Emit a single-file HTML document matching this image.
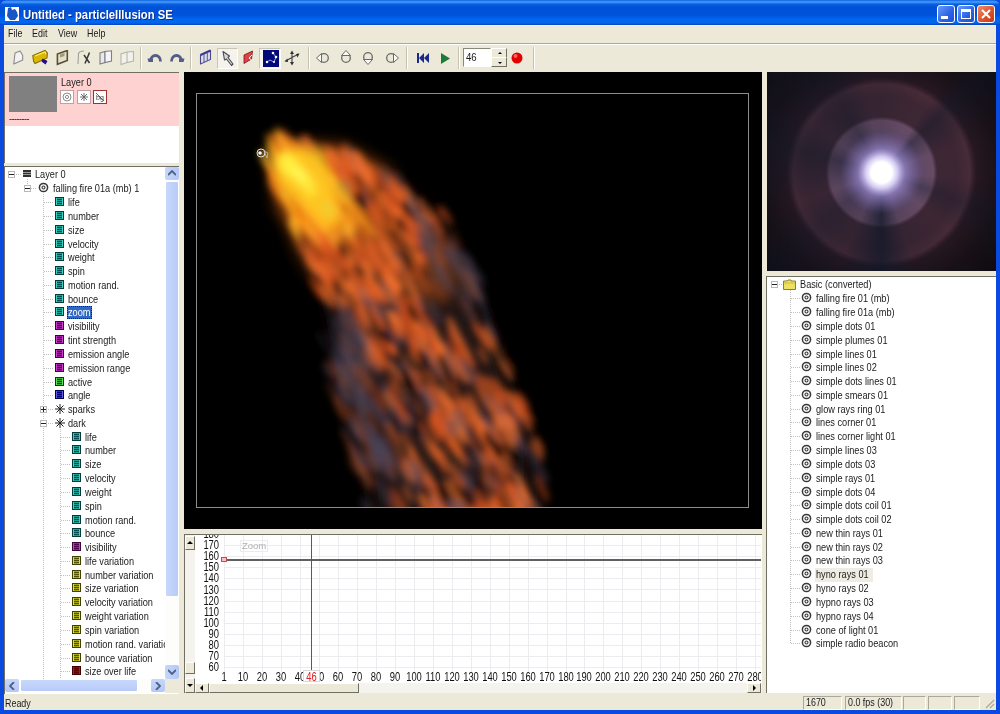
<!DOCTYPE html><html><head><meta charset="utf-8"><style>
*{margin:0;padding:0;box-sizing:border-box}
html,body{width:1000px;height:714px;overflow:hidden;background:#0054e3;font-family:"Liberation Sans",sans-serif;position:relative}
.a{position:absolute}
.t{position:absolute;white-space:nowrap;font-size:9.2px;color:#000;line-height:11px}
.beige{background:#ece9d8}
.tt{position:absolute;white-space:nowrap;font-size:10.5px;line-height:12px;color:#1a1a1a;transform-origin:0 0;transform:scaleX(0.875)}
#wrap{position:absolute;left:0;top:0;width:1000px;height:714px;will-change:transform}
.exp{position:absolute;width:7px;height:7px;border:1px solid #b8b8b8;background:#fff}
.exp:before{content:"";position:absolute;left:0px;top:2px;width:5px;height:1.3px;background:#222}
.exp.plus:after{content:"";position:absolute;left:2px;top:0px;width:1.3px;height:5px;background:#222}
.vl{position:absolute;width:1px;background:repeating-linear-gradient(#c0c0c0 0 1px,transparent 1px 2px)}
.hl{position:absolute;height:1px;background:repeating-linear-gradient(90deg,#c0c0c0 0 1px,transparent 1px 2px)}
.pi{position:absolute;width:9px;height:9px;border:1px solid}
.pi:before{content:"";position:absolute;left:1px;top:1px;width:5px;height:1px;background:var(--ln)}
.pi:after{content:"";position:absolute;left:1px;top:3px;width:5px;height:1px;background:var(--ln);box-shadow:0 2px 0 var(--dk)}
.tgt{position:absolute;width:9px;height:9px;border:1px solid #303030;border-radius:50%}
.tgt:before{content:"";position:absolute;left:2px;top:2px;width:3px;height:3px;border-radius:50%;background:#303030}
.btn3d{position:absolute;background:#ece9d8;border:1px solid;border-color:#fff #716f64 #716f64 #fff}
</style></head><body><div id="wrap"><div class="a" style="left:0;top:0;width:1000px;height:714px;background:#0a4ae0"></div>
<div class="a" style="left:0;top:0;width:1000px;height:25px;background:linear-gradient(#0a5cd8 0px,#3890f8 1.2px,#3890f8 2.5px,#0a60e0 4px,#0052d8 7px,#0052d8 15px,#0066ee 19px,#0066ee 23px,#0840c0 25px);border-radius:7px 7px 0 0"></div>
<div class="a" style="left:5px;top:7px;width:14px;height:14px;background:#fff"></div>
<svg class="a" style="left:5px;top:6px" width="15" height="15" viewBox="0 0 15 15"><path d="M3 2 L6 1 L7 4 L10 3 L12 6 L13 10 L10 14 L5 14 L2 10 Z" fill="#1a55c8"/></svg>
<div class="t" style="left:23px;top:7.7px;font-size:12.4px;font-weight:bold;color:#fff;line-height:14px;text-shadow:1px 1px 0 #0a2a8a;transform-origin:0 0;transform:scaleX(0.91)">Untitled - particleIllusion SE</div>
<div class="a" style="left:937px;top:5px;width:18px;height:18px;border:1px solid #fff;border-radius:3px;background:linear-gradient(135deg,#6a9cf8,#2a62e6 60%,#1d50d0)"></div>
<div class="a" style="left:957px;top:5px;width:18px;height:18px;border:1px solid #fff;border-radius:3px;background:linear-gradient(135deg,#6a9cf8,#2a62e6 60%,#1d50d0)"></div>
<div class="a" style="left:977px;top:5px;width:18px;height:18px;border:1px solid #fff;border-radius:3px;background:linear-gradient(135deg,#f08a6a,#d9502a 60%,#c03a1c)"></div>
<div class="a" style="left:941px;top:16px;width:7px;height:3px;background:#fff"></div>
<div class="a" style="left:961px;top:9px;width:10px;height:10px;border:1px solid #fff;border-top-width:3px"></div>
<svg class="a" style="left:977px;top:5px" width="18" height="18"><path d="M5 5 L13 13 M13 5 L5 13" stroke="#fff" stroke-width="2"/></svg>
<div class="a beige" style="left:4px;top:25px;width:992px;height:685px"></div>
<div class="a" style="left:4px;top:25px;width:992px;height:1px;background:#f4f2ea"></div>
<div class="tt" style="left:8px;top:27.5px;font-size:10.2px">File</div>
<div class="tt" style="left:32px;top:27.5px;font-size:10.2px">Edit</div>
<div class="tt" style="left:58px;top:27.5px;font-size:10.2px">View</div>
<div class="tt" style="left:87px;top:27.5px;font-size:10.2px">Help</div>
<div class="a" style="left:4px;top:43px;width:992px;height:1px;background:#aca899"></div>
<div class="a" style="left:4px;top:44px;width:992px;height:1px;background:#fff"></div>
<div class="a" style="left:140px;top:47px;width:1px;height:22px;background:#c5c2b2"></div>
<div class="a" style="left:141px;top:47px;width:1px;height:22px;background:#fff"></div>
<div class="a" style="left:190px;top:47px;width:1px;height:22px;background:#c5c2b2"></div>
<div class="a" style="left:191px;top:47px;width:1px;height:22px;background:#fff"></div>
<div class="a" style="left:308px;top:47px;width:1px;height:22px;background:#c5c2b2"></div>
<div class="a" style="left:309px;top:47px;width:1px;height:22px;background:#fff"></div>
<div class="a" style="left:406px;top:47px;width:1px;height:22px;background:#c5c2b2"></div>
<div class="a" style="left:407px;top:47px;width:1px;height:22px;background:#fff"></div>
<div class="a" style="left:458px;top:47px;width:1px;height:22px;background:#c5c2b2"></div>
<div class="a" style="left:459px;top:47px;width:1px;height:22px;background:#fff"></div>
<div class="a" style="left:533px;top:47px;width:1px;height:22px;background:#c5c2b2"></div>
<div class="a" style="left:534px;top:47px;width:1px;height:22px;background:#fff"></div>
<svg class="a" style="left:12px;top:50px" width="13" height="16" viewBox="0 0 13 16"><path d="M1.8 14 L3 3 L8.2 1.1 L10.7 5.6 L10.7 10 Z" fill="#f2f2f2" stroke="#8a8a8a" stroke-width="1.1" stroke-linejoin="round"/></svg>
<svg class="a" style="left:32px;top:49px" width="17" height="17" viewBox="0 0 17 17"><path d="M1.5 12 L0.8 6.5 L13 1.5 L15.4 4 L15 9 L3 14.5 Z" fill="#dcb800" stroke="#857000" stroke-width="1.1"/><path d="M3 7 L13 3 L14 5" fill="none" stroke="#fff060" stroke-width="1.2"/><path d="M10.5 9.5 L15.5 12 L13.5 15.5 L9.5 12.5 Z" fill="#2a0a8a"/></svg>
<svg class="a" style="left:56px;top:50px" width="13" height="16" viewBox="0 0 13 16"><path d="M1.4 14.3 L1.4 4 L11.3 0.5 L11.3 10.5 Z" fill="#e4e0d0" stroke="#5a5030" stroke-width="1.6"/><path d="M4 4.5 L8.5 3 L8.5 6 L4 7.5 Z" fill="#a09878"/></svg>
<svg class="a" style="left:77px;top:50px" width="14" height="16" viewBox="0 0 14 16"><path d="M1 14 L1.5 3.5 Q2.5 1 7 1" fill="none" stroke="#a0a0a0" stroke-width="1.1"/><path d="M7 5 L12.5 13 M12.5 2.5 L8 13.5" stroke="#383838" stroke-width="1.5"/></svg>
<svg class="a" style="left:99px;top:50px" width="14" height="16" viewBox="0 0 14 16"><path d="M1 14 L1 3 L6 1.5 L6 12.5 Z" fill="#e8e8f0" stroke="#808080" stroke-width="1.1"/><path d="M6 12.5 L6 1.5 L12.5 0.8 L12.5 11 Z" fill="#f4f4fa" stroke="#808080" stroke-width="1.1"/></svg>
<svg class="a" style="left:120px;top:50px" width="15" height="16" viewBox="0 0 15 16"><path d="M1 14.5 L1 4 L7 2 L7 12.5 Z M7 12.5 L7 2 L13.5 1.5 L13.5 11 Z" fill="#f2f1ea" stroke="#b8b6aa" stroke-width="1.1"/></svg>
<svg class="a" style="left:147px;top:52px" width="17" height="12" viewBox="0 0 17 12"><path d="M3.5 9.5 C3.5 1.5, 13.5 1.5, 13.5 9.5" fill="none" stroke="#555c88" stroke-width="2.8"/><path d="M0.5 6.5 L6 6.5 L6 10 L1.5 10 Z" fill="#555c88"/></svg>
<svg class="a" style="left:168px;top:52px" width="17" height="12" viewBox="0 0 17 12"><path d="M3.5 9.5 C3.5 1.5, 13.5 1.5, 13.5 9.5" fill="none" stroke="#555c88" stroke-width="2.8"/><path d="M11 6.5 L16.5 6.5 L15.5 10 L11 10 Z" fill="#555c88"/></svg>
<svg class="a" style="left:199px;top:49px" width="13" height="17" viewBox="0 0 13 17"><path d="M1.5 15 L1.5 6 L11.5 1.5 L11.5 10.5 Z" fill="#dcdcec" stroke="#4a4a8a" stroke-width="1.1"/><path d="M1.5 6 L11.5 1.5" stroke="#3a3a90" stroke-width="2"/><path d="M5 5 L5 13.5 M8.3 3.5 L8.3 12" stroke="#5a5a90" stroke-width="1"/></svg>
<div class="a" style="left:217px;top:48px;width:21px;height:21px;background:#f4f3ee;border:1px solid;border-color:#c8c5b4 #fff #fff #c8c5b4"></div>
<svg class="a" style="left:221px;top:50px" width="14" height="17" viewBox="0 0 14 17"><path d="M2 1.5 L8.5 6 L7 7.5 L12 14 L10.5 15.5 L5.5 9 L3.5 10 Z" fill="#d8d8d8" stroke="#4a4a4a" stroke-width="1.1" stroke-linejoin="round"/></svg>
<svg class="a" style="left:243px;top:50px" width="11" height="15" viewBox="0 0 11 15"><path d="M1 5 L9.5 1 L8.5 9 L1 13.5 Z" fill="#e0404a" stroke="#701818" stroke-width="0.8"/><path d="M9 5 L6 8 L8.5 10" fill="none" stroke="#f8f8f8" stroke-width="1"/></svg>
<div class="a" style="left:259px;top:48px;width:22px;height:21px;background:#f6f5ef;border:1px solid;border-color:#c8c5b4 #fff #fff #c8c5b4"></div>
<svg class="a" style="left:263px;top:50px" width="16" height="17" viewBox="0 0 16 17"><rect x="0" y="0" width="16" height="17" fill="#000a78"/><path d="M4 12 L7 10 L11 12 L13 7 L10 3" fill="none" stroke="#c0c0ff" stroke-width="0.8"/><circle cx="10" cy="3" r="1.3" fill="#fff"/><circle cx="13" cy="7" r="1.3" fill="#fff"/><circle cx="4" cy="12" r="1.2" fill="#fff"/><circle cx="11" cy="12" r="1" fill="#fff"/></svg>
<svg class="a" style="left:284px;top:50px" width="16" height="16" viewBox="0 0 16 16"><path d="M8 2 L8 14 M1.5 11 L14.5 4" stroke="#404048" stroke-width="1.1"/><path d="M6 4 L8 0.5 L10 4 Z M6 12 L8 15.5 L10 12 Z M0.5 11.5 L3.5 8.5 L4 12 Z M15.5 3.5 L12 4 L13.5 7.5 Z" fill="#303038"/></svg>
<svg class="a" style="left:316px;top:49.5px" width="16" height="16" viewBox="0 0 16 16"><circle cx="8" cy="8" r="4.3" fill="none" stroke="#6a6a6a" stroke-width="1.3"/><path d="M0.5 8 L5.5 3.5 L5.5 12.5 Z" fill="#fafafa" stroke="#6a6a6a" stroke-width="1"/></svg>
<svg class="a" style="left:338px;top:49.5px" width="16" height="16" viewBox="0 0 16 16"><circle cx="8" cy="8" r="4.3" fill="none" stroke="#6a6a6a" stroke-width="1.3"/><path d="M8 0.5 L3.5 5.5 L12.5 5.5 Z" fill="#fafafa" stroke="#6a6a6a" stroke-width="1"/></svg>
<svg class="a" style="left:360px;top:49px" width="16" height="16" viewBox="0 0 16 16"><circle cx="8" cy="8" r="4.3" fill="none" stroke="#6a6a6a" stroke-width="1.3"/><path d="M8 15.5 L3.5 10.5 L12.5 10.5 Z" fill="#fafafa" stroke="#6a6a6a" stroke-width="1"/></svg>
<svg class="a" style="left:383px;top:49.5px" width="16" height="16" viewBox="0 0 16 16"><circle cx="8" cy="8" r="4.3" fill="none" stroke="#6a6a6a" stroke-width="1.3"/><path d="M15.5 8 L10.5 3.5 L10.5 12.5 Z" fill="#fafafa" stroke="#6a6a6a" stroke-width="1"/></svg>
<svg class="a" style="left:417px;top:53px" width="13" height="10" viewBox="0 0 13 10"><path d="M0 0 L2 0 L2 10 L0 10 Z M2 5 L7 0 L7 10 Z M7 5 L12 0 L12 10 Z" fill="#1a2a8a"/></svg>
<svg class="a" style="left:441px;top:53px" width="10" height="11" viewBox="0 0 10 11"><path d="M0 0 L9 5.5 L0 11 Z" fill="#1f7a3a"/></svg>
<div class="a" style="left:463px;top:48px;width:28px;height:19px;background:#fff;border:1px solid;border-color:#8a8878 #fff #fff #8a8878"></div>
<div class="tt" style="left:466px;top:50.5px;font-size:11px">46</div>
<div class="btn3d" style="left:491px;top:48px;width:16px;height:10px"></div>
<div class="btn3d" style="left:491px;top:57px;width:16px;height:10px"></div>
<svg class="a" style="left:497.5px;top:51.5px" width="4" height="2" viewBox="0 0 4 2"><path d="M0 2 L2 0 L4 2 Z" fill="#000"/></svg>
<svg class="a" style="left:497.5px;top:61.5px" width="4" height="2" viewBox="0 0 4 2"><path d="M0 0 L2 2 L4 0 Z" fill="#000"/></svg>
<svg class="a" style="left:511px;top:52px" width="12" height="12" viewBox="0 0 12 12"><circle cx="6" cy="6" r="5.5" fill="#e00000"/><circle cx="4.5" cy="4" r="2" fill="#ff6060"/></svg>
<div class="a" style="left:4px;top:72px;width:175px;height:91px;background:#fff;border-top:1px solid #716f64;border-left:1px solid #716f64"></div>
<div class="a" style="left:5px;top:73px;width:174px;height:53px;background:#ffd2d2"></div>
<div class="a" style="left:9px;top:76px;width:48px;height:36px;background:#808080"></div>
<div class="tt" style="left:60.5px;top:75.8px;font-size:10.5px">Layer 0</div>
<div class="a" style="left:60px;top:90px;width:14px;height:14px;background:#fff;border:1px solid #c0a0a0"></div>
<div class="a" style="left:77px;top:90px;width:14px;height:14px;background:#fff;border:1px solid #c0a0a0"></div>
<div class="a" style="left:93px;top:90px;width:14px;height:14px;background:#fff;border:1px solid #a03030"></div>
<svg class="a" style="left:62px;top:92px" width="10" height="10" viewBox="0 0 10 10"><circle cx="5" cy="5" r="4" fill="none" stroke="#707070" stroke-width="0.8"/><circle cx="5" cy="5" r="1.6" fill="none" stroke="#707070" stroke-width="0.8"/></svg>
<svg class="a" style="left:79px;top:92px" width="10" height="10" viewBox="0 0 10 10"><path d="M5 1 L5 9 M1 5 L9 5 M2 2 L8 8 M8 2 L2 8" stroke="#606060" stroke-width="0.9"/></svg>
<svg class="a" style="left:95px;top:92px" width="10" height="10" viewBox="0 0 10 10"><path d="M1 1 L9 9" stroke="#802020" stroke-width="0.8"/><text x="1" y="8" font-size="7" font-family="Liberation Sans" fill="#404040">bg</text></svg>
<div class="t" style="left:9px;top:114px;font-size:9px;letter-spacing:-0.5px">--------</div>
<div class="a" style="left:4px;top:166px;width:175px;height:528px;background:#fff;border-top:1px solid #716f64;border-left:1px solid #716f64;overflow:hidden"></div>
<div class="a" style="left:5px;top:167px;width:160px;height:512px;overflow:hidden"><div class="vl" style="left:22px;top:12px;height:5px"></div><div class="hl" style="left:9px;top:7px;width:8px"></div><div class="hl" style="left:26px;top:21px;width:6px"></div><div class="vl" style="left:38px;top:27px;height:506px"></div><div class="vl" style="left:54.5px;top:262px;height:271px"></div><div class="exp " style="left:2.5px;top:3.5px"></div><div class="a" style="left:18px;top:3px;width:8px;height:1.5px;background:#303030;box-shadow:0 2.5px 0 #303030,0 5px 0 #303030"></div><div class="tt" style="left:30px;top:0.6999999999999886px">Layer 0</div><div class="exp " style="left:19px;top:17.5px"></div><svg class="a" style="left:33px;top:15px" width="11" height="11"><circle cx="5.5" cy="5.5" r="4.1" fill="none" stroke="#383838" stroke-width="1.5"/><circle cx="5.5" cy="5.5" r="1.5" fill="none" stroke="#383838" stroke-width="1.1"/></svg><div class="tt" style="left:48px;top:14.699999999999989px">falling fire 01a (mb) 1</div><div class="hl" style="left:39px;top:35px;width:10px"></div><div class="pi" style="left:50px;top:29.5px;background:#18a090;border-color:#003c3c;--ln:#005050;--dk:#005050;box-shadow:inset 1px 0 0 #40d0c0,inset -1px 0 0 #40d0c0"></div><div class="tt" style="left:63px;top:28.69999999999999px">life</div><div class="hl" style="left:39px;top:49px;width:10px"></div><div class="pi" style="left:50px;top:43.5px;background:#18a090;border-color:#003c3c;--ln:#005050;--dk:#005050;box-shadow:inset 1px 0 0 #40d0c0,inset -1px 0 0 #40d0c0"></div><div class="tt" style="left:63px;top:42.69999999999999px">number</div><div class="hl" style="left:39px;top:63px;width:10px"></div><div class="pi" style="left:50px;top:57.5px;background:#18a090;border-color:#003c3c;--ln:#005050;--dk:#005050;box-shadow:inset 1px 0 0 #40d0c0,inset -1px 0 0 #40d0c0"></div><div class="tt" style="left:63px;top:56.69999999999999px">size</div><div class="hl" style="left:39px;top:77px;width:10px"></div><div class="pi" style="left:50px;top:71.5px;background:#18a090;border-color:#003c3c;--ln:#005050;--dk:#005050;box-shadow:inset 1px 0 0 #40d0c0,inset -1px 0 0 #40d0c0"></div><div class="tt" style="left:63px;top:70.69999999999999px">velocity</div><div class="hl" style="left:39px;top:90px;width:10px"></div><div class="pi" style="left:50px;top:84.5px;background:#18a090;border-color:#003c3c;--ln:#005050;--dk:#005050;box-shadow:inset 1px 0 0 #40d0c0,inset -1px 0 0 #40d0c0"></div><div class="tt" style="left:63px;top:83.69999999999999px">weight</div><div class="hl" style="left:39px;top:104px;width:10px"></div><div class="pi" style="left:50px;top:98.5px;background:#18a090;border-color:#003c3c;--ln:#005050;--dk:#005050;box-shadow:inset 1px 0 0 #40d0c0,inset -1px 0 0 #40d0c0"></div><div class="tt" style="left:63px;top:97.69999999999999px">spin</div><div class="hl" style="left:39px;top:118px;width:10px"></div><div class="pi" style="left:50px;top:112.5px;background:#18a090;border-color:#003c3c;--ln:#005050;--dk:#005050;box-shadow:inset 1px 0 0 #40d0c0,inset -1px 0 0 #40d0c0"></div><div class="tt" style="left:63px;top:111.69999999999999px">motion rand.</div><div class="hl" style="left:39px;top:132px;width:10px"></div><div class="pi" style="left:50px;top:126.5px;background:#18a090;border-color:#003c3c;--ln:#005050;--dk:#005050;box-shadow:inset 1px 0 0 #40d0c0,inset -1px 0 0 #40d0c0"></div><div class="tt" style="left:63px;top:125.69999999999999px">bounce</div><div class="hl" style="left:39px;top:145px;width:10px"></div><div class="pi" style="left:50px;top:139.5px;background:#18a090;border-color:#003c3c;--ln:#005050;--dk:#005050;box-shadow:inset 1px 0 0 #40d0c0,inset -1px 0 0 #40d0c0"></div><div class="a" style="left:62px;top:138.5px;width:25px;height:13px;background:#316ac5;outline:1px dotted #102060;outline-offset:-1px"></div><div class="tt" style="left:63px;top:138.7px;color:#fff">zoom</div><div class="hl" style="left:39px;top:159px;width:10px"></div><div class="pi" style="left:50px;top:153.5px;background:#9a189a;border-color:#400040;--ln:#500050;--dk:#500050;box-shadow:inset 1px 0 0 #d040d0,inset -1px 0 0 #d040d0"></div><div class="tt" style="left:63px;top:152.7px">visibility</div><div class="hl" style="left:39px;top:173px;width:10px"></div><div class="pi" style="left:50px;top:167.5px;background:#9a189a;border-color:#400040;--ln:#500050;--dk:#500050;box-shadow:inset 1px 0 0 #d040d0,inset -1px 0 0 #d040d0"></div><div class="tt" style="left:63px;top:166.7px">tint strength</div><div class="hl" style="left:39px;top:187px;width:10px"></div><div class="pi" style="left:50px;top:181.5px;background:#9a189a;border-color:#400040;--ln:#500050;--dk:#500050;box-shadow:inset 1px 0 0 #d040d0,inset -1px 0 0 #d040d0"></div><div class="tt" style="left:63px;top:180.7px">emission angle</div><div class="hl" style="left:39px;top:201px;width:10px"></div><div class="pi" style="left:50px;top:195.5px;background:#9a189a;border-color:#400040;--ln:#500050;--dk:#500050;box-shadow:inset 1px 0 0 #d040d0,inset -1px 0 0 #d040d0"></div><div class="tt" style="left:63px;top:194.7px">emission range</div><div class="hl" style="left:39px;top:215px;width:10px"></div><div class="pi" style="left:50px;top:209.5px;background:#30b030;border-color:#004000;--ln:#005000;--dk:#005000;box-shadow:inset 1px 0 0 #60e060,inset -1px 0 0 #60e060"></div><div class="tt" style="left:63px;top:208.7px">active</div><div class="hl" style="left:39px;top:228px;width:10px"></div><div class="pi" style="left:50px;top:222.5px;background:#2a2ac0;border-color:#000050;--ln:#000070;--dk:#000070;box-shadow:inset 1px 0 0 #6060f0,inset -1px 0 0 #6060f0"></div><div class="tt" style="left:63px;top:221.7px">angle</div><div class="exp plus" style="left:35px;top:238.5px"></div><div class="hl" style="left:43px;top:242px;width:6px"></div><svg class="a" style="left:50px;top:237px" width="10" height="10"><path d="M5 0 L5 10 M0 5 L10 5 M1.5 1.5 L8.5 8.5 M8.5 1.5 L1.5 8.5" stroke="#202020" stroke-width="1"/></svg><div class="tt" style="left:63px;top:235.7px">sparks</div><div class="exp " style="left:35px;top:252.5px"></div><div class="hl" style="left:43px;top:256px;width:6px"></div><svg class="a" style="left:50px;top:251px" width="10" height="10"><path d="M5 0 L5 10 M0 5 L10 5 M1.5 1.5 L8.5 8.5 M8.5 1.5 L1.5 8.5" stroke="#202020" stroke-width="1"/></svg><div class="tt" style="left:63px;top:249.7px">dark</div><div class="hl" style="left:55.5px;top:270px;width:10.5px"></div><div class="pi" style="left:67px;top:264.5px;background:#18a090;border-color:#003c3c;--ln:#005050;--dk:#005050;box-shadow:inset 1px 0 0 #40d0c0,inset -1px 0 0 #40d0c0"></div><div class="tt" style="left:80px;top:263.7px">life</div><div class="hl" style="left:55.5px;top:283px;width:10.5px"></div><div class="pi" style="left:67px;top:277.5px;background:#18a090;border-color:#003c3c;--ln:#005050;--dk:#005050;box-shadow:inset 1px 0 0 #40d0c0,inset -1px 0 0 #40d0c0"></div><div class="tt" style="left:80px;top:276.7px">number</div><div class="hl" style="left:55.5px;top:297px;width:10.5px"></div><div class="pi" style="left:67px;top:291.5px;background:#18a090;border-color:#003c3c;--ln:#005050;--dk:#005050;box-shadow:inset 1px 0 0 #40d0c0,inset -1px 0 0 #40d0c0"></div><div class="tt" style="left:80px;top:290.7px">size</div><div class="hl" style="left:55.5px;top:311px;width:10.5px"></div><div class="pi" style="left:67px;top:305.5px;background:#18a090;border-color:#003c3c;--ln:#005050;--dk:#005050;box-shadow:inset 1px 0 0 #40d0c0,inset -1px 0 0 #40d0c0"></div><div class="tt" style="left:80px;top:304.7px">velocity</div><div class="hl" style="left:55.5px;top:325px;width:10.5px"></div><div class="pi" style="left:67px;top:319.5px;background:#18a090;border-color:#003c3c;--ln:#005050;--dk:#005050;box-shadow:inset 1px 0 0 #40d0c0,inset -1px 0 0 #40d0c0"></div><div class="tt" style="left:80px;top:318.7px">weight</div><div class="hl" style="left:55.5px;top:339px;width:10.5px"></div><div class="pi" style="left:67px;top:333.5px;background:#18a090;border-color:#003c3c;--ln:#005050;--dk:#005050;box-shadow:inset 1px 0 0 #40d0c0,inset -1px 0 0 #40d0c0"></div><div class="tt" style="left:80px;top:332.7px">spin</div><div class="hl" style="left:55.5px;top:353px;width:10.5px"></div><div class="pi" style="left:67px;top:347.5px;background:#18a090;border-color:#003c3c;--ln:#005050;--dk:#005050;box-shadow:inset 1px 0 0 #40d0c0,inset -1px 0 0 #40d0c0"></div><div class="tt" style="left:80px;top:346.70000000000005px">motion rand.</div><div class="hl" style="left:55.5px;top:366px;width:10.5px"></div><div class="pi" style="left:67px;top:360.5px;background:#18a090;border-color:#003c3c;--ln:#005050;--dk:#005050;box-shadow:inset 1px 0 0 #40d0c0,inset -1px 0 0 #40d0c0"></div><div class="tt" style="left:80px;top:359.70000000000005px">bounce</div><div class="hl" style="left:55.5px;top:380px;width:10.5px"></div><div class="pi" style="left:67px;top:374.5px;background:#9a189a;border-color:#400040;--ln:#500050;--dk:#500050;box-shadow:inset 1px 0 0 #d040d0,inset -1px 0 0 #d040d0"></div><div class="tt" style="left:80px;top:373.70000000000005px">visibility</div><div class="hl" style="left:55.5px;top:394px;width:10.5px"></div><div class="pi" style="left:67px;top:388.5px;background:#a8a810;border-color:#404000;--ln:#505000;--dk:#505000;box-shadow:inset 1px 0 0 #e0e040,inset -1px 0 0 #e0e040"></div><div class="tt" style="left:80px;top:387.70000000000005px">life variation</div><div class="hl" style="left:55.5px;top:408px;width:10.5px"></div><div class="pi" style="left:67px;top:402.5px;background:#a8a810;border-color:#404000;--ln:#505000;--dk:#505000;box-shadow:inset 1px 0 0 #e0e040,inset -1px 0 0 #e0e040"></div><div class="tt" style="left:80px;top:401.70000000000005px">number variation</div><div class="hl" style="left:55.5px;top:421px;width:10.5px"></div><div class="pi" style="left:67px;top:415.5px;background:#a8a810;border-color:#404000;--ln:#505000;--dk:#505000;box-shadow:inset 1px 0 0 #e0e040,inset -1px 0 0 #e0e040"></div><div class="tt" style="left:80px;top:414.70000000000005px">size variation</div><div class="hl" style="left:55.5px;top:435px;width:10.5px"></div><div class="pi" style="left:67px;top:429.5px;background:#a8a810;border-color:#404000;--ln:#505000;--dk:#505000;box-shadow:inset 1px 0 0 #e0e040,inset -1px 0 0 #e0e040"></div><div class="tt" style="left:80px;top:428.70000000000005px">velocity variation</div><div class="hl" style="left:55.5px;top:449px;width:10.5px"></div><div class="pi" style="left:67px;top:443.5px;background:#a8a810;border-color:#404000;--ln:#505000;--dk:#505000;box-shadow:inset 1px 0 0 #e0e040,inset -1px 0 0 #e0e040"></div><div class="tt" style="left:80px;top:442.70000000000005px">weight variation</div><div class="hl" style="left:55.5px;top:463px;width:10.5px"></div><div class="pi" style="left:67px;top:457.5px;background:#a8a810;border-color:#404000;--ln:#505000;--dk:#505000;box-shadow:inset 1px 0 0 #e0e040,inset -1px 0 0 #e0e040"></div><div class="tt" style="left:80px;top:456.70000000000005px">spin variation</div><div class="hl" style="left:55.5px;top:477px;width:10.5px"></div><div class="pi" style="left:67px;top:471.5px;background:#a8a810;border-color:#404000;--ln:#505000;--dk:#505000;box-shadow:inset 1px 0 0 #e0e040,inset -1px 0 0 #e0e040"></div><div class="tt" style="left:80px;top:470.70000000000005px">motion rand. variation</div><div class="hl" style="left:55.5px;top:491px;width:10.5px"></div><div class="pi" style="left:67px;top:485.5px;background:#a8a810;border-color:#404000;--ln:#505000;--dk:#505000;box-shadow:inset 1px 0 0 #e0e040,inset -1px 0 0 #e0e040"></div><div class="tt" style="left:80px;top:484.70000000000005px">bounce variation</div><div class="hl" style="left:55.5px;top:504px;width:10.5px"></div><div class="pi" style="left:67px;top:498.5px;background:#900010;border-color:#400000;--ln:#600000;--dk:#600000;box-shadow:inset 1px 0 0 #b02020,inset -1px 0 0 #b02020"></div><div class="tt" style="left:80px;top:497.70000000000005px">size over life</div></div>
<div class="a" style="left:165px;top:167px;width:14px;height:512px;background:#fdfdfb"></div>
<div class="a" style="left:165px;top:167px;width:14px;height:13px;background:linear-gradient(90deg,#c6d6fb,#b4c8f6);border-radius:2px"></div>
<svg class="a" style="left:168px;top:170px" width="8" height="6" viewBox="0 0 8 6"><path d="M0 5 L4 1 L8 5" fill="none" stroke="#4d6185" stroke-width="1.8"/></svg>
<div class="a" style="left:165px;top:181px;width:14px;height:416px;background:linear-gradient(90deg,#c8d8fc,#b8cbf8);border:1px solid #fff;border-radius:2px"></div>
<div class="a" style="left:165px;top:665px;width:14px;height:14px;background:linear-gradient(90deg,#c6d6fb,#b4c8f6);border-radius:2px"></div>
<svg class="a" style="left:168px;top:669px" width="8" height="6" viewBox="0 0 8 6"><path d="M0 1 L4 5 L8 1" fill="none" stroke="#4d6185" stroke-width="1.8"/></svg>
<div class="a" style="left:5px;top:679px;width:160px;height:14px;background:#fdfdfb"></div>
<div class="a" style="left:5px;top:679px;width:14px;height:13px;background:linear-gradient(#c6d6fb,#b4c8f6);border-radius:2px"></div>
<svg class="a" style="left:9px;top:682px" width="6" height="8" viewBox="0 0 6 8"><path d="M5 0 L1 4 L5 8" fill="none" stroke="#4d6185" stroke-width="1.8"/></svg>
<div class="a" style="left:20px;top:679px;width:118px;height:13px;background:linear-gradient(#c8d8fc,#b8cbf8);border:1px solid #fff;border-radius:2px"></div>
<div class="a" style="left:151px;top:679px;width:14px;height:13px;background:linear-gradient(#c6d6fb,#b4c8f6);border-radius:2px"></div>
<svg class="a" style="left:155px;top:682px" width="6" height="8" viewBox="0 0 6 8"><path d="M1 0 L5 4 L1 8" fill="none" stroke="#4d6185" stroke-width="1.8"/></svg>
<div class="a beige" style="left:165px;top:679px;width:14px;height:14px"></div>
<div class="a" style="left:183.5px;top:72px;width:578px;height:457px;background:#000"></div>
<svg class="a" style="left:196px;top:93px" width="553" height="414" viewBox="0 0 553 414"><defs><filter id="b12" x="-50%" y="-50%" width="200%" height="200%"><feGaussianBlur stdDeviation="10"/></filter><filter id="b8" x="-50%" y="-50%" width="200%" height="200%"><feGaussianBlur stdDeviation="8"/></filter><filter id="b6" x="-50%" y="-50%" width="200%" height="200%"><feGaussianBlur stdDeviation="6"/></filter><filter id="b3" x="-20%" y="-20%" width="140%" height="140%"><feGaussianBlur stdDeviation="3.8"/></filter><filter id="b4" x="-50%" y="-50%" width="200%" height="200%"><feGaussianBlur stdDeviation="4"/></filter></defs><polygon points="76,49 75,57 75,65 77,73 80,81 83,89 88,97 92,105 97,113 102,121 106,129 109,137 112,145 115,153 118,161 121,169 124,177 127,185 129,193 131,201 132,209 134,217 136,225 138,233 140,241 141,249 142,257 144,265 145,273 146,281 147,289 149,297 151,305 154,313 157,321 160,329 163,337 166,345 169,353 170,361 171,369 172,377 173,385 174,393 175,401 176,409 177,417 178,425 335,425 335,417 335,409 335,401 335,393 335,385 335,377 335,369 334,361 334,353 332,345 329,337 326,329 323,321 320,313 317,305 314,297 312,289 309,281 306,273 303,265 301,257 298,249 295,241 292,233 289,225 286,217 283,209 279,201 276,193 273,185 269,177 266,169 262,161 258,153 254,145 250,137 247,129 237,121 227,113 217,105 207,97 197,89 183,81 168,73 153,65 130,57 102,49" fill="#241418" filter="url(#b12)"/><polygon points="74,63 104,50 149,53 194,77 216,119 199,147 149,162 104,147 81,115" fill="#b85818" opacity="0.8" filter="url(#b8)"/><polygon points="89,107 144,97 224,127 264,177 254,207 184,217 124,197 99,157" fill="#a04a18" opacity="0.55" filter="url(#b8)"/><g filter="url(#b3)"><ellipse cx="276.3" cy="307.9" rx="11.5" ry="3.1" transform="rotate(62 276.3 307.9)" fill="#d85420" opacity="0.62"/><ellipse cx="153.4" cy="225.5" rx="14.9" ry="3.0" transform="rotate(64 153.4 225.5)" fill="#4a4458" opacity="0.42"/><ellipse cx="272.9" cy="343.7" rx="16.7" ry="4.7" transform="rotate(66 272.9 343.7)" fill="#544a60" opacity="0.35"/><ellipse cx="104.1" cy="60.4" rx="9.1" ry="2.2" transform="rotate(64 104.1 60.4)" fill="#f08020" opacity="0.80"/><ellipse cx="266.8" cy="261.0" rx="11.0" ry="4.0" transform="rotate(67 266.8 261.0)" fill="#080404" opacity="0.54"/><ellipse cx="131.8" cy="155.7" rx="10.7" ry="2.2" transform="rotate(60 131.8 155.7)" fill="#f06828" opacity="0.47"/><ellipse cx="183.1" cy="107.0" rx="11.5" ry="2.8" transform="rotate(61 183.1 107.0)" fill="#d85420" opacity="0.52"/><ellipse cx="171.6" cy="144.4" rx="9.9" ry="3.1" transform="rotate(65 171.6 144.4)" fill="#e85a20" opacity="0.36"/><ellipse cx="144.3" cy="315.3" rx="14.5" ry="4.1" transform="rotate(66 144.3 315.3)" fill="#c85a20" opacity="0.45"/><ellipse cx="166.3" cy="332.6" rx="10.5" ry="2.8" transform="rotate(57 166.3 332.6)" fill="#a84818" opacity="0.33"/><ellipse cx="198.9" cy="166.6" rx="16.4" ry="4.4" transform="rotate(57 198.9 166.6)" fill="#d85420" opacity="0.68"/><ellipse cx="184.3" cy="108.0" rx="10.4" ry="3.3" transform="rotate(62 184.3 108.0)" fill="#080404" opacity="0.67"/><ellipse cx="301.8" cy="327.9" rx="11.4" ry="2.8" transform="rotate(57 301.8 327.9)" fill="#ff7a30" opacity="0.59"/><ellipse cx="172.0" cy="301.6" rx="12.2" ry="3.0" transform="rotate(62 172.0 301.6)" fill="#4a4458" opacity="0.31"/><ellipse cx="196.2" cy="177.4" rx="9.7" ry="3.4" transform="rotate(64 196.2 177.4)" fill="#080404" opacity="0.74"/><ellipse cx="197.1" cy="106.6" rx="15.5" ry="4.2" transform="rotate(59 197.1 106.6)" fill="#c84a18" opacity="0.58"/><ellipse cx="222.9" cy="314.3" rx="9.2" ry="2.1" transform="rotate(65 222.9 314.3)" fill="#f06828" opacity="0.43"/><ellipse cx="295.5" cy="250.6" rx="17.5" ry="5.5" transform="rotate(61 295.5 250.6)" fill="#ff7a30" opacity="0.35"/><ellipse cx="112.2" cy="122.8" rx="17.4" ry="4.6" transform="rotate(67 112.2 122.8)" fill="#ffa020" opacity="0.53"/><ellipse cx="196.5" cy="290.7" rx="9.7" ry="2.4" transform="rotate(64 196.5 290.7)" fill="#e85a20" opacity="0.48"/><ellipse cx="316.7" cy="265.6" rx="11.1" ry="5.0" transform="rotate(64 316.7 265.6)" fill="#080404" opacity="0.76"/><ellipse cx="131.5" cy="278.6" rx="10.1" ry="2.3" transform="rotate(62 131.5 278.6)" fill="#544c62" opacity="0.45"/><ellipse cx="120.2" cy="112.2" rx="12.4" ry="3.2" transform="rotate(66 120.2 112.2)" fill="#f08020" opacity="0.47"/><ellipse cx="211.4" cy="143.7" rx="15.6" ry="5.0" transform="rotate(57 211.4 143.7)" fill="#d85420" opacity="0.40"/><ellipse cx="214.2" cy="376.6" rx="13.4" ry="4.1" transform="rotate(62 214.2 376.6)" fill="#f07030" opacity="0.65"/><ellipse cx="323.3" cy="403.6" rx="12.2" ry="3.3" transform="rotate(64 323.3 403.6)" fill="#d85420" opacity="0.57"/><ellipse cx="220.0" cy="333.0" rx="16.1" ry="5.0" transform="rotate(60 220.0 333.0)" fill="#6a5a70" opacity="0.42"/><ellipse cx="194.6" cy="331.0" rx="17.4" ry="3.7" transform="rotate(62 194.6 331.0)" fill="#544a60" opacity="0.43"/><ellipse cx="243.5" cy="329.0" rx="14.8" ry="3.6" transform="rotate(60 243.5 329.0)" fill="#e85a20" opacity="0.66"/><ellipse cx="136.3" cy="121.8" rx="13.6" ry="4.3" transform="rotate(61 136.3 121.8)" fill="#ffb020" opacity="0.69"/><ellipse cx="317.5" cy="407.8" rx="7.2" ry="2.6" transform="rotate(63 317.5 407.8)" fill="#080404" opacity="0.66"/><ellipse cx="257.2" cy="308.4" rx="12.0" ry="5.1" transform="rotate(66 257.2 308.4)" fill="#080404" opacity="0.77"/><ellipse cx="303.6" cy="306.3" rx="11.9" ry="2.9" transform="rotate(62 303.6 306.3)" fill="#6a5a70" opacity="0.49"/><ellipse cx="158.5" cy="213.4" rx="10.0" ry="2.6" transform="rotate(58 158.5 213.4)" fill="#c85a20" opacity="0.36"/><ellipse cx="131.9" cy="164.9" rx="14.4" ry="3.0" transform="rotate(65 131.9 164.9)" fill="#e85a20" opacity="0.51"/><ellipse cx="298.2" cy="313.0" rx="11.4" ry="4.6" transform="rotate(61 298.2 313.0)" fill="#080404" opacity="0.81"/><ellipse cx="155.3" cy="125.7" rx="10.6" ry="3.3" transform="rotate(60 155.3 125.7)" fill="#ff9a18" opacity="0.76"/><ellipse cx="290.1" cy="348.8" rx="15.0" ry="4.2" transform="rotate(60 290.1 348.8)" fill="#d85420" opacity="0.69"/><ellipse cx="180.2" cy="258.5" rx="15.5" ry="3.7" transform="rotate(64 180.2 258.5)" fill="#d85420" opacity="0.39"/><ellipse cx="255.0" cy="412.6" rx="13.6" ry="2.9" transform="rotate(66 255.0 412.6)" fill="#6a6078" opacity="0.34"/><ellipse cx="135.6" cy="139.1" rx="10.7" ry="3.3" transform="rotate(59 135.6 139.1)" fill="#ffa020" opacity="0.65"/><ellipse cx="261.2" cy="411.4" rx="11.1" ry="3.1" transform="rotate(61 261.2 411.4)" fill="#6a6078" opacity="0.35"/><ellipse cx="200.8" cy="120.7" rx="12.3" ry="2.7" transform="rotate(65 200.8 120.7)" fill="#ff7a30" opacity="0.68"/><ellipse cx="204.8" cy="92.9" rx="8.4" ry="2.9" transform="rotate(59 204.8 92.9)" fill="#080404" opacity="0.84"/><ellipse cx="184.6" cy="357.7" rx="15.9" ry="3.6" transform="rotate(66 184.6 357.7)" fill="#4a4458" opacity="0.52"/><ellipse cx="256.1" cy="418.9" rx="17.7" ry="4.9" transform="rotate(66 256.1 418.9)" fill="#d85420" opacity="0.49"/><ellipse cx="135.5" cy="245.3" rx="10.5" ry="2.2" transform="rotate(63 135.5 245.3)" fill="#544c62" opacity="0.31"/><ellipse cx="162.0" cy="175.4" rx="8.1" ry="3.4" transform="rotate(63 162.0 175.4)" fill="#080404" opacity="0.83"/><ellipse cx="181.9" cy="92.1" rx="7.9" ry="3.1" transform="rotate(64 181.9 92.1)" fill="#080404" opacity="0.61"/><ellipse cx="127.9" cy="100.1" rx="14.7" ry="4.4" transform="rotate(59 127.9 100.1)" fill="#f08020" opacity="0.77"/><ellipse cx="141.1" cy="65.3" rx="9.4" ry="1.9" transform="rotate(63 141.1 65.3)" fill="#ff7a30" opacity="0.56"/><ellipse cx="276.1" cy="369.1" rx="9.9" ry="3.1" transform="rotate(60 276.1 369.1)" fill="#544a60" opacity="0.38"/><ellipse cx="161.0" cy="195.1" rx="15.6" ry="3.6" transform="rotate(65 161.0 195.1)" fill="#ff7a30" opacity="0.43"/><ellipse cx="241.0" cy="120.6" rx="9.2" ry="3.8" transform="rotate(59 241.0 120.6)" fill="#080404" opacity="0.83"/><ellipse cx="169.8" cy="73.6" rx="6.8" ry="2.8" transform="rotate(66 169.8 73.6)" fill="#080404" opacity="0.67"/><ellipse cx="257.2" cy="333.4" rx="17.9" ry="4.7" transform="rotate(58 257.2 333.4)" fill="#5c5468" opacity="0.43"/><ellipse cx="244.9" cy="413.9" rx="14.5" ry="3.6" transform="rotate(60 244.9 413.9)" fill="#d85420" opacity="0.53"/><ellipse cx="256.6" cy="331.2" rx="17.3" ry="4.8" transform="rotate(61 256.6 331.2)" fill="#f07030" opacity="0.45"/><ellipse cx="310.2" cy="421.0" rx="10.3" ry="4.5" transform="rotate(62 310.2 421.0)" fill="#080404" opacity="0.66"/><ellipse cx="264.1" cy="396.4" rx="15.2" ry="3.6" transform="rotate(65 264.1 396.4)" fill="#6a6078" opacity="0.41"/><ellipse cx="297.0" cy="357.4" rx="17.6" ry="3.9" transform="rotate(65 297.0 357.4)" fill="#c84a18" opacity="0.42"/><ellipse cx="149.1" cy="296.3" rx="14.4" ry="4.3" transform="rotate(63 149.1 296.3)" fill="#c85a20" opacity="0.41"/><ellipse cx="151.1" cy="283.9" rx="13.6" ry="4.0" transform="rotate(61 151.1 283.9)" fill="#3e3a4c" opacity="0.36"/><ellipse cx="169.0" cy="313.2" rx="9.1" ry="2.1" transform="rotate(66 169.0 313.2)" fill="#544c62" opacity="0.40"/><ellipse cx="306.9" cy="343.1" rx="9.4" ry="3.6" transform="rotate(58 306.9 343.1)" fill="#080404" opacity="0.81"/><ellipse cx="329.9" cy="403.2" rx="11.4" ry="2.5" transform="rotate(58 329.9 403.2)" fill="#e85a20" opacity="0.67"/><ellipse cx="268.9" cy="319.1" rx="13.7" ry="4.3" transform="rotate(67 268.9 319.1)" fill="#f07030" opacity="0.38"/><ellipse cx="279.4" cy="230.8" rx="12.6" ry="3.8" transform="rotate(67 279.4 230.8)" fill="#a84818" opacity="0.40"/><ellipse cx="87.6" cy="77.7" rx="17.7" ry="4.3" transform="rotate(63 87.6 77.7)" fill="#ffc030" opacity="0.72"/><ellipse cx="200.5" cy="86.5" rx="11.3" ry="3.9" transform="rotate(64 200.5 86.5)" fill="#080404" opacity="0.64"/><ellipse cx="208.4" cy="179.4" rx="9.9" ry="3.1" transform="rotate(58 208.4 179.4)" fill="#080404" opacity="0.68"/><ellipse cx="195.6" cy="221.5" rx="11.5" ry="3.2" transform="rotate(63 195.6 221.5)" fill="#f06828" opacity="0.50"/><ellipse cx="295.7" cy="359.5" rx="14.0" ry="3.2" transform="rotate(61 295.7 359.5)" fill="#c84a18" opacity="0.64"/><ellipse cx="117.6" cy="140.9" rx="16.4" ry="4.6" transform="rotate(58 117.6 140.9)" fill="#ff9a18" opacity="0.83"/><ellipse cx="276.3" cy="318.5" rx="16.1" ry="5.1" transform="rotate(62 276.3 318.5)" fill="#ff7a30" opacity="0.49"/><ellipse cx="239.6" cy="145.1" rx="12.3" ry="3.1" transform="rotate(66 239.6 145.1)" fill="#a84818" opacity="0.32"/><ellipse cx="197.6" cy="103.9" rx="12.4" ry="4.6" transform="rotate(59 197.6 103.9)" fill="#080404" opacity="0.65"/><ellipse cx="148.5" cy="168.2" rx="12.0" ry="3.0" transform="rotate(63 148.5 168.2)" fill="#c84a18" opacity="0.62"/><ellipse cx="119.1" cy="155.3" rx="17.9" ry="5.6" transform="rotate(66 119.1 155.3)" fill="#c84a18" opacity="0.63"/><ellipse cx="235.5" cy="350.4" rx="11.0" ry="3.6" transform="rotate(66 235.5 350.4)" fill="#080404" opacity="0.51"/><ellipse cx="306.3" cy="318.9" rx="15.4" ry="4.4" transform="rotate(60 306.3 318.9)" fill="#f06828" opacity="0.56"/><ellipse cx="293.0" cy="431.6" rx="9.4" ry="3.0" transform="rotate(65 293.0 431.6)" fill="#e85a20" opacity="0.56"/><ellipse cx="72.8" cy="72.3" rx="17.8" ry="4.1" transform="rotate(58 72.8 72.3)" fill="#ffc030" opacity="0.71"/><ellipse cx="78.1" cy="91.4" rx="13.4" ry="3.7" transform="rotate(64 78.1 91.4)" fill="#f08020" opacity="0.55"/><ellipse cx="85.4" cy="44.9" rx="12.6" ry="3.4" transform="rotate(62 85.4 44.9)" fill="#ff9a18" opacity="0.66"/><ellipse cx="155.5" cy="196.3" rx="14.8" ry="4.1" transform="rotate(63 155.5 196.3)" fill="#e85a20" opacity="0.53"/><ellipse cx="151.5" cy="125.4" rx="10.3" ry="2.9" transform="rotate(67 151.5 125.4)" fill="#f08020" opacity="0.62"/><ellipse cx="144.0" cy="235.4" rx="16.9" ry="5.1" transform="rotate(65 144.0 235.4)" fill="#3e3a4c" opacity="0.31"/><ellipse cx="287.6" cy="338.3" rx="14.8" ry="3.5" transform="rotate(64 287.6 338.3)" fill="#e85a20" opacity="0.55"/><ellipse cx="157.7" cy="262.3" rx="13.1" ry="3.4" transform="rotate(64 157.7 262.3)" fill="#3e3a4c" opacity="0.41"/><ellipse cx="301.7" cy="343.1" rx="13.3" ry="4.2" transform="rotate(60 301.7 343.1)" fill="#f07030" opacity="0.51"/><ellipse cx="106.8" cy="156.5" rx="15.1" ry="3.1" transform="rotate(63 106.8 156.5)" fill="#ff7a30" opacity="0.52"/><ellipse cx="157.5" cy="362.1" rx="14.9" ry="3.3" transform="rotate(62 157.5 362.1)" fill="#c85a20" opacity="0.38"/><ellipse cx="97.6" cy="97.9" rx="13.0" ry="3.5" transform="rotate(67 97.6 97.9)" fill="#f08020" opacity="0.67"/><ellipse cx="307.9" cy="368.0" rx="16.4" ry="4.3" transform="rotate(64 307.9 368.0)" fill="#ff7a30" opacity="0.49"/><ellipse cx="135.0" cy="275.9" rx="11.7" ry="2.5" transform="rotate(64 135.0 275.9)" fill="#c85a20" opacity="0.37"/><ellipse cx="262.8" cy="382.1" rx="14.5" ry="3.6" transform="rotate(61 262.8 382.1)" fill="#f07030" opacity="0.43"/><ellipse cx="315.7" cy="325.8" rx="12.9" ry="3.5" transform="rotate(65 315.7 325.8)" fill="#e85a20" opacity="0.64"/><ellipse cx="250.2" cy="262.9" rx="11.8" ry="3.2" transform="rotate(61 250.2 262.9)" fill="#5c5468" opacity="0.36"/><ellipse cx="155.9" cy="227.5" rx="13.1" ry="3.1" transform="rotate(59 155.9 227.5)" fill="#3e3a4c" opacity="0.31"/><ellipse cx="173.4" cy="311.7" rx="9.7" ry="2.7" transform="rotate(64 173.4 311.7)" fill="#3e3a4c" opacity="0.39"/><ellipse cx="194.8" cy="254.8" rx="11.4" ry="2.9" transform="rotate(61 194.8 254.8)" fill="#f06828" opacity="0.67"/><ellipse cx="163.7" cy="106.8" rx="10.9" ry="4.3" transform="rotate(60 163.7 106.8)" fill="#080404" opacity="0.78"/><ellipse cx="222.1" cy="143.0" rx="10.7" ry="2.7" transform="rotate(60 222.1 143.0)" fill="#a84818" opacity="0.33"/><ellipse cx="96.4" cy="88.8" rx="12.9" ry="3.0" transform="rotate(66 96.4 88.8)" fill="#f08020" opacity="0.71"/><ellipse cx="132.5" cy="130.1" rx="10.6" ry="2.5" transform="rotate(66 132.5 130.1)" fill="#f08020" opacity="0.52"/><ellipse cx="264.1" cy="318.5" rx="11.4" ry="2.8" transform="rotate(64 264.1 318.5)" fill="#6a6078" opacity="0.41"/><ellipse cx="345.5" cy="349.6" rx="9.1" ry="3.2" transform="rotate(66 345.5 349.6)" fill="#080404" opacity="0.66"/><ellipse cx="212.8" cy="353.3" rx="15.0" ry="4.3" transform="rotate(63 212.8 353.3)" fill="#f06828" opacity="0.44"/><ellipse cx="156.0" cy="127.9" rx="12.0" ry="3.1" transform="rotate(58 156.0 127.9)" fill="#e87818" opacity="0.82"/><ellipse cx="165.9" cy="76.9" rx="16.7" ry="4.3" transform="rotate(67 165.9 76.9)" fill="#e85a20" opacity="0.51"/><ellipse cx="286.3" cy="243.9" rx="16.2" ry="3.8" transform="rotate(58 286.3 243.9)" fill="#e85a20" opacity="0.65"/><ellipse cx="240.7" cy="189.5" rx="13.4" ry="2.7" transform="rotate(59 240.7 189.5)" fill="#3e3a4c" opacity="0.33"/><ellipse cx="191.9" cy="102.8" rx="11.1" ry="2.9" transform="rotate(62 191.9 102.8)" fill="#f07030" opacity="0.60"/><ellipse cx="135.5" cy="133.0" rx="16.8" ry="3.6" transform="rotate(59 135.5 133.0)" fill="#ffc030" opacity="0.77"/><ellipse cx="288.9" cy="429.0" rx="7.2" ry="2.4" transform="rotate(60 288.9 429.0)" fill="#080404" opacity="0.81"/><ellipse cx="96.8" cy="92.7" rx="17.3" ry="4.9" transform="rotate(63 96.8 92.7)" fill="#ffa020" opacity="0.60"/><ellipse cx="205.3" cy="298.6" rx="15.3" ry="3.8" transform="rotate(57 205.3 298.6)" fill="#f06828" opacity="0.37"/><ellipse cx="165.1" cy="192.9" rx="14.3" ry="3.4" transform="rotate(61 165.1 192.9)" fill="#d85420" opacity="0.65"/><ellipse cx="94.2" cy="86.4" rx="10.8" ry="3.4" transform="rotate(62 94.2 86.4)" fill="#ff9a18" opacity="0.70"/><ellipse cx="203.3" cy="100.0" rx="12.4" ry="2.5" transform="rotate(64 203.3 100.0)" fill="#e85a20" opacity="0.47"/><ellipse cx="182.6" cy="348.3" rx="17.9" ry="3.6" transform="rotate(58 182.6 348.3)" fill="#4a4458" opacity="0.55"/><ellipse cx="246.3" cy="414.4" rx="17.7" ry="3.5" transform="rotate(58 246.3 414.4)" fill="#e85a20" opacity="0.64"/><ellipse cx="198.7" cy="194.2" rx="8.2" ry="3.4" transform="rotate(59 198.7 194.2)" fill="#080404" opacity="0.66"/><ellipse cx="164.1" cy="370.0" rx="13.1" ry="3.0" transform="rotate(67 164.1 370.0)" fill="#3e3a4c" opacity="0.51"/><ellipse cx="224.0" cy="168.3" rx="14.1" ry="3.6" transform="rotate(65 224.0 168.3)" fill="#f06828" opacity="0.68"/><ellipse cx="204.9" cy="361.2" rx="12.6" ry="3.3" transform="rotate(66 204.9 361.2)" fill="#f07030" opacity="0.39"/><ellipse cx="196.0" cy="340.6" rx="14.6" ry="4.5" transform="rotate(59 196.0 340.6)" fill="#f06828" opacity="0.42"/><ellipse cx="166.0" cy="248.1" rx="14.5" ry="4.3" transform="rotate(58 166.0 248.1)" fill="#544c62" opacity="0.34"/><ellipse cx="288.0" cy="376.4" rx="11.5" ry="4.0" transform="rotate(58 288.0 376.4)" fill="#080404" opacity="0.62"/><ellipse cx="85.8" cy="67.3" rx="18.0" ry="3.7" transform="rotate(64 85.8 67.3)" fill="#f08020" opacity="0.81"/><ellipse cx="123.9" cy="77.6" rx="14.0" ry="3.3" transform="rotate(58 123.9 77.6)" fill="#ffb020" opacity="0.82"/><ellipse cx="153.1" cy="267.1" rx="14.0" ry="3.0" transform="rotate(62 153.1 267.1)" fill="#c85a20" opacity="0.39"/><ellipse cx="229.5" cy="237.8" rx="14.6" ry="4.1" transform="rotate(65 229.5 237.8)" fill="#6a5a70" opacity="0.37"/><ellipse cx="182.4" cy="362.5" rx="9.1" ry="2.9" transform="rotate(67 182.4 362.5)" fill="#544c62" opacity="0.42"/><ellipse cx="281.3" cy="195.9" rx="15.9" ry="4.6" transform="rotate(62 281.3 195.9)" fill="#544c62" opacity="0.43"/><ellipse cx="160.9" cy="288.5" rx="14.3" ry="4.0" transform="rotate(65 160.9 288.5)" fill="#4a4458" opacity="0.54"/><ellipse cx="195.5" cy="245.7" rx="14.8" ry="4.5" transform="rotate(61 195.5 245.7)" fill="#544a60" opacity="0.45"/><ellipse cx="212.4" cy="115.9" rx="16.1" ry="5.1" transform="rotate(63 212.4 115.9)" fill="#c84a18" opacity="0.47"/><ellipse cx="290.5" cy="289.7" rx="9.2" ry="2.6" transform="rotate(63 290.5 289.7)" fill="#f06828" opacity="0.49"/><ellipse cx="267.0" cy="330.1" rx="11.0" ry="3.6" transform="rotate(63 267.0 330.1)" fill="#080404" opacity="0.57"/><ellipse cx="311.8" cy="342.5" rx="10.5" ry="2.5" transform="rotate(59 311.8 342.5)" fill="#e85a20" opacity="0.51"/><ellipse cx="161.6" cy="298.6" rx="12.7" ry="3.8" transform="rotate(58 161.6 298.6)" fill="#a84818" opacity="0.35"/><ellipse cx="292.5" cy="309.1" rx="15.5" ry="4.2" transform="rotate(58 292.5 309.1)" fill="#f06828" opacity="0.47"/><ellipse cx="147.8" cy="82.5" rx="17.0" ry="3.9" transform="rotate(63 147.8 82.5)" fill="#5c5468" opacity="0.42"/><ellipse cx="142.2" cy="156.4" rx="10.9" ry="3.3" transform="rotate(61 142.2 156.4)" fill="#e85a20" opacity="0.67"/><ellipse cx="262.5" cy="359.2" rx="17.6" ry="4.1" transform="rotate(60 262.5 359.2)" fill="#f07030" opacity="0.58"/><ellipse cx="176.7" cy="335.1" rx="10.0" ry="3.2" transform="rotate(59 176.7 335.1)" fill="#3e3a4c" opacity="0.53"/><ellipse cx="130.6" cy="203.7" rx="14.1" ry="3.8" transform="rotate(59 130.6 203.7)" fill="#ff7a30" opacity="0.61"/><ellipse cx="192.3" cy="378.5" rx="10.8" ry="3.1" transform="rotate(66 192.3 378.5)" fill="#3e3a4c" opacity="0.44"/><ellipse cx="172.0" cy="249.9" rx="14.5" ry="3.4" transform="rotate(62 172.0 249.9)" fill="#544a60" opacity="0.46"/><ellipse cx="259.0" cy="416.9" rx="15.3" ry="4.7" transform="rotate(62 259.0 416.9)" fill="#6a6078" opacity="0.46"/><ellipse cx="222.8" cy="157.2" rx="13.7" ry="3.0" transform="rotate(64 222.8 157.2)" fill="#e85a20" opacity="0.72"/><ellipse cx="81.3" cy="98.8" rx="16.2" ry="4.8" transform="rotate(58 81.3 98.8)" fill="#e87818" opacity="0.58"/><ellipse cx="190.0" cy="248.0" rx="11.6" ry="2.6" transform="rotate(64 190.0 248.0)" fill="#c84a18" opacity="0.49"/><ellipse cx="166.5" cy="307.7" rx="16.8" ry="4.3" transform="rotate(59 166.5 307.7)" fill="#3e3a4c" opacity="0.51"/><ellipse cx="122.7" cy="124.7" rx="11.9" ry="3.4" transform="rotate(67 122.7 124.7)" fill="#ff9a18" opacity="0.85"/><ellipse cx="311.6" cy="319.1" rx="15.4" ry="4.5" transform="rotate(63 311.6 319.1)" fill="#f06828" opacity="0.66"/><ellipse cx="122.3" cy="125.7" rx="11.6" ry="2.6" transform="rotate(65 122.3 125.7)" fill="#ffc030" opacity="0.48"/><ellipse cx="304.1" cy="347.4" rx="15.9" ry="3.6" transform="rotate(59 304.1 347.4)" fill="#f06828" opacity="0.54"/><ellipse cx="190.0" cy="176.0" rx="14.4" ry="3.7" transform="rotate(61 190.0 176.0)" fill="#f07030" opacity="0.43"/><ellipse cx="245.3" cy="270.7" rx="13.5" ry="3.1" transform="rotate(66 245.3 270.7)" fill="#e85a20" opacity="0.63"/><ellipse cx="106.7" cy="85.2" rx="9.2" ry="2.5" transform="rotate(59 106.7 85.2)" fill="#ffa020" opacity="0.69"/><ellipse cx="173.8" cy="370.0" rx="13.2" ry="3.3" transform="rotate(63 173.8 370.0)" fill="#c85a20" opacity="0.30"/><ellipse cx="304.9" cy="422.2" rx="16.7" ry="4.6" transform="rotate(60 304.9 422.2)" fill="#5c5468" opacity="0.45"/><ellipse cx="148.9" cy="184.9" rx="15.4" ry="4.2" transform="rotate(66 148.9 184.9)" fill="#ff7a30" opacity="0.61"/><ellipse cx="178.8" cy="366.4" rx="10.9" ry="2.9" transform="rotate(67 178.8 366.4)" fill="#c85a20" opacity="0.42"/><ellipse cx="272.1" cy="430.9" rx="11.5" ry="2.3" transform="rotate(59 272.1 430.9)" fill="#6a6078" opacity="0.36"/><ellipse cx="189.4" cy="264.8" rx="12.3" ry="2.9" transform="rotate(62 189.4 264.8)" fill="#c84a18" opacity="0.66"/><ellipse cx="142.8" cy="206.8" rx="16.0" ry="5.0" transform="rotate(63 142.8 206.8)" fill="#f06828" opacity="0.49"/><ellipse cx="154.9" cy="64.6" rx="17.7" ry="3.6" transform="rotate(66 154.9 64.6)" fill="#f07030" opacity="0.39"/><ellipse cx="327.3" cy="406.2" rx="11.1" ry="3.1" transform="rotate(59 327.3 406.2)" fill="#e85a20" opacity="0.66"/><ellipse cx="202.3" cy="228.6" rx="9.6" ry="2.7" transform="rotate(67 202.3 228.6)" fill="#d85420" opacity="0.58"/><ellipse cx="248.5" cy="326.8" rx="16.8" ry="3.4" transform="rotate(57 248.5 326.8)" fill="#d85420" opacity="0.42"/><ellipse cx="237.9" cy="160.8" rx="17.6" ry="4.9" transform="rotate(60 237.9 160.8)" fill="#4a4458" opacity="0.47"/><ellipse cx="135.7" cy="105.9" rx="17.9" ry="3.9" transform="rotate(57 135.7 105.9)" fill="#ffb020" opacity="0.49"/><ellipse cx="300.4" cy="344.8" rx="11.0" ry="3.5" transform="rotate(62 300.4 344.8)" fill="#f06828" opacity="0.53"/><ellipse cx="243.0" cy="333.4" rx="12.3" ry="3.7" transform="rotate(63 243.0 333.4)" fill="#f06828" opacity="0.64"/><ellipse cx="285.9" cy="301.3" rx="13.5" ry="3.9" transform="rotate(66 285.9 301.3)" fill="#f06828" opacity="0.41"/><ellipse cx="107.8" cy="131.5" rx="15.7" ry="4.7" transform="rotate(58 107.8 131.5)" fill="#e87818" opacity="0.81"/><ellipse cx="189.7" cy="403.3" rx="9.3" ry="2.0" transform="rotate(60 189.7 403.3)" fill="#3e3a4c" opacity="0.44"/><ellipse cx="329.8" cy="332.4" rx="12.6" ry="3.7" transform="rotate(60 329.8 332.4)" fill="#080404" opacity="0.74"/><ellipse cx="116.6" cy="165.3" rx="13.2" ry="3.2" transform="rotate(63 116.6 165.3)" fill="#f07030" opacity="0.58"/><ellipse cx="321.9" cy="404.1" rx="11.2" ry="2.6" transform="rotate(58 321.9 404.1)" fill="#c84a18" opacity="0.65"/><ellipse cx="185.8" cy="92.1" rx="8.8" ry="4.0" transform="rotate(63 185.8 92.1)" fill="#080404" opacity="0.64"/><ellipse cx="88.8" cy="106.2" rx="11.0" ry="2.8" transform="rotate(63 88.8 106.2)" fill="#ffb020" opacity="0.61"/><ellipse cx="203.3" cy="213.0" rx="13.0" ry="4.0" transform="rotate(57 203.3 213.0)" fill="#5c5468" opacity="0.44"/><ellipse cx="295.7" cy="339.9" rx="17.5" ry="4.5" transform="rotate(64 295.7 339.9)" fill="#6a5a70" opacity="0.40"/><ellipse cx="151.2" cy="280.6" rx="13.2" ry="3.2" transform="rotate(60 151.2 280.6)" fill="#c85a20" opacity="0.45"/><ellipse cx="209.9" cy="229.2" rx="13.0" ry="3.8" transform="rotate(65 209.9 229.2)" fill="#f06828" opacity="0.45"/><ellipse cx="324.4" cy="318.0" rx="11.9" ry="3.1" transform="rotate(64 324.4 318.0)" fill="#f06828" opacity="0.40"/><ellipse cx="283.3" cy="358.0" rx="12.3" ry="3.8" transform="rotate(59 283.3 358.0)" fill="#080404" opacity="0.66"/><ellipse cx="239.7" cy="393.9" rx="11.1" ry="4.1" transform="rotate(65 239.7 393.9)" fill="#080404" opacity="0.70"/><ellipse cx="111.3" cy="73.9" rx="10.1" ry="3.2" transform="rotate(62 111.3 73.9)" fill="#ffc030" opacity="0.80"/><ellipse cx="321.0" cy="417.4" rx="17.7" ry="4.7" transform="rotate(60 321.0 417.4)" fill="#f06828" opacity="0.71"/><ellipse cx="228.1" cy="253.4" rx="16.2" ry="3.3" transform="rotate(59 228.1 253.4)" fill="#ff7a30" opacity="0.55"/><ellipse cx="123.2" cy="117.3" rx="13.1" ry="2.7" transform="rotate(59 123.2 117.3)" fill="#f08020" opacity="0.73"/><ellipse cx="336.4" cy="426.5" rx="15.9" ry="4.8" transform="rotate(59 336.4 426.5)" fill="#544a60" opacity="0.32"/><ellipse cx="170.1" cy="102.2" rx="16.0" ry="4.8" transform="rotate(58 170.1 102.2)" fill="#6a5a70" opacity="0.47"/><ellipse cx="217.4" cy="263.4" rx="10.3" ry="3.2" transform="rotate(61 217.4 263.4)" fill="#f06828" opacity="0.46"/><ellipse cx="151.7" cy="110.9" rx="9.4" ry="2.3" transform="rotate(64 151.7 110.9)" fill="#ffa020" opacity="0.82"/><ellipse cx="345.9" cy="395.3" rx="15.6" ry="4.4" transform="rotate(66 345.9 395.3)" fill="#d85420" opacity="0.43"/><ellipse cx="138.3" cy="94.6" rx="10.3" ry="2.2" transform="rotate(64 138.3 94.6)" fill="#ff9a18" opacity="0.66"/><ellipse cx="88.4" cy="93.9" rx="14.1" ry="3.7" transform="rotate(61 88.4 93.9)" fill="#ffc030" opacity="0.46"/><ellipse cx="110.5" cy="113.5" rx="13.8" ry="3.3" transform="rotate(63 110.5 113.5)" fill="#ffa020" opacity="0.45"/><ellipse cx="262.3" cy="393.8" rx="15.8" ry="3.9" transform="rotate(65 262.3 393.8)" fill="#c84a18" opacity="0.67"/><ellipse cx="244.7" cy="322.1" rx="16.0" ry="4.5" transform="rotate(65 244.7 322.1)" fill="#d85420" opacity="0.53"/><ellipse cx="170.1" cy="173.1" rx="13.6" ry="3.3" transform="rotate(58 170.1 173.1)" fill="#6a5a70" opacity="0.31"/><ellipse cx="130.5" cy="66.8" rx="9.6" ry="2.7" transform="rotate(63 130.5 66.8)" fill="#c84a18" opacity="0.43"/><ellipse cx="239.5" cy="250.4" rx="15.3" ry="3.1" transform="rotate(57 239.5 250.4)" fill="#6a5a70" opacity="0.40"/><ellipse cx="178.9" cy="125.9" rx="15.6" ry="4.4" transform="rotate(66 178.9 125.9)" fill="#d85420" opacity="0.53"/><ellipse cx="192.2" cy="127.6" rx="11.1" ry="2.3" transform="rotate(66 192.2 127.6)" fill="#c84a18" opacity="0.59"/><ellipse cx="198.9" cy="182.7" rx="15.6" ry="3.9" transform="rotate(63 198.9 182.7)" fill="#f06828" opacity="0.66"/><ellipse cx="144.0" cy="209.8" rx="17.8" ry="3.9" transform="rotate(64 144.0 209.8)" fill="#3e3a4c" opacity="0.44"/><ellipse cx="136.5" cy="153.9" rx="10.5" ry="2.4" transform="rotate(64 136.5 153.9)" fill="#c84a18" opacity="0.69"/><ellipse cx="140.2" cy="102.8" rx="13.2" ry="3.8" transform="rotate(65 140.2 102.8)" fill="#ff9a18" opacity="0.48"/><ellipse cx="146.4" cy="276.2" rx="14.3" ry="4.6" transform="rotate(66 146.4 276.2)" fill="#544c62" opacity="0.32"/><ellipse cx="173.6" cy="82.4" rx="12.9" ry="3.4" transform="rotate(62 173.6 82.4)" fill="#d85420" opacity="0.63"/><ellipse cx="242.1" cy="254.2" rx="12.5" ry="5.0" transform="rotate(59 242.1 254.2)" fill="#080404" opacity="0.79"/><ellipse cx="147.5" cy="250.5" rx="14.7" ry="3.4" transform="rotate(67 147.5 250.5)" fill="#a84818" opacity="0.28"/><ellipse cx="302.3" cy="351.1" rx="16.8" ry="4.5" transform="rotate(62 302.3 351.1)" fill="#f07030" opacity="0.46"/><ellipse cx="138.5" cy="151.2" rx="14.3" ry="4.0" transform="rotate(61 138.5 151.2)" fill="#e85a20" opacity="0.61"/><ellipse cx="102.1" cy="57.1" rx="15.4" ry="3.5" transform="rotate(58 102.1 57.1)" fill="#ff9a18" opacity="0.78"/><ellipse cx="197.3" cy="181.4" rx="11.0" ry="3.3" transform="rotate(64 197.3 181.4)" fill="#ff7a30" opacity="0.39"/><ellipse cx="91.7" cy="53.6" rx="10.1" ry="2.6" transform="rotate(65 91.7 53.6)" fill="#ffb020" opacity="0.55"/><ellipse cx="109.2" cy="55.6" rx="14.3" ry="3.2" transform="rotate(67 109.2 55.6)" fill="#ff7a30" opacity="0.62"/><ellipse cx="222.3" cy="373.9" rx="11.1" ry="5.1" transform="rotate(62 222.3 373.9)" fill="#080404" opacity="0.59"/><ellipse cx="227.6" cy="431.9" rx="12.3" ry="3.8" transform="rotate(64 227.6 431.9)" fill="#d85420" opacity="0.54"/><ellipse cx="275.7" cy="185.6" rx="12.7" ry="3.5" transform="rotate(63 275.7 185.6)" fill="#544c62" opacity="0.52"/><ellipse cx="217.2" cy="367.0" rx="12.1" ry="3.0" transform="rotate(64 217.2 367.0)" fill="#ff7a30" opacity="0.50"/><ellipse cx="212.9" cy="103.7" rx="14.3" ry="4.1" transform="rotate(60 212.9 103.7)" fill="#f06828" opacity="0.36"/><ellipse cx="157.9" cy="66.3" rx="12.7" ry="3.1" transform="rotate(61 157.9 66.3)" fill="#f06828" opacity="0.43"/><ellipse cx="183.1" cy="223.9" rx="13.8" ry="4.0" transform="rotate(62 183.1 223.9)" fill="#f06828" opacity="0.55"/><ellipse cx="168.3" cy="224.9" rx="11.0" ry="3.3" transform="rotate(58 168.3 224.9)" fill="#5c5468" opacity="0.44"/><ellipse cx="119.8" cy="121.2" rx="15.3" ry="3.4" transform="rotate(58 119.8 121.2)" fill="#ffc030" opacity="0.81"/><ellipse cx="132.2" cy="126.9" rx="17.0" ry="4.0" transform="rotate(59 132.2 126.9)" fill="#ffa020" opacity="0.56"/><ellipse cx="257.0" cy="269.5" rx="12.8" ry="3.3" transform="rotate(62 257.0 269.5)" fill="#ff7a30" opacity="0.39"/><ellipse cx="308.1" cy="434.1" rx="11.4" ry="4.9" transform="rotate(60 308.1 434.1)" fill="#080404" opacity="0.50"/><ellipse cx="236.6" cy="304.6" rx="16.7" ry="3.9" transform="rotate(62 236.6 304.6)" fill="#f07030" opacity="0.61"/><ellipse cx="223.4" cy="386.5" rx="14.3" ry="3.9" transform="rotate(65 223.4 386.5)" fill="#d85420" opacity="0.39"/><ellipse cx="107.9" cy="80.6" rx="16.8" ry="4.4" transform="rotate(62 107.9 80.6)" fill="#ffc030" opacity="0.76"/><ellipse cx="189.1" cy="175.9" rx="10.9" ry="2.4" transform="rotate(65 189.1 175.9)" fill="#d85420" opacity="0.36"/><ellipse cx="106.4" cy="116.0" rx="9.3" ry="2.7" transform="rotate(61 106.4 116.0)" fill="#f08020" opacity="0.70"/><ellipse cx="146.8" cy="93.6" rx="11.6" ry="3.3" transform="rotate(59 146.8 93.6)" fill="#d85420" opacity="0.47"/><ellipse cx="251.3" cy="261.7" rx="13.8" ry="3.8" transform="rotate(61 251.3 261.7)" fill="#c84a18" opacity="0.59"/><ellipse cx="239.1" cy="359.3" rx="7.1" ry="2.9" transform="rotate(59 239.1 359.3)" fill="#080404" opacity="0.85"/><ellipse cx="270.5" cy="410.8" rx="12.2" ry="3.7" transform="rotate(63 270.5 410.8)" fill="#f07030" opacity="0.43"/><ellipse cx="74.9" cy="59.8" rx="9.7" ry="2.0" transform="rotate(65 74.9 59.8)" fill="#ffc030" opacity="0.63"/><ellipse cx="76.9" cy="57.0" rx="17.0" ry="3.5" transform="rotate(65 76.9 57.0)" fill="#ffb020" opacity="0.46"/><ellipse cx="171.1" cy="132.4" rx="13.4" ry="3.1" transform="rotate(57 171.1 132.4)" fill="#ff9a18" opacity="0.72"/><ellipse cx="236.0" cy="248.2" rx="11.3" ry="3.3" transform="rotate(62 236.0 248.2)" fill="#080404" opacity="0.70"/><ellipse cx="249.0" cy="315.0" rx="12.4" ry="4.0" transform="rotate(62 249.0 315.0)" fill="#5c5468" opacity="0.45"/><ellipse cx="110.8" cy="85.3" rx="14.3" ry="3.7" transform="rotate(58 110.8 85.3)" fill="#f08020" opacity="0.58"/><ellipse cx="199.2" cy="95.8" rx="17.1" ry="5.4" transform="rotate(60 199.2 95.8)" fill="#f06828" opacity="0.66"/><ellipse cx="295.2" cy="351.8" rx="9.9" ry="3.0" transform="rotate(62 295.2 351.8)" fill="#c84a18" opacity="0.49"/><ellipse cx="195.3" cy="187.3" rx="15.5" ry="4.9" transform="rotate(65 195.3 187.3)" fill="#f07030" opacity="0.45"/><ellipse cx="121.3" cy="137.5" rx="10.9" ry="3.4" transform="rotate(57 121.3 137.5)" fill="#ffa020" opacity="0.70"/><ellipse cx="235.3" cy="144.2" rx="14.8" ry="4.3" transform="rotate(65 235.3 144.2)" fill="#a84818" opacity="0.42"/><ellipse cx="221.0" cy="336.6" rx="9.0" ry="4.1" transform="rotate(65 221.0 336.6)" fill="#080404" opacity="0.74"/><ellipse cx="216.5" cy="390.3" rx="14.3" ry="3.2" transform="rotate(57 216.5 390.3)" fill="#6a5a70" opacity="0.34"/><ellipse cx="178.5" cy="349.1" rx="17.0" ry="4.2" transform="rotate(65 178.5 349.1)" fill="#3e3a4c" opacity="0.51"/><ellipse cx="222.0" cy="131.9" rx="10.2" ry="2.6" transform="rotate(59 222.0 131.9)" fill="#ff7a30" opacity="0.44"/><ellipse cx="148.0" cy="223.2" rx="14.8" ry="3.5" transform="rotate(67 148.0 223.2)" fill="#a84818" opacity="0.31"/><ellipse cx="324.1" cy="396.9" rx="16.2" ry="5.0" transform="rotate(66 324.1 396.9)" fill="#ff7a30" opacity="0.43"/><ellipse cx="253.4" cy="272.8" rx="16.8" ry="4.3" transform="rotate(60 253.4 272.8)" fill="#e85a20" opacity="0.44"/><ellipse cx="294.7" cy="359.6" rx="13.5" ry="3.0" transform="rotate(65 294.7 359.6)" fill="#f06828" opacity="0.64"/><ellipse cx="279.5" cy="355.0" rx="11.0" ry="2.5" transform="rotate(66 279.5 355.0)" fill="#c84a18" opacity="0.37"/><ellipse cx="135.7" cy="76.2" rx="17.8" ry="4.9" transform="rotate(66 135.7 76.2)" fill="#f06828" opacity="0.37"/><ellipse cx="315.7" cy="410.9" rx="16.7" ry="4.7" transform="rotate(62 315.7 410.9)" fill="#ff7a30" opacity="0.37"/><ellipse cx="155.7" cy="221.8" rx="12.0" ry="2.9" transform="rotate(58 155.7 221.8)" fill="#544c62" opacity="0.34"/><ellipse cx="205.0" cy="89.9" rx="12.5" ry="3.3" transform="rotate(66 205.0 89.9)" fill="#544a60" opacity="0.40"/><ellipse cx="163.6" cy="96.0" rx="9.4" ry="3.1" transform="rotate(64 163.6 96.0)" fill="#080404" opacity="0.64"/><ellipse cx="142.0" cy="201.2" rx="14.8" ry="3.8" transform="rotate(57 142.0 201.2)" fill="#f06828" opacity="0.62"/><ellipse cx="155.3" cy="274.8" rx="12.0" ry="2.6" transform="rotate(58 155.3 274.8)" fill="#3e3a4c" opacity="0.38"/><ellipse cx="98.2" cy="136.5" rx="11.6" ry="2.9" transform="rotate(63 98.2 136.5)" fill="#ffb020" opacity="0.82"/><ellipse cx="217.0" cy="143.0" rx="10.5" ry="4.0" transform="rotate(58 217.0 143.0)" fill="#080404" opacity="0.57"/><ellipse cx="244.2" cy="175.9" rx="10.1" ry="3.1" transform="rotate(63 244.2 175.9)" fill="#a84818" opacity="0.27"/><ellipse cx="188.2" cy="397.6" rx="16.4" ry="4.0" transform="rotate(59 188.2 397.6)" fill="#3e3a4c" opacity="0.40"/><ellipse cx="148.7" cy="256.1" rx="13.0" ry="3.4" transform="rotate(57 148.7 256.1)" fill="#544c62" opacity="0.46"/><ellipse cx="219.6" cy="382.0" rx="13.1" ry="3.9" transform="rotate(60 219.6 382.0)" fill="#544a60" opacity="0.39"/><ellipse cx="317.4" cy="312.2" rx="11.6" ry="5.1" transform="rotate(60 317.4 312.2)" fill="#080404" opacity="0.53"/><ellipse cx="208.6" cy="122.8" rx="13.7" ry="3.9" transform="rotate(58 208.6 122.8)" fill="#f06828" opacity="0.50"/><ellipse cx="181.2" cy="360.8" rx="17.2" ry="3.5" transform="rotate(61 181.2 360.8)" fill="#3e3a4c" opacity="0.33"/><ellipse cx="241.5" cy="252.9" rx="9.1" ry="2.6" transform="rotate(65 241.5 252.9)" fill="#e85a20" opacity="0.63"/><ellipse cx="230.0" cy="385.4" rx="17.7" ry="5.5" transform="rotate(62 230.0 385.4)" fill="#544a60" opacity="0.31"/><ellipse cx="88.9" cy="63.8" rx="16.7" ry="5.3" transform="rotate(60 88.9 63.8)" fill="#e87818" opacity="0.48"/><ellipse cx="187.1" cy="361.4" rx="15.3" ry="3.9" transform="rotate(59 187.1 361.4)" fill="#4a4458" opacity="0.50"/><ellipse cx="232.1" cy="309.1" rx="14.2" ry="4.5" transform="rotate(66 232.1 309.1)" fill="#6a5a70" opacity="0.32"/><ellipse cx="282.4" cy="404.8" rx="10.8" ry="3.0" transform="rotate(66 282.4 404.8)" fill="#e85a20" opacity="0.67"/><ellipse cx="120.6" cy="85.6" rx="9.6" ry="2.6" transform="rotate(66 120.6 85.6)" fill="#f08020" opacity="0.83"/><ellipse cx="163.6" cy="267.9" rx="11.0" ry="2.3" transform="rotate(67 163.6 267.9)" fill="#3e3a4c" opacity="0.38"/><ellipse cx="264.4" cy="328.9" rx="16.1" ry="4.4" transform="rotate(60 264.4 328.9)" fill="#6a6078" opacity="0.38"/><ellipse cx="151.5" cy="163.5" rx="11.7" ry="3.4" transform="rotate(61 151.5 163.5)" fill="#ff7a30" opacity="0.61"/><ellipse cx="139.3" cy="64.4" rx="11.6" ry="3.6" transform="rotate(61 139.3 64.4)" fill="#f06828" opacity="0.67"/><ellipse cx="261.2" cy="172.1" rx="17.1" ry="4.9" transform="rotate(60 261.2 172.1)" fill="#c85a20" opacity="0.33"/><ellipse cx="129.6" cy="98.2" rx="13.2" ry="3.6" transform="rotate(65 129.6 98.2)" fill="#e87818" opacity="0.85"/><ellipse cx="235.9" cy="391.9" rx="13.3" ry="2.7" transform="rotate(59 235.9 391.9)" fill="#5c5468" opacity="0.36"/><ellipse cx="286.6" cy="262.3" rx="10.4" ry="2.6" transform="rotate(61 286.6 262.3)" fill="#f06828" opacity="0.59"/><ellipse cx="172.4" cy="160.1" rx="13.6" ry="3.8" transform="rotate(65 172.4 160.1)" fill="#f06828" opacity="0.45"/><ellipse cx="216.8" cy="155.3" rx="15.4" ry="4.0" transform="rotate(65 216.8 155.3)" fill="#ff7a30" opacity="0.44"/><ellipse cx="245.8" cy="182.3" rx="10.9" ry="2.5" transform="rotate(61 245.8 182.3)" fill="#4a4458" opacity="0.49"/><ellipse cx="121.7" cy="127.5" rx="11.6" ry="2.5" transform="rotate(65 121.7 127.5)" fill="#ffa020" opacity="0.74"/><ellipse cx="113.6" cy="127.7" rx="14.4" ry="4.1" transform="rotate(62 113.6 127.7)" fill="#ffb020" opacity="0.78"/><ellipse cx="272.8" cy="219.7" rx="10.2" ry="3.2" transform="rotate(63 272.8 219.7)" fill="#4a4458" opacity="0.38"/><ellipse cx="219.8" cy="323.8" rx="10.0" ry="3.9" transform="rotate(58 219.8 323.8)" fill="#080404" opacity="0.52"/><ellipse cx="289.9" cy="420.2" rx="9.8" ry="2.1" transform="rotate(60 289.9 420.2)" fill="#5c5468" opacity="0.31"/><ellipse cx="162.1" cy="235.2" rx="10.0" ry="3.1" transform="rotate(58 162.1 235.2)" fill="#544c62" opacity="0.45"/><ellipse cx="135.5" cy="103.1" rx="11.2" ry="3.5" transform="rotate(61 135.5 103.1)" fill="#f08020" opacity="0.72"/><ellipse cx="269.1" cy="212.1" rx="10.2" ry="3.2" transform="rotate(58 269.1 212.1)" fill="#a84818" opacity="0.36"/><ellipse cx="165.7" cy="139.4" rx="9.2" ry="2.3" transform="rotate(61 165.7 139.4)" fill="#e87818" opacity="0.51"/><ellipse cx="307.4" cy="323.2" rx="16.6" ry="4.8" transform="rotate(62 307.4 323.2)" fill="#f07030" opacity="0.54"/><ellipse cx="140.9" cy="263.1" rx="9.8" ry="3.0" transform="rotate(66 140.9 263.1)" fill="#3e3a4c" opacity="0.42"/><ellipse cx="97.0" cy="96.7" rx="11.7" ry="3.0" transform="rotate(62 97.0 96.7)" fill="#ffa020" opacity="0.49"/><ellipse cx="161.7" cy="300.1" rx="15.9" ry="3.8" transform="rotate(63 161.7 300.1)" fill="#4a4458" opacity="0.52"/><ellipse cx="249.5" cy="185.9" rx="18.0" ry="4.7" transform="rotate(62 249.5 185.9)" fill="#544c62" opacity="0.41"/><ellipse cx="150.6" cy="67.1" rx="15.3" ry="3.1" transform="rotate(62 150.6 67.1)" fill="#e85a20" opacity="0.62"/><ellipse cx="209.9" cy="268.3" rx="9.1" ry="2.9" transform="rotate(58 209.9 268.3)" fill="#ff7a30" opacity="0.35"/><ellipse cx="153.2" cy="251.0" rx="13.1" ry="3.7" transform="rotate(58 153.2 251.0)" fill="#a84818" opacity="0.33"/><ellipse cx="144.9" cy="279.7" rx="15.8" ry="4.9" transform="rotate(64 144.9 279.7)" fill="#4a4458" opacity="0.39"/><ellipse cx="254.5" cy="336.8" rx="11.5" ry="2.7" transform="rotate(58 254.5 336.8)" fill="#6a5a70" opacity="0.48"/><ellipse cx="276.4" cy="350.3" rx="12.2" ry="2.5" transform="rotate(58 276.4 350.3)" fill="#c84a18" opacity="0.43"/><ellipse cx="145.2" cy="281.1" rx="12.3" ry="2.8" transform="rotate(64 145.2 281.1)" fill="#4a4458" opacity="0.33"/><ellipse cx="208.6" cy="227.8" rx="12.4" ry="4.9" transform="rotate(58 208.6 227.8)" fill="#080404" opacity="0.67"/><ellipse cx="168.0" cy="231.8" rx="9.4" ry="2.7" transform="rotate(62 168.0 231.8)" fill="#ff7a30" opacity="0.40"/><ellipse cx="205.7" cy="378.2" rx="11.7" ry="2.4" transform="rotate(64 205.7 378.2)" fill="#544a60" opacity="0.49"/><ellipse cx="143.3" cy="284.0" rx="11.9" ry="2.5" transform="rotate(65 143.3 284.0)" fill="#a84818" opacity="0.26"/><ellipse cx="114.3" cy="94.4" rx="13.3" ry="3.1" transform="rotate(66 114.3 94.4)" fill="#f08020" opacity="0.70"/><ellipse cx="197.4" cy="113.5" rx="12.0" ry="3.0" transform="rotate(61 197.4 113.5)" fill="#d85420" opacity="0.67"/><ellipse cx="108.7" cy="69.6" rx="10.0" ry="2.3" transform="rotate(62 108.7 69.6)" fill="#f08020" opacity="0.46"/><ellipse cx="157.3" cy="99.7" rx="10.5" ry="2.5" transform="rotate(62 157.3 99.7)" fill="#f07030" opacity="0.51"/><ellipse cx="170.6" cy="167.4" rx="15.3" ry="3.8" transform="rotate(65 170.6 167.4)" fill="#d85420" opacity="0.60"/><ellipse cx="342.5" cy="415.4" rx="14.4" ry="4.1" transform="rotate(58 342.5 415.4)" fill="#544a60" opacity="0.35"/><ellipse cx="274.8" cy="267.6" rx="9.5" ry="2.9" transform="rotate(62 274.8 267.6)" fill="#c84a18" opacity="0.68"/><ellipse cx="245.9" cy="397.6" rx="8.6" ry="3.0" transform="rotate(58 245.9 397.6)" fill="#080404" opacity="0.78"/><ellipse cx="250.0" cy="367.7" rx="15.2" ry="3.4" transform="rotate(61 250.0 367.7)" fill="#ff7a30" opacity="0.42"/><ellipse cx="226.2" cy="108.3" rx="7.2" ry="2.2" transform="rotate(65 226.2 108.3)" fill="#080404" opacity="0.70"/><ellipse cx="159.0" cy="75.4" rx="11.8" ry="4.7" transform="rotate(66 159.0 75.4)" fill="#080404" opacity="0.50"/><ellipse cx="273.9" cy="418.8" rx="15.7" ry="3.1" transform="rotate(61 273.9 418.8)" fill="#f06828" opacity="0.64"/><ellipse cx="237.2" cy="307.2" rx="9.2" ry="2.1" transform="rotate(63 237.2 307.2)" fill="#544a60" opacity="0.44"/><ellipse cx="266.2" cy="180.0" rx="9.8" ry="2.7" transform="rotate(63 266.2 180.0)" fill="#544c62" opacity="0.48"/><ellipse cx="258.8" cy="325.1" rx="10.2" ry="3.4" transform="rotate(61 258.8 325.1)" fill="#080404" opacity="0.59"/><ellipse cx="263.9" cy="253.0" rx="14.7" ry="4.0" transform="rotate(64 263.9 253.0)" fill="#c84a18" opacity="0.37"/><ellipse cx="238.8" cy="269.7" rx="16.4" ry="4.1" transform="rotate(61 238.8 269.7)" fill="#f06828" opacity="0.59"/><ellipse cx="118.1" cy="105.2" rx="11.1" ry="2.8" transform="rotate(61 118.1 105.2)" fill="#e87818" opacity="0.61"/><ellipse cx="219.8" cy="142.5" rx="11.8" ry="3.7" transform="rotate(64 219.8 142.5)" fill="#544c62" opacity="0.40"/><ellipse cx="293.9" cy="243.0" rx="13.2" ry="3.7" transform="rotate(65 293.9 243.0)" fill="#ff7a30" opacity="0.39"/><ellipse cx="291.1" cy="385.9" rx="11.2" ry="3.0" transform="rotate(65 291.1 385.9)" fill="#f07030" opacity="0.55"/><ellipse cx="164.4" cy="80.0" rx="9.9" ry="2.6" transform="rotate(60 164.4 80.0)" fill="#c84a18" opacity="0.59"/><ellipse cx="224.8" cy="210.5" rx="9.3" ry="2.8" transform="rotate(65 224.8 210.5)" fill="#6a6078" opacity="0.45"/><ellipse cx="143.7" cy="172.2" rx="17.7" ry="5.5" transform="rotate(58 143.7 172.2)" fill="#d85420" opacity="0.51"/><ellipse cx="268.2" cy="415.1" rx="14.7" ry="4.2" transform="rotate(65 268.2 415.1)" fill="#f07030" opacity="0.44"/><ellipse cx="285.8" cy="367.6" rx="9.7" ry="2.8" transform="rotate(61 285.8 367.6)" fill="#ff7a30" opacity="0.43"/><ellipse cx="151.3" cy="94.3" rx="10.3" ry="3.3" transform="rotate(61 151.3 94.3)" fill="#f07030" opacity="0.66"/><ellipse cx="235.2" cy="155.3" rx="15.7" ry="3.6" transform="rotate(61 235.2 155.3)" fill="#c85a20" opacity="0.24"/><ellipse cx="327.2" cy="394.8" rx="17.8" ry="3.7" transform="rotate(64 327.2 394.8)" fill="#ff7a30" opacity="0.64"/><ellipse cx="232.9" cy="421.8" rx="8.4" ry="3.6" transform="rotate(62 232.9 421.8)" fill="#080404" opacity="0.80"/><ellipse cx="248.9" cy="260.5" rx="15.7" ry="4.9" transform="rotate(61 248.9 260.5)" fill="#ff7a30" opacity="0.48"/><ellipse cx="325.2" cy="312.3" rx="17.0" ry="5.2" transform="rotate(57 325.2 312.3)" fill="#f06828" opacity="0.44"/><ellipse cx="167.9" cy="383.5" rx="16.0" ry="4.2" transform="rotate(67 167.9 383.5)" fill="#a84818" opacity="0.35"/><ellipse cx="153.2" cy="141.6" rx="15.6" ry="3.6" transform="rotate(60 153.2 141.6)" fill="#ff9a18" opacity="0.73"/><ellipse cx="123.7" cy="200.5" rx="9.4" ry="2.3" transform="rotate(57 123.7 200.5)" fill="#d85420" opacity="0.41"/><ellipse cx="131.0" cy="142.8" rx="15.4" ry="3.3" transform="rotate(62 131.0 142.8)" fill="#f07030" opacity="0.42"/><ellipse cx="316.8" cy="386.8" rx="7.0" ry="3.0" transform="rotate(60 316.8 386.8)" fill="#080404" opacity="0.65"/><ellipse cx="196.2" cy="376.5" rx="9.6" ry="2.2" transform="rotate(59 196.2 376.5)" fill="#4a4458" opacity="0.30"/><ellipse cx="161.6" cy="119.9" rx="14.0" ry="4.1" transform="rotate(63 161.6 119.9)" fill="#ff9a18" opacity="0.76"/><ellipse cx="251.9" cy="398.7" rx="11.5" ry="3.9" transform="rotate(57 251.9 398.7)" fill="#080404" opacity="0.55"/><ellipse cx="187.7" cy="270.7" rx="13.7" ry="4.1" transform="rotate(59 187.7 270.7)" fill="#d85420" opacity="0.39"/><ellipse cx="300.8" cy="313.8" rx="17.7" ry="3.9" transform="rotate(62 300.8 313.8)" fill="#ff7a30" opacity="0.50"/><ellipse cx="82.8" cy="84.7" rx="12.7" ry="2.6" transform="rotate(58 82.8 84.7)" fill="#ffb020" opacity="0.49"/><ellipse cx="215.8" cy="286.4" rx="9.3" ry="1.9" transform="rotate(66 215.8 286.4)" fill="#e85a20" opacity="0.40"/><ellipse cx="108.7" cy="84.9" rx="14.5" ry="4.3" transform="rotate(65 108.7 84.9)" fill="#f08020" opacity="0.84"/><ellipse cx="197.5" cy="366.9" rx="16.4" ry="3.9" transform="rotate(65 197.5 366.9)" fill="#a84818" opacity="0.28"/><ellipse cx="200.2" cy="311.7" rx="16.1" ry="3.9" transform="rotate(63 200.2 311.7)" fill="#ff7a30" opacity="0.35"/><ellipse cx="172.8" cy="326.1" rx="17.8" ry="5.5" transform="rotate(57 172.8 326.1)" fill="#a84818" opacity="0.30"/><ellipse cx="179.6" cy="160.0" rx="11.2" ry="2.5" transform="rotate(64 179.6 160.0)" fill="#f06828" opacity="0.43"/><ellipse cx="161.3" cy="224.6" rx="18.0" ry="3.8" transform="rotate(64 161.3 224.6)" fill="#a84818" opacity="0.29"/><ellipse cx="294.9" cy="340.9" rx="8.8" ry="3.5" transform="rotate(63 294.9 340.9)" fill="#080404" opacity="0.74"/><ellipse cx="143.0" cy="73.2" rx="14.2" ry="3.5" transform="rotate(66 143.0 73.2)" fill="#f07030" opacity="0.59"/><ellipse cx="201.9" cy="219.8" rx="15.7" ry="3.9" transform="rotate(63 201.9 219.8)" fill="#6a6078" opacity="0.36"/><ellipse cx="254.7" cy="314.9" rx="17.3" ry="3.9" transform="rotate(63 254.7 314.9)" fill="#f07030" opacity="0.61"/><ellipse cx="142.3" cy="134.7" rx="9.8" ry="2.2" transform="rotate(61 142.3 134.7)" fill="#ffc030" opacity="0.81"/><ellipse cx="83.6" cy="62.1" rx="11.7" ry="2.5" transform="rotate(62 83.6 62.1)" fill="#ffc030" opacity="0.67"/><ellipse cx="265.5" cy="204.9" rx="11.4" ry="3.0" transform="rotate(65 265.5 204.9)" fill="#4a4458" opacity="0.32"/><ellipse cx="225.2" cy="143.0" rx="14.2" ry="3.1" transform="rotate(61 225.2 143.0)" fill="#a84818" opacity="0.37"/><ellipse cx="230.8" cy="125.7" rx="9.7" ry="2.3" transform="rotate(65 230.8 125.7)" fill="#f07030" opacity="0.58"/><ellipse cx="299.5" cy="415.1" rx="13.0" ry="2.8" transform="rotate(65 299.5 415.1)" fill="#f07030" opacity="0.69"/><ellipse cx="134.4" cy="62.2" rx="12.0" ry="2.6" transform="rotate(61 134.4 62.2)" fill="#f07030" opacity="0.62"/><ellipse cx="264.9" cy="275.7" rx="17.3" ry="4.7" transform="rotate(65 264.9 275.7)" fill="#f07030" opacity="0.69"/><ellipse cx="173.4" cy="208.1" rx="17.9" ry="5.3" transform="rotate(62 173.4 208.1)" fill="#6a6078" opacity="0.48"/><ellipse cx="86.4" cy="51.5" rx="15.4" ry="4.7" transform="rotate(64 86.4 51.5)" fill="#ffc030" opacity="0.47"/><ellipse cx="243.3" cy="261.3" rx="16.3" ry="4.0" transform="rotate(61 243.3 261.3)" fill="#ff7a30" opacity="0.69"/><ellipse cx="221.9" cy="135.5" rx="11.9" ry="2.5" transform="rotate(62 221.9 135.5)" fill="#d85420" opacity="0.67"/><ellipse cx="306.0" cy="311.5" rx="13.7" ry="4.0" transform="rotate(67 306.0 311.5)" fill="#c84a18" opacity="0.72"/><ellipse cx="204.3" cy="244.2" rx="10.8" ry="3.3" transform="rotate(59 204.3 244.2)" fill="#5c5468" opacity="0.49"/><ellipse cx="194.8" cy="224.5" rx="15.5" ry="3.3" transform="rotate(61 194.8 224.5)" fill="#5c5468" opacity="0.46"/><ellipse cx="191.0" cy="86.7" rx="14.5" ry="4.6" transform="rotate(66 191.0 86.7)" fill="#544a60" opacity="0.40"/><ellipse cx="306.8" cy="331.5" rx="12.4" ry="2.6" transform="rotate(65 306.8 331.5)" fill="#ff7a30" opacity="0.67"/><ellipse cx="194.8" cy="188.9" rx="17.6" ry="4.2" transform="rotate(62 194.8 188.9)" fill="#ff7a30" opacity="0.71"/><ellipse cx="79.5" cy="62.5" rx="16.7" ry="3.9" transform="rotate(64 79.5 62.5)" fill="#ffb020" opacity="0.49"/><ellipse cx="152.4" cy="82.3" rx="13.4" ry="3.7" transform="rotate(61 152.4 82.3)" fill="#e85a20" opacity="0.61"/><ellipse cx="224.9" cy="149.6" rx="14.0" ry="4.0" transform="rotate(61 224.9 149.6)" fill="#c85a20" opacity="0.44"/><ellipse cx="156.5" cy="77.4" rx="16.2" ry="5.0" transform="rotate(59 156.5 77.4)" fill="#c84a18" opacity="0.60"/><ellipse cx="259.2" cy="262.9" rx="15.7" ry="4.8" transform="rotate(62 259.2 262.9)" fill="#c84a18" opacity="0.54"/><ellipse cx="119.1" cy="172.2" rx="14.5" ry="3.8" transform="rotate(63 119.1 172.2)" fill="#e85a20" opacity="0.46"/><ellipse cx="268.8" cy="417.8" rx="10.9" ry="3.4" transform="rotate(59 268.8 417.8)" fill="#544a60" opacity="0.40"/><ellipse cx="270.5" cy="196.3" rx="13.9" ry="3.0" transform="rotate(58 270.5 196.3)" fill="#a84818" opacity="0.39"/><ellipse cx="302.3" cy="351.8" rx="12.3" ry="3.6" transform="rotate(65 302.3 351.8)" fill="#080404" opacity="0.73"/><ellipse cx="140.3" cy="137.0" rx="17.3" ry="4.9" transform="rotate(64 140.3 137.0)" fill="#e87818" opacity="0.46"/><ellipse cx="177.5" cy="357.6" rx="16.8" ry="5.0" transform="rotate(62 177.5 357.6)" fill="#544c62" opacity="0.42"/><ellipse cx="113.9" cy="96.1" rx="9.9" ry="2.1" transform="rotate(58 113.9 96.1)" fill="#ffa020" opacity="0.55"/><ellipse cx="150.6" cy="99.1" rx="13.0" ry="3.0" transform="rotate(59 150.6 99.1)" fill="#6a6078" opacity="0.47"/><ellipse cx="89.8" cy="49.0" rx="12.1" ry="2.7" transform="rotate(57 89.8 49.0)" fill="#e85a20" opacity="0.70"/><ellipse cx="142.2" cy="277.4" rx="11.5" ry="3.4" transform="rotate(61 142.2 277.4)" fill="#3e3a4c" opacity="0.31"/><ellipse cx="219.8" cy="150.5" rx="11.7" ry="4.7" transform="rotate(61 219.8 150.5)" fill="#080404" opacity="0.52"/><ellipse cx="173.7" cy="338.0" rx="11.5" ry="2.3" transform="rotate(64 173.7 338.0)" fill="#3e3a4c" opacity="0.31"/><ellipse cx="190.8" cy="156.7" rx="12.7" ry="2.6" transform="rotate(58 190.8 156.7)" fill="#ff7a30" opacity="0.62"/><ellipse cx="169.3" cy="279.1" rx="17.1" ry="4.4" transform="rotate(60 169.3 279.1)" fill="#544c62" opacity="0.31"/><ellipse cx="255.2" cy="319.4" rx="16.7" ry="4.6" transform="rotate(59 255.2 319.4)" fill="#f07030" opacity="0.51"/><ellipse cx="99.5" cy="78.6" rx="12.6" ry="3.7" transform="rotate(58 99.5 78.6)" fill="#f08020" opacity="0.71"/><ellipse cx="171.0" cy="175.0" rx="9.7" ry="3.0" transform="rotate(58 171.0 175.0)" fill="#ff7a30" opacity="0.69"/><ellipse cx="195.1" cy="122.2" rx="12.2" ry="3.3" transform="rotate(61 195.1 122.2)" fill="#f06828" opacity="0.63"/><ellipse cx="152.9" cy="137.6" rx="13.9" ry="4.3" transform="rotate(64 152.9 137.6)" fill="#ffc030" opacity="0.84"/><ellipse cx="207.3" cy="130.3" rx="6.8" ry="2.2" transform="rotate(66 207.3 130.3)" fill="#080404" opacity="0.52"/><ellipse cx="222.8" cy="150.3" rx="12.1" ry="2.6" transform="rotate(62 222.8 150.3)" fill="#3e3a4c" opacity="0.31"/><ellipse cx="173.3" cy="263.2" rx="11.6" ry="2.3" transform="rotate(62 173.3 263.2)" fill="#f06828" opacity="0.43"/><ellipse cx="216.1" cy="135.8" rx="16.5" ry="5.0" transform="rotate(61 216.1 135.8)" fill="#6a5a70" opacity="0.46"/><ellipse cx="175.6" cy="104.5" rx="7.2" ry="3.2" transform="rotate(58 175.6 104.5)" fill="#080404" opacity="0.77"/><ellipse cx="173.0" cy="288.9" rx="15.0" ry="4.1" transform="rotate(58 173.0 288.9)" fill="#a84818" opacity="0.23"/><ellipse cx="113.4" cy="107.3" rx="9.6" ry="2.7" transform="rotate(62 113.4 107.3)" fill="#ffa020" opacity="0.76"/><ellipse cx="241.7" cy="326.4" rx="14.8" ry="3.1" transform="rotate(58 241.7 326.4)" fill="#e85a20" opacity="0.52"/><ellipse cx="132.5" cy="111.9" rx="12.7" ry="2.8" transform="rotate(58 132.5 111.9)" fill="#ffa020" opacity="0.47"/><ellipse cx="226.5" cy="131.4" rx="14.8" ry="3.4" transform="rotate(64 226.5 131.4)" fill="#f06828" opacity="0.62"/><ellipse cx="272.0" cy="407.3" rx="10.1" ry="4.4" transform="rotate(61 272.0 407.3)" fill="#080404" opacity="0.84"/><ellipse cx="255.2" cy="355.7" rx="8.5" ry="3.0" transform="rotate(61 255.2 355.7)" fill="#080404" opacity="0.74"/><ellipse cx="291.4" cy="420.0" rx="9.8" ry="2.2" transform="rotate(60 291.4 420.0)" fill="#544a60" opacity="0.34"/><ellipse cx="210.2" cy="169.5" rx="9.0" ry="2.7" transform="rotate(61 210.2 169.5)" fill="#080404" opacity="0.65"/><ellipse cx="90.6" cy="88.9" rx="16.7" ry="3.6" transform="rotate(61 90.6 88.9)" fill="#e87818" opacity="0.64"/><ellipse cx="179.0" cy="115.8" rx="10.9" ry="2.9" transform="rotate(64 179.0 115.8)" fill="#e85a20" opacity="0.40"/><ellipse cx="245.6" cy="428.9" rx="17.1" ry="5.3" transform="rotate(62 245.6 428.9)" fill="#6a6078" opacity="0.34"/><ellipse cx="233.0" cy="150.9" rx="16.1" ry="4.2" transform="rotate(63 233.0 150.9)" fill="#544c62" opacity="0.32"/><ellipse cx="136.8" cy="88.0" rx="17.6" ry="3.7" transform="rotate(67 136.8 88.0)" fill="#ff9a18" opacity="0.72"/><ellipse cx="199.6" cy="183.5" rx="8.5" ry="3.1" transform="rotate(63 199.6 183.5)" fill="#080404" opacity="0.70"/><ellipse cx="198.8" cy="232.5" rx="16.7" ry="3.5" transform="rotate(60 198.8 232.5)" fill="#f07030" opacity="0.71"/><ellipse cx="283.1" cy="326.7" rx="15.3" ry="4.4" transform="rotate(58 283.1 326.7)" fill="#ff7a30" opacity="0.42"/><ellipse cx="196.3" cy="200.8" rx="12.8" ry="2.9" transform="rotate(59 196.3 200.8)" fill="#f06828" opacity="0.50"/><ellipse cx="267.7" cy="253.2" rx="13.0" ry="3.5" transform="rotate(60 267.7 253.2)" fill="#f07030" opacity="0.55"/><ellipse cx="332.3" cy="329.4" rx="9.8" ry="2.8" transform="rotate(65 332.3 329.4)" fill="#f07030" opacity="0.46"/><ellipse cx="135.0" cy="95.3" rx="13.6" ry="3.8" transform="rotate(64 135.0 95.3)" fill="#ffc030" opacity="0.81"/><ellipse cx="299.1" cy="360.0" rx="10.3" ry="2.7" transform="rotate(60 299.1 360.0)" fill="#e85a20" opacity="0.65"/><ellipse cx="185.3" cy="145.8" rx="11.9" ry="2.5" transform="rotate(65 185.3 145.8)" fill="#ff7a30" opacity="0.68"/><ellipse cx="259.0" cy="168.4" rx="11.5" ry="3.5" transform="rotate(58 259.0 168.4)" fill="#3e3a4c" opacity="0.34"/><ellipse cx="322.9" cy="314.1" rx="9.3" ry="2.5" transform="rotate(66 322.9 314.1)" fill="#d85420" opacity="0.72"/><ellipse cx="98.7" cy="85.8" rx="9.3" ry="2.1" transform="rotate(61 98.7 85.8)" fill="#ffb020" opacity="0.68"/><ellipse cx="92.1" cy="53.9" rx="17.0" ry="4.6" transform="rotate(60 92.1 53.9)" fill="#ffb020" opacity="0.53"/><ellipse cx="235.0" cy="391.8" rx="14.6" ry="4.5" transform="rotate(59 235.0 391.8)" fill="#d85420" opacity="0.70"/><ellipse cx="118.2" cy="123.8" rx="13.6" ry="3.7" transform="rotate(63 118.2 123.8)" fill="#e87818" opacity="0.79"/><ellipse cx="287.6" cy="421.4" rx="14.4" ry="3.8" transform="rotate(65 287.6 421.4)" fill="#d85420" opacity="0.63"/><ellipse cx="219.2" cy="125.6" rx="9.7" ry="1.9" transform="rotate(57 219.2 125.6)" fill="#f07030" opacity="0.46"/><ellipse cx="263.4" cy="355.2" rx="14.8" ry="3.4" transform="rotate(65 263.4 355.2)" fill="#c84a18" opacity="0.55"/><ellipse cx="138.3" cy="125.3" rx="11.2" ry="2.4" transform="rotate(63 138.3 125.3)" fill="#ff9a18" opacity="0.69"/><ellipse cx="259.8" cy="155.8" rx="12.6" ry="3.6" transform="rotate(57 259.8 155.8)" fill="#3e3a4c" opacity="0.48"/><ellipse cx="90.1" cy="103.2" rx="9.0" ry="2.1" transform="rotate(64 90.1 103.2)" fill="#ffb020" opacity="0.68"/><ellipse cx="112.5" cy="115.8" rx="17.6" ry="4.8" transform="rotate(63 112.5 115.8)" fill="#f08020" opacity="0.60"/><ellipse cx="161.8" cy="309.7" rx="12.0" ry="3.2" transform="rotate(61 161.8 309.7)" fill="#4a4458" opacity="0.42"/><ellipse cx="211.3" cy="308.2" rx="13.5" ry="3.7" transform="rotate(59 211.3 308.2)" fill="#544a60" opacity="0.31"/><ellipse cx="293.1" cy="369.8" rx="12.0" ry="2.5" transform="rotate(60 293.1 369.8)" fill="#f07030" opacity="0.41"/><ellipse cx="142.6" cy="184.3" rx="10.4" ry="3.0" transform="rotate(67 142.6 184.3)" fill="#e85a20" opacity="0.54"/><ellipse cx="256.5" cy="159.0" rx="12.6" ry="3.3" transform="rotate(60 256.5 159.0)" fill="#544c62" opacity="0.41"/><ellipse cx="292.3" cy="372.1" rx="16.1" ry="3.3" transform="rotate(57 292.3 372.1)" fill="#f06828" opacity="0.51"/><ellipse cx="235.6" cy="310.2" rx="14.0" ry="3.8" transform="rotate(64 235.6 310.2)" fill="#e85a20" opacity="0.40"/><ellipse cx="231.3" cy="241.9" rx="11.9" ry="3.7" transform="rotate(62 231.3 241.9)" fill="#ff7a30" opacity="0.47"/><ellipse cx="140.4" cy="193.5" rx="12.3" ry="4.5" transform="rotate(61 140.4 193.5)" fill="#080404" opacity="0.66"/><ellipse cx="190.1" cy="349.3" rx="10.2" ry="2.7" transform="rotate(58 190.1 349.3)" fill="#544c62" opacity="0.50"/><ellipse cx="217.4" cy="250.6" rx="11.9" ry="3.1" transform="rotate(62 217.4 250.6)" fill="#f06828" opacity="0.54"/><ellipse cx="240.4" cy="131.9" rx="11.5" ry="3.0" transform="rotate(64 240.4 131.9)" fill="#f07030" opacity="0.45"/><ellipse cx="313.1" cy="343.3" rx="16.3" ry="3.3" transform="rotate(62 313.1 343.3)" fill="#544a60" opacity="0.37"/><ellipse cx="155.6" cy="78.8" rx="11.8" ry="2.9" transform="rotate(63 155.6 78.8)" fill="#d85420" opacity="0.65"/><ellipse cx="302.1" cy="343.4" rx="10.6" ry="2.3" transform="rotate(60 302.1 343.4)" fill="#c84a18" opacity="0.43"/><ellipse cx="90.6" cy="50.8" rx="9.5" ry="2.1" transform="rotate(66 90.6 50.8)" fill="#e87818" opacity="0.77"/><ellipse cx="179.6" cy="350.1" rx="10.4" ry="2.8" transform="rotate(61 179.6 350.1)" fill="#3e3a4c" opacity="0.46"/><ellipse cx="139.2" cy="111.2" rx="16.2" ry="4.1" transform="rotate(61 139.2 111.2)" fill="#ff9a18" opacity="0.84"/><ellipse cx="154.2" cy="242.5" rx="14.8" ry="4.5" transform="rotate(64 154.2 242.5)" fill="#4a4458" opacity="0.48"/><ellipse cx="245.3" cy="303.1" rx="14.5" ry="4.0" transform="rotate(58 245.3 303.1)" fill="#ff7a30" opacity="0.41"/><ellipse cx="162.9" cy="90.9" rx="10.5" ry="2.6" transform="rotate(61 162.9 90.9)" fill="#e85a20" opacity="0.35"/><ellipse cx="167.8" cy="281.8" rx="16.7" ry="5.0" transform="rotate(59 167.8 281.8)" fill="#c85a20" opacity="0.27"/><ellipse cx="312.5" cy="339.8" rx="17.0" ry="4.7" transform="rotate(61 312.5 339.8)" fill="#f06828" opacity="0.47"/><ellipse cx="107.7" cy="79.9" rx="9.5" ry="2.0" transform="rotate(61 107.7 79.9)" fill="#f08020" opacity="0.53"/><ellipse cx="254.8" cy="152.2" rx="9.2" ry="2.2" transform="rotate(58 254.8 152.2)" fill="#c85a20" opacity="0.38"/><ellipse cx="167.4" cy="288.2" rx="10.0" ry="2.5" transform="rotate(65 167.4 288.2)" fill="#4a4458" opacity="0.47"/><ellipse cx="158.0" cy="271.7" rx="10.0" ry="2.2" transform="rotate(61 158.0 271.7)" fill="#4a4458" opacity="0.54"/><ellipse cx="286.4" cy="289.3" rx="12.8" ry="2.8" transform="rotate(57 286.4 289.3)" fill="#e85a20" opacity="0.58"/><ellipse cx="294.1" cy="355.4" rx="16.2" ry="4.9" transform="rotate(63 294.1 355.4)" fill="#f07030" opacity="0.61"/><ellipse cx="159.0" cy="327.2" rx="17.1" ry="4.7" transform="rotate(63 159.0 327.2)" fill="#a84818" opacity="0.41"/><ellipse cx="78.9" cy="83.8" rx="14.5" ry="4.2" transform="rotate(60 78.9 83.8)" fill="#e87818" opacity="0.80"/><ellipse cx="129.5" cy="176.0" rx="17.3" ry="5.0" transform="rotate(66 129.5 176.0)" fill="#c84a18" opacity="0.66"/><ellipse cx="218.6" cy="360.7" rx="9.6" ry="2.3" transform="rotate(65 218.6 360.7)" fill="#ff7a30" opacity="0.45"/><ellipse cx="208.7" cy="323.8" rx="9.3" ry="2.9" transform="rotate(66 208.7 323.8)" fill="#f06828" opacity="0.62"/><ellipse cx="130.1" cy="143.3" rx="10.8" ry="3.2" transform="rotate(65 130.1 143.3)" fill="#e85a20" opacity="0.71"/><ellipse cx="128.6" cy="185.7" rx="16.5" ry="3.7" transform="rotate(63 128.6 185.7)" fill="#ff7a30" opacity="0.55"/><ellipse cx="141.9" cy="189.8" rx="7.3" ry="2.9" transform="rotate(66 141.9 189.8)" fill="#080404" opacity="0.80"/><ellipse cx="136.7" cy="180.7" rx="10.0" ry="3.0" transform="rotate(66 136.7 180.7)" fill="#e85a20" opacity="0.38"/><ellipse cx="301.0" cy="417.5" rx="16.1" ry="4.0" transform="rotate(67 301.0 417.5)" fill="#f07030" opacity="0.70"/><ellipse cx="225.9" cy="261.0" rx="16.0" ry="4.3" transform="rotate(64 225.9 261.0)" fill="#544a60" opacity="0.46"/><ellipse cx="253.8" cy="432.1" rx="16.9" ry="4.8" transform="rotate(66 253.8 432.1)" fill="#f06828" opacity="0.46"/><ellipse cx="278.6" cy="287.2" rx="12.8" ry="3.4" transform="rotate(63 278.6 287.2)" fill="#f06828" opacity="0.35"/><ellipse cx="235.2" cy="250.8" rx="16.7" ry="4.9" transform="rotate(66 235.2 250.8)" fill="#e85a20" opacity="0.46"/><ellipse cx="239.0" cy="268.6" rx="17.7" ry="4.7" transform="rotate(58 239.0 268.6)" fill="#e85a20" opacity="0.66"/><ellipse cx="170.2" cy="196.5" rx="9.1" ry="2.7" transform="rotate(59 170.2 196.5)" fill="#f07030" opacity="0.38"/><ellipse cx="176.5" cy="185.8" rx="15.7" ry="3.3" transform="rotate(64 176.5 185.8)" fill="#ff7a30" opacity="0.36"/><ellipse cx="94.9" cy="53.1" rx="10.0" ry="3.0" transform="rotate(62 94.9 53.1)" fill="#e87818" opacity="0.81"/><ellipse cx="174.1" cy="85.3" rx="16.0" ry="4.4" transform="rotate(67 174.1 85.3)" fill="#c84a18" opacity="0.39"/><ellipse cx="198.1" cy="144.4" rx="9.6" ry="3.7" transform="rotate(65 198.1 144.4)" fill="#080404" opacity="0.71"/><ellipse cx="186.7" cy="180.2" rx="16.1" ry="4.1" transform="rotate(58 186.7 180.2)" fill="#d85420" opacity="0.55"/><ellipse cx="243.6" cy="415.9" rx="15.4" ry="4.2" transform="rotate(62 243.6 415.9)" fill="#6a5a70" opacity="0.42"/><ellipse cx="123.0" cy="129.1" rx="9.5" ry="2.4" transform="rotate(62 123.0 129.1)" fill="#ffc030" opacity="0.75"/><ellipse cx="183.5" cy="320.8" rx="16.9" ry="3.8" transform="rotate(66 183.5 320.8)" fill="#544c62" opacity="0.45"/><ellipse cx="255.0" cy="288.1" rx="14.4" ry="4.0" transform="rotate(65 255.0 288.1)" fill="#d85420" opacity="0.54"/><ellipse cx="125.5" cy="129.5" rx="11.2" ry="3.3" transform="rotate(64 125.5 129.5)" fill="#ffb020" opacity="0.68"/><ellipse cx="116.1" cy="56.7" rx="17.7" ry="3.8" transform="rotate(63 116.1 56.7)" fill="#ff7a30" opacity="0.64"/><ellipse cx="254.6" cy="273.2" rx="12.2" ry="3.8" transform="rotate(62 254.6 273.2)" fill="#6a5a70" opacity="0.35"/><ellipse cx="162.7" cy="312.9" rx="9.0" ry="1.9" transform="rotate(65 162.7 312.9)" fill="#544c62" opacity="0.41"/><ellipse cx="294.8" cy="235.8" rx="13.7" ry="2.8" transform="rotate(63 294.8 235.8)" fill="#4a4458" opacity="0.54"/><ellipse cx="314.3" cy="317.3" rx="9.5" ry="3.3" transform="rotate(61 314.3 317.3)" fill="#080404" opacity="0.84"/><ellipse cx="161.5" cy="103.7" rx="10.3" ry="2.4" transform="rotate(60 161.5 103.7)" fill="#f07030" opacity="0.67"/><ellipse cx="229.5" cy="252.5" rx="13.6" ry="3.8" transform="rotate(64 229.5 252.5)" fill="#544a60" opacity="0.48"/><ellipse cx="300.8" cy="328.2" rx="11.3" ry="2.7" transform="rotate(66 300.8 328.2)" fill="#ff7a30" opacity="0.66"/><ellipse cx="211.2" cy="380.3" rx="13.0" ry="3.6" transform="rotate(66 211.2 380.3)" fill="#f07030" opacity="0.42"/><ellipse cx="284.3" cy="406.4" rx="10.5" ry="3.3" transform="rotate(62 284.3 406.4)" fill="#6a5a70" opacity="0.40"/><ellipse cx="312.7" cy="305.7" rx="12.4" ry="2.7" transform="rotate(61 312.7 305.7)" fill="#f06828" opacity="0.42"/><ellipse cx="283.7" cy="364.3" rx="10.9" ry="3.3" transform="rotate(59 283.7 364.3)" fill="#6a5a70" opacity="0.39"/><ellipse cx="238.8" cy="219.9" rx="13.4" ry="3.7" transform="rotate(62 238.8 219.9)" fill="#6a6078" opacity="0.32"/><ellipse cx="301.2" cy="359.3" rx="8.5" ry="3.7" transform="rotate(61 301.2 359.3)" fill="#080404" opacity="0.84"/><ellipse cx="128.0" cy="128.3" rx="12.3" ry="3.7" transform="rotate(66 128.0 128.3)" fill="#ffc030" opacity="0.67"/><ellipse cx="227.5" cy="178.8" rx="8.7" ry="2.9" transform="rotate(65 227.5 178.8)" fill="#080404" opacity="0.60"/><ellipse cx="271.6" cy="190.6" rx="17.7" ry="4.6" transform="rotate(63 271.6 190.6)" fill="#544c62" opacity="0.33"/><ellipse cx="333.3" cy="356.3" rx="7.3" ry="3.2" transform="rotate(62 333.3 356.3)" fill="#080404" opacity="0.80"/><ellipse cx="238.4" cy="334.7" rx="16.2" ry="4.3" transform="rotate(65 238.4 334.7)" fill="#f06828" opacity="0.52"/><ellipse cx="169.3" cy="328.9" rx="17.8" ry="3.8" transform="rotate(59 169.3 328.9)" fill="#3e3a4c" opacity="0.42"/><ellipse cx="92.3" cy="107.4" rx="12.4" ry="3.0" transform="rotate(65 92.3 107.4)" fill="#ffb020" opacity="0.68"/><ellipse cx="115.0" cy="172.6" rx="10.2" ry="2.9" transform="rotate(58 115.0 172.6)" fill="#ff7a30" opacity="0.67"/><ellipse cx="196.9" cy="112.2" rx="15.7" ry="4.7" transform="rotate(66 196.9 112.2)" fill="#e85a20" opacity="0.36"/><ellipse cx="302.2" cy="306.2" rx="14.8" ry="3.8" transform="rotate(60 302.2 306.2)" fill="#c84a18" opacity="0.52"/><ellipse cx="156.1" cy="126.5" rx="11.1" ry="2.3" transform="rotate(62 156.1 126.5)" fill="#ffb020" opacity="0.63"/><ellipse cx="324.1" cy="348.5" rx="16.4" ry="3.5" transform="rotate(59 324.1 348.5)" fill="#6a5a70" opacity="0.49"/><ellipse cx="169.7" cy="354.3" rx="14.7" ry="3.9" transform="rotate(63 169.7 354.3)" fill="#c85a20" opacity="0.24"/><ellipse cx="110.6" cy="88.8" rx="15.0" ry="3.3" transform="rotate(61 110.6 88.8)" fill="#ffb020" opacity="0.45"/><ellipse cx="183.7" cy="158.2" rx="15.8" ry="4.3" transform="rotate(59 183.7 158.2)" fill="#d85420" opacity="0.53"/><ellipse cx="263.8" cy="349.0" rx="7.3" ry="2.1" transform="rotate(64 263.8 349.0)" fill="#080404" opacity="0.72"/><ellipse cx="85.3" cy="54.7" rx="14.4" ry="3.8" transform="rotate(64 85.3 54.7)" fill="#ff9a18" opacity="0.59"/><ellipse cx="255.4" cy="348.7" rx="18.0" ry="4.7" transform="rotate(63 255.4 348.7)" fill="#ff7a30" opacity="0.50"/><ellipse cx="151.6" cy="299.0" rx="11.8" ry="2.7" transform="rotate(65 151.6 299.0)" fill="#3e3a4c" opacity="0.33"/><ellipse cx="110.8" cy="84.1" rx="9.2" ry="1.9" transform="rotate(63 110.8 84.1)" fill="#f08020" opacity="0.66"/><ellipse cx="202.8" cy="168.8" rx="16.7" ry="4.0" transform="rotate(60 202.8 168.8)" fill="#544a60" opacity="0.48"/><ellipse cx="260.2" cy="315.1" rx="12.0" ry="2.8" transform="rotate(63 260.2 315.1)" fill="#f06828" opacity="0.66"/><ellipse cx="209.4" cy="118.6" rx="10.7" ry="2.6" transform="rotate(62 209.4 118.6)" fill="#d85420" opacity="0.42"/><ellipse cx="221.1" cy="216.3" rx="14.8" ry="4.5" transform="rotate(60 221.1 216.3)" fill="#e85a20" opacity="0.38"/><ellipse cx="334.3" cy="423.7" rx="13.7" ry="3.6" transform="rotate(61 334.3 423.7)" fill="#ff7a30" opacity="0.56"/><ellipse cx="189.8" cy="252.7" rx="9.7" ry="2.4" transform="rotate(57 189.8 252.7)" fill="#e85a20" opacity="0.68"/><ellipse cx="325.3" cy="323.9" rx="16.1" ry="3.7" transform="rotate(58 325.3 323.9)" fill="#e85a20" opacity="0.39"/><ellipse cx="133.8" cy="130.3" rx="13.0" ry="4.1" transform="rotate(66 133.8 130.3)" fill="#e87818" opacity="0.78"/><ellipse cx="185.3" cy="142.6" rx="12.0" ry="2.6" transform="rotate(61 185.3 142.6)" fill="#d85420" opacity="0.38"/><ellipse cx="322.2" cy="408.0" rx="17.8" ry="5.1" transform="rotate(57 322.2 408.0)" fill="#544a60" opacity="0.43"/><ellipse cx="318.4" cy="403.2" rx="13.3" ry="4.1" transform="rotate(57 318.4 403.2)" fill="#6a5a70" opacity="0.39"/><ellipse cx="180.5" cy="122.4" rx="11.6" ry="2.4" transform="rotate(64 180.5 122.4)" fill="#f07030" opacity="0.44"/><ellipse cx="285.6" cy="428.6" rx="17.3" ry="4.7" transform="rotate(65 285.6 428.6)" fill="#ff7a30" opacity="0.58"/><ellipse cx="247.5" cy="404.5" rx="12.0" ry="4.0" transform="rotate(62 247.5 404.5)" fill="#080404" opacity="0.55"/><ellipse cx="221.7" cy="281.3" rx="10.5" ry="2.4" transform="rotate(66 221.7 281.3)" fill="#ff7a30" opacity="0.38"/><ellipse cx="265.6" cy="339.5" rx="13.3" ry="4.0" transform="rotate(67 265.6 339.5)" fill="#ff7a30" opacity="0.68"/><ellipse cx="151.9" cy="77.7" rx="12.3" ry="3.6" transform="rotate(57 151.9 77.7)" fill="#e85a20" opacity="0.66"/><ellipse cx="164.5" cy="77.1" rx="14.5" ry="3.2" transform="rotate(57 164.5 77.1)" fill="#f07030" opacity="0.54"/><ellipse cx="238.6" cy="172.8" rx="11.5" ry="2.9" transform="rotate(67 238.6 172.8)" fill="#544c62" opacity="0.37"/><ellipse cx="129.5" cy="109.8" rx="15.8" ry="4.6" transform="rotate(57 129.5 109.8)" fill="#ffb020" opacity="0.48"/><ellipse cx="139.4" cy="170.6" rx="8.7" ry="2.6" transform="rotate(63 139.4 170.6)" fill="#080404" opacity="0.64"/><ellipse cx="228.4" cy="156.0" rx="12.9" ry="3.9" transform="rotate(66 228.4 156.0)" fill="#544c62" opacity="0.34"/><ellipse cx="242.5" cy="273.1" rx="15.8" ry="3.9" transform="rotate(61 242.5 273.1)" fill="#5c5468" opacity="0.45"/><ellipse cx="222.4" cy="213.1" rx="10.6" ry="2.6" transform="rotate(66 222.4 213.1)" fill="#e85a20" opacity="0.71"/><ellipse cx="197.3" cy="274.3" rx="10.3" ry="2.5" transform="rotate(64 197.3 274.3)" fill="#5c5468" opacity="0.39"/><ellipse cx="156.9" cy="274.5" rx="11.6" ry="3.1" transform="rotate(58 156.9 274.5)" fill="#c85a20" opacity="0.33"/><ellipse cx="203.4" cy="229.4" rx="13.5" ry="3.4" transform="rotate(63 203.4 229.4)" fill="#f06828" opacity="0.58"/><ellipse cx="212.9" cy="103.5" rx="13.0" ry="4.1" transform="rotate(63 212.9 103.5)" fill="#f07030" opacity="0.45"/><ellipse cx="198.4" cy="237.4" rx="10.7" ry="2.6" transform="rotate(59 198.4 237.4)" fill="#d85420" opacity="0.71"/><ellipse cx="165.2" cy="379.0" rx="13.3" ry="3.7" transform="rotate(62 165.2 379.0)" fill="#4a4458" opacity="0.31"/><ellipse cx="281.6" cy="335.3" rx="17.7" ry="4.9" transform="rotate(59 281.6 335.3)" fill="#ff7a30" opacity="0.49"/><ellipse cx="135.5" cy="183.2" rx="10.1" ry="2.0" transform="rotate(64 135.5 183.2)" fill="#e85a20" opacity="0.57"/><ellipse cx="100.5" cy="130.1" rx="11.8" ry="2.5" transform="rotate(66 100.5 130.1)" fill="#e87818" opacity="0.48"/><ellipse cx="225.0" cy="156.5" rx="13.5" ry="3.9" transform="rotate(63 225.0 156.5)" fill="#c84a18" opacity="0.39"/><ellipse cx="317.9" cy="401.4" rx="15.6" ry="3.2" transform="rotate(64 317.9 401.4)" fill="#f06828" opacity="0.66"/><ellipse cx="103.2" cy="121.9" rx="17.5" ry="5.6" transform="rotate(61 103.2 121.9)" fill="#ff9a18" opacity="0.64"/><ellipse cx="235.3" cy="277.4" rx="12.2" ry="3.6" transform="rotate(60 235.3 277.4)" fill="#080404" opacity="0.52"/><ellipse cx="85.2" cy="91.1" rx="9.6" ry="3.0" transform="rotate(66 85.2 91.1)" fill="#ffa020" opacity="0.64"/><ellipse cx="291.9" cy="314.6" rx="9.4" ry="2.4" transform="rotate(59 291.9 314.6)" fill="#5c5468" opacity="0.43"/><ellipse cx="262.7" cy="398.2" rx="9.4" ry="3.9" transform="rotate(64 262.7 398.2)" fill="#080404" opacity="0.66"/><ellipse cx="219.1" cy="255.8" rx="16.4" ry="3.8" transform="rotate(60 219.1 255.8)" fill="#e85a20" opacity="0.67"/><ellipse cx="127.9" cy="119.2" rx="15.0" ry="4.5" transform="rotate(66 127.9 119.2)" fill="#ffa020" opacity="0.51"/><ellipse cx="112.7" cy="77.8" rx="14.3" ry="4.3" transform="rotate(61 112.7 77.8)" fill="#f08020" opacity="0.58"/><ellipse cx="174.8" cy="167.5" rx="12.9" ry="3.5" transform="rotate(64 174.8 167.5)" fill="#e85a20" opacity="0.39"/><ellipse cx="157.5" cy="84.2" rx="11.9" ry="2.6" transform="rotate(61 157.5 84.2)" fill="#c84a18" opacity="0.45"/><ellipse cx="283.8" cy="407.6" rx="17.0" ry="4.2" transform="rotate(59 283.8 407.6)" fill="#d85420" opacity="0.49"/><ellipse cx="94.3" cy="50.1" rx="16.8" ry="4.1" transform="rotate(64 94.3 50.1)" fill="#f06828" opacity="0.45"/><ellipse cx="230.6" cy="403.6" rx="10.4" ry="4.6" transform="rotate(62 230.6 403.6)" fill="#080404" opacity="0.60"/><ellipse cx="159.1" cy="68.0" rx="17.2" ry="4.0" transform="rotate(66 159.1 68.0)" fill="#6a5a70" opacity="0.35"/><ellipse cx="228.1" cy="265.2" rx="10.4" ry="4.6" transform="rotate(58 228.1 265.2)" fill="#080404" opacity="0.84"/><ellipse cx="210.2" cy="222.9" rx="16.0" ry="4.6" transform="rotate(61 210.2 222.9)" fill="#e85a20" opacity="0.65"/><ellipse cx="307.1" cy="403.5" rx="12.3" ry="3.0" transform="rotate(62 307.1 403.5)" fill="#f06828" opacity="0.66"/><ellipse cx="160.9" cy="337.3" rx="15.2" ry="3.7" transform="rotate(63 160.9 337.3)" fill="#4a4458" opacity="0.47"/><ellipse cx="180.9" cy="251.1" rx="13.3" ry="4.1" transform="rotate(60 180.9 251.1)" fill="#e85a20" opacity="0.62"/><ellipse cx="144.0" cy="239.8" rx="17.7" ry="5.3" transform="rotate(66 144.0 239.8)" fill="#3e3a4c" opacity="0.34"/><ellipse cx="160.4" cy="86.6" rx="10.7" ry="4.3" transform="rotate(58 160.4 86.6)" fill="#080404" opacity="0.78"/><ellipse cx="213.6" cy="213.1" rx="13.0" ry="3.6" transform="rotate(61 213.6 213.1)" fill="#e85a20" opacity="0.44"/><ellipse cx="199.5" cy="278.9" rx="11.6" ry="2.6" transform="rotate(65 199.5 278.9)" fill="#f07030" opacity="0.71"/><ellipse cx="225.0" cy="234.4" rx="16.8" ry="4.3" transform="rotate(66 225.0 234.4)" fill="#f06828" opacity="0.52"/><ellipse cx="227.9" cy="149.6" rx="17.2" ry="5.0" transform="rotate(67 227.9 149.6)" fill="#3e3a4c" opacity="0.37"/><ellipse cx="149.4" cy="223.7" rx="10.7" ry="2.2" transform="rotate(57 149.4 223.7)" fill="#4a4458" opacity="0.49"/><ellipse cx="181.1" cy="225.5" rx="14.2" ry="4.0" transform="rotate(61 181.1 225.5)" fill="#e85a20" opacity="0.67"/><ellipse cx="217.8" cy="123.8" rx="8.3" ry="2.8" transform="rotate(63 217.8 123.8)" fill="#080404" opacity="0.65"/><ellipse cx="157.9" cy="245.4" rx="9.4" ry="2.8" transform="rotate(64 157.9 245.4)" fill="#4a4458" opacity="0.46"/><ellipse cx="247.0" cy="312.4" rx="10.7" ry="4.2" transform="rotate(58 247.0 312.4)" fill="#080404" opacity="0.60"/><ellipse cx="288.9" cy="339.7" rx="17.2" ry="5.2" transform="rotate(59 288.9 339.7)" fill="#f07030" opacity="0.69"/><ellipse cx="232.3" cy="407.3" rx="7.1" ry="2.8" transform="rotate(63 232.3 407.3)" fill="#080404" opacity="0.51"/><ellipse cx="180.8" cy="213.6" rx="17.5" ry="5.3" transform="rotate(65 180.8 213.6)" fill="#5c5468" opacity="0.36"/><ellipse cx="153.8" cy="306.3" rx="11.1" ry="2.7" transform="rotate(58 153.8 306.3)" fill="#3e3a4c" opacity="0.49"/><ellipse cx="191.9" cy="248.3" rx="16.8" ry="4.4" transform="rotate(58 191.9 248.3)" fill="#e85a20" opacity="0.48"/><ellipse cx="306.4" cy="378.8" rx="9.6" ry="2.3" transform="rotate(62 306.4 378.8)" fill="#d85420" opacity="0.36"/><ellipse cx="283.0" cy="408.0" rx="11.4" ry="2.9" transform="rotate(57 283.0 408.0)" fill="#f07030" opacity="0.47"/><ellipse cx="217.8" cy="239.3" rx="7.2" ry="2.3" transform="rotate(65 217.8 239.3)" fill="#080404" opacity="0.71"/><ellipse cx="293.8" cy="320.4" rx="7.3" ry="2.3" transform="rotate(60 293.8 320.4)" fill="#080404" opacity="0.62"/><ellipse cx="196.1" cy="254.6" rx="10.5" ry="3.1" transform="rotate(59 196.1 254.6)" fill="#e85a20" opacity="0.60"/><ellipse cx="201.6" cy="417.8" rx="14.8" ry="4.6" transform="rotate(59 201.6 417.8)" fill="#c85a20" opacity="0.40"/><ellipse cx="240.0" cy="418.1" rx="9.4" ry="2.5" transform="rotate(64 240.0 418.1)" fill="#f07030" opacity="0.69"/><ellipse cx="157.6" cy="192.8" rx="13.4" ry="3.1" transform="rotate(66 157.6 192.8)" fill="#f07030" opacity="0.37"/><ellipse cx="167.1" cy="299.6" rx="10.1" ry="3.2" transform="rotate(63 167.1 299.6)" fill="#544c62" opacity="0.50"/><ellipse cx="149.8" cy="96.9" rx="17.5" ry="4.8" transform="rotate(59 149.8 96.9)" fill="#c84a18" opacity="0.59"/><ellipse cx="131.3" cy="192.0" rx="14.8" ry="3.8" transform="rotate(61 131.3 192.0)" fill="#d85420" opacity="0.54"/><ellipse cx="118.0" cy="114.9" rx="12.0" ry="2.6" transform="rotate(63 118.0 114.9)" fill="#ff9a18" opacity="0.79"/><ellipse cx="165.3" cy="315.3" rx="9.1" ry="2.2" transform="rotate(65 165.3 315.3)" fill="#4a4458" opacity="0.48"/><ellipse cx="172.0" cy="416.3" rx="13.9" ry="4.4" transform="rotate(59 172.0 416.3)" fill="#544c62" opacity="0.37"/><ellipse cx="270.4" cy="387.5" rx="10.1" ry="2.1" transform="rotate(59 270.4 387.5)" fill="#544a60" opacity="0.47"/><ellipse cx="175.7" cy="314.0" rx="14.4" ry="3.1" transform="rotate(65 175.7 314.0)" fill="#4a4458" opacity="0.46"/><ellipse cx="150.7" cy="67.4" rx="12.2" ry="3.6" transform="rotate(61 150.7 67.4)" fill="#d85420" opacity="0.50"/><ellipse cx="293.3" cy="363.0" rx="9.5" ry="3.0" transform="rotate(65 293.3 363.0)" fill="#d85420" opacity="0.60"/><ellipse cx="91.4" cy="82.7" rx="16.3" ry="5.0" transform="rotate(62 91.4 82.7)" fill="#ffb020" opacity="0.45"/><ellipse cx="165.4" cy="264.4" rx="15.4" ry="3.8" transform="rotate(61 165.4 264.4)" fill="#544c62" opacity="0.51"/><ellipse cx="179.1" cy="261.6" rx="17.3" ry="4.5" transform="rotate(58 179.1 261.6)" fill="#f06828" opacity="0.61"/><ellipse cx="295.0" cy="311.4" rx="13.1" ry="3.1" transform="rotate(64 295.0 311.4)" fill="#544a60" opacity="0.47"/><ellipse cx="328.8" cy="313.6" rx="16.3" ry="4.1" transform="rotate(65 328.8 313.6)" fill="#d85420" opacity="0.60"/><ellipse cx="212.1" cy="400.9" rx="11.1" ry="2.6" transform="rotate(61 212.1 400.9)" fill="#f07030" opacity="0.59"/><ellipse cx="133.4" cy="141.7" rx="15.5" ry="3.5" transform="rotate(62 133.4 141.7)" fill="#ffc030" opacity="0.51"/><ellipse cx="317.9" cy="403.9" rx="17.4" ry="4.7" transform="rotate(66 317.9 403.9)" fill="#c84a18" opacity="0.70"/><ellipse cx="159.6" cy="149.3" rx="12.1" ry="3.2" transform="rotate(65 159.6 149.3)" fill="#ff7a30" opacity="0.63"/><ellipse cx="158.1" cy="337.0" rx="12.0" ry="3.4" transform="rotate(61 158.1 337.0)" fill="#a84818" opacity="0.21"/><ellipse cx="218.3" cy="375.6" rx="11.1" ry="3.3" transform="rotate(64 218.3 375.6)" fill="#6a6078" opacity="0.47"/><ellipse cx="343.0" cy="374.3" rx="18.0" ry="4.7" transform="rotate(59 343.0 374.3)" fill="#544a60" opacity="0.38"/><ellipse cx="245.5" cy="161.3" rx="13.1" ry="4.0" transform="rotate(65 245.5 161.3)" fill="#a84818" opacity="0.44"/><ellipse cx="238.2" cy="337.7" rx="7.6" ry="2.3" transform="rotate(61 238.2 337.7)" fill="#080404" opacity="0.67"/><ellipse cx="242.9" cy="197.6" rx="13.6" ry="4.0" transform="rotate(59 242.9 197.6)" fill="#a84818" opacity="0.21"/><ellipse cx="271.5" cy="203.8" rx="14.4" ry="3.2" transform="rotate(63 271.5 203.8)" fill="#3e3a4c" opacity="0.46"/><ellipse cx="250.0" cy="122.0" rx="11.9" ry="2.7" transform="rotate(58 250.0 122.0)" fill="#d85420" opacity="0.62"/><ellipse cx="169.4" cy="226.1" rx="12.0" ry="3.1" transform="rotate(57 169.4 226.1)" fill="#5c5468" opacity="0.47"/><ellipse cx="301.8" cy="386.7" rx="11.4" ry="2.4" transform="rotate(63 301.8 386.7)" fill="#6a6078" opacity="0.31"/><ellipse cx="241.2" cy="253.5" rx="11.1" ry="3.5" transform="rotate(65 241.2 253.5)" fill="#d85420" opacity="0.56"/><ellipse cx="211.4" cy="174.3" rx="12.3" ry="3.8" transform="rotate(66 211.4 174.3)" fill="#c84a18" opacity="0.71"/><ellipse cx="109.2" cy="74.2" rx="9.6" ry="2.3" transform="rotate(59 109.2 74.2)" fill="#ff9a18" opacity="0.45"/><ellipse cx="200.4" cy="101.2" rx="12.2" ry="3.8" transform="rotate(60 200.4 101.2)" fill="#f06828" opacity="0.48"/><ellipse cx="132.6" cy="123.2" rx="13.7" ry="3.2" transform="rotate(66 132.6 123.2)" fill="#ff9a18" opacity="0.79"/><ellipse cx="136.3" cy="300.7" rx="14.3" ry="3.3" transform="rotate(60 136.3 300.7)" fill="#c85a20" opacity="0.21"/><ellipse cx="171.9" cy="264.5" rx="11.9" ry="3.7" transform="rotate(66 171.9 264.5)" fill="#f06828" opacity="0.36"/><ellipse cx="246.9" cy="150.3" rx="13.5" ry="3.8" transform="rotate(64 246.9 150.3)" fill="#c85a20" opacity="0.29"/><ellipse cx="305.2" cy="322.8" rx="15.4" ry="3.2" transform="rotate(58 305.2 322.8)" fill="#6a6078" opacity="0.43"/><ellipse cx="176.2" cy="371.4" rx="10.7" ry="2.9" transform="rotate(58 176.2 371.4)" fill="#544c62" opacity="0.46"/><ellipse cx="102.9" cy="103.0" rx="10.7" ry="2.2" transform="rotate(60 102.9 103.0)" fill="#e87818" opacity="0.82"/><ellipse cx="174.0" cy="231.1" rx="12.3" ry="2.6" transform="rotate(65 174.0 231.1)" fill="#f06828" opacity="0.38"/><ellipse cx="173.1" cy="251.2" rx="12.7" ry="3.2" transform="rotate(64 173.1 251.2)" fill="#f07030" opacity="0.43"/><ellipse cx="154.7" cy="271.4" rx="16.0" ry="5.1" transform="rotate(58 154.7 271.4)" fill="#4a4458" opacity="0.49"/><ellipse cx="89.9" cy="55.3" rx="11.0" ry="3.5" transform="rotate(62 89.9 55.3)" fill="#ffc030" opacity="0.58"/><ellipse cx="121.4" cy="195.7" rx="14.2" ry="3.6" transform="rotate(59 121.4 195.7)" fill="#c84a18" opacity="0.63"/><ellipse cx="137.2" cy="166.1" rx="14.4" ry="3.2" transform="rotate(57 137.2 166.1)" fill="#f06828" opacity="0.49"/><ellipse cx="199.3" cy="334.2" rx="10.4" ry="3.0" transform="rotate(64 199.3 334.2)" fill="#080404" opacity="0.59"/><ellipse cx="131.2" cy="153.8" rx="14.0" ry="4.3" transform="rotate(66 131.2 153.8)" fill="#c84a18" opacity="0.39"/><ellipse cx="193.3" cy="212.3" rx="7.7" ry="3.4" transform="rotate(61 193.3 212.3)" fill="#080404" opacity="0.76"/><ellipse cx="233.5" cy="231.5" rx="13.4" ry="3.2" transform="rotate(60 233.5 231.5)" fill="#e85a20" opacity="0.69"/><ellipse cx="312.7" cy="428.2" rx="8.5" ry="3.6" transform="rotate(57 312.7 428.2)" fill="#080404" opacity="0.64"/><ellipse cx="81.4" cy="53.2" rx="16.6" ry="4.9" transform="rotate(59 81.4 53.2)" fill="#e87818" opacity="0.60"/><ellipse cx="292.9" cy="337.0" rx="12.4" ry="3.4" transform="rotate(66 292.9 337.0)" fill="#ff7a30" opacity="0.42"/><ellipse cx="211.0" cy="124.7" rx="17.2" ry="4.4" transform="rotate(61 211.0 124.7)" fill="#d85420" opacity="0.63"/><ellipse cx="179.9" cy="83.3" rx="14.8" ry="4.4" transform="rotate(59 179.9 83.3)" fill="#c84a18" opacity="0.65"/><ellipse cx="204.8" cy="315.6" rx="13.5" ry="4.0" transform="rotate(64 204.8 315.6)" fill="#c84a18" opacity="0.44"/><ellipse cx="224.2" cy="235.2" rx="12.2" ry="2.5" transform="rotate(62 224.2 235.2)" fill="#e85a20" opacity="0.56"/><ellipse cx="234.9" cy="270.9" rx="17.3" ry="3.6" transform="rotate(61 234.9 270.9)" fill="#544a60" opacity="0.40"/><ellipse cx="302.7" cy="360.3" rx="8.2" ry="3.5" transform="rotate(60 302.7 360.3)" fill="#080404" opacity="0.78"/><ellipse cx="213.4" cy="224.0" rx="17.3" ry="4.5" transform="rotate(62 213.4 224.0)" fill="#e85a20" opacity="0.35"/><ellipse cx="224.8" cy="186.4" rx="16.7" ry="4.5" transform="rotate(58 224.8 186.4)" fill="#d85420" opacity="0.35"/><ellipse cx="254.6" cy="349.5" rx="11.6" ry="2.5" transform="rotate(58 254.6 349.5)" fill="#e85a20" opacity="0.44"/><ellipse cx="246.5" cy="305.1" rx="13.1" ry="3.0" transform="rotate(58 246.5 305.1)" fill="#6a6078" opacity="0.33"/><ellipse cx="159.2" cy="90.5" rx="16.5" ry="4.0" transform="rotate(60 159.2 90.5)" fill="#d85420" opacity="0.68"/><ellipse cx="299.5" cy="383.7" rx="16.2" ry="3.6" transform="rotate(61 299.5 383.7)" fill="#c84a18" opacity="0.50"/><ellipse cx="284.9" cy="184.8" rx="9.1" ry="2.0" transform="rotate(62 284.9 184.8)" fill="#4a4458" opacity="0.55"/><ellipse cx="207.7" cy="140.3" rx="17.6" ry="3.9" transform="rotate(57 207.7 140.3)" fill="#f07030" opacity="0.39"/><ellipse cx="275.9" cy="192.2" rx="15.0" ry="4.4" transform="rotate(61 275.9 192.2)" fill="#3e3a4c" opacity="0.31"/><ellipse cx="134.9" cy="123.5" rx="12.5" ry="3.0" transform="rotate(62 134.9 123.5)" fill="#ff9a18" opacity="0.49"/><ellipse cx="215.7" cy="144.6" rx="11.6" ry="3.5" transform="rotate(57 215.7 144.6)" fill="#c84a18" opacity="0.59"/><ellipse cx="250.2" cy="314.5" rx="15.3" ry="3.3" transform="rotate(67 250.2 314.5)" fill="#d85420" opacity="0.53"/><ellipse cx="191.4" cy="187.4" rx="12.4" ry="2.6" transform="rotate(67 191.4 187.4)" fill="#c84a18" opacity="0.56"/><ellipse cx="325.1" cy="409.1" rx="10.2" ry="2.4" transform="rotate(62 325.1 409.1)" fill="#ff7a30" opacity="0.69"/><ellipse cx="130.5" cy="103.4" rx="15.9" ry="5.1" transform="rotate(64 130.5 103.4)" fill="#ffa020" opacity="0.49"/><ellipse cx="161.5" cy="368.6" rx="15.2" ry="4.7" transform="rotate(66 161.5 368.6)" fill="#c85a20" opacity="0.34"/><ellipse cx="153.5" cy="252.7" rx="14.6" ry="3.0" transform="rotate(61 153.5 252.7)" fill="#544c62" opacity="0.33"/><ellipse cx="300.0" cy="341.1" rx="10.8" ry="3.0" transform="rotate(66 300.0 341.1)" fill="#6a6078" opacity="0.32"/><ellipse cx="159.4" cy="218.6" rx="13.0" ry="3.7" transform="rotate(65 159.4 218.6)" fill="#a84818" opacity="0.40"/><ellipse cx="265.6" cy="254.7" rx="9.3" ry="2.8" transform="rotate(63 265.6 254.7)" fill="#c84a18" opacity="0.57"/><ellipse cx="136.0" cy="104.0" rx="15.6" ry="4.9" transform="rotate(61 136.0 104.0)" fill="#e87818" opacity="0.84"/><ellipse cx="256.7" cy="254.8" rx="6.5" ry="2.5" transform="rotate(63 256.7 254.8)" fill="#080404" opacity="0.83"/><ellipse cx="150.4" cy="345.5" rx="10.4" ry="2.8" transform="rotate(58 150.4 345.5)" fill="#a84818" opacity="0.37"/><ellipse cx="228.7" cy="411.9" rx="13.1" ry="4.1" transform="rotate(65 228.7 411.9)" fill="#ff7a30" opacity="0.70"/><ellipse cx="218.6" cy="142.9" rx="8.0" ry="3.5" transform="rotate(65 218.6 142.9)" fill="#080404" opacity="0.54"/><ellipse cx="108.9" cy="117.4" rx="17.0" ry="5.0" transform="rotate(61 108.9 117.4)" fill="#ffc030" opacity="0.52"/><ellipse cx="128.5" cy="178.2" rx="12.3" ry="3.0" transform="rotate(61 128.5 178.2)" fill="#f06828" opacity="0.61"/><ellipse cx="134.6" cy="89.3" rx="11.0" ry="2.5" transform="rotate(60 134.6 89.3)" fill="#ffa020" opacity="0.76"/><ellipse cx="264.3" cy="262.6" rx="13.4" ry="3.8" transform="rotate(66 264.3 262.6)" fill="#e85a20" opacity="0.56"/><ellipse cx="104.5" cy="77.2" rx="16.6" ry="5.3" transform="rotate(64 104.5 77.2)" fill="#ff9a18" opacity="0.65"/><ellipse cx="194.6" cy="380.4" rx="11.9" ry="3.8" transform="rotate(61 194.6 380.4)" fill="#4a4458" opacity="0.34"/><ellipse cx="215.4" cy="194.2" rx="16.1" ry="3.9" transform="rotate(63 215.4 194.2)" fill="#f07030" opacity="0.62"/><ellipse cx="218.8" cy="116.2" rx="16.3" ry="4.4" transform="rotate(65 218.8 116.2)" fill="#6a6078" opacity="0.47"/><ellipse cx="200.8" cy="101.8" rx="16.0" ry="3.6" transform="rotate(64 200.8 101.8)" fill="#e85a20" opacity="0.54"/><ellipse cx="288.7" cy="422.3" rx="9.6" ry="3.1" transform="rotate(66 288.7 422.3)" fill="#080404" opacity="0.66"/><ellipse cx="314.3" cy="405.8" rx="11.9" ry="3.7" transform="rotate(62 314.3 405.8)" fill="#080404" opacity="0.63"/><ellipse cx="178.4" cy="161.5" rx="17.1" ry="4.4" transform="rotate(67 178.4 161.5)" fill="#f06828" opacity="0.57"/><ellipse cx="163.8" cy="338.3" rx="10.1" ry="3.0" transform="rotate(59 163.8 338.3)" fill="#a84818" opacity="0.29"/><ellipse cx="265.0" cy="322.6" rx="14.5" ry="3.7" transform="rotate(59 265.0 322.6)" fill="#c84a18" opacity="0.64"/><ellipse cx="250.0" cy="305.8" rx="14.5" ry="3.0" transform="rotate(64 250.0 305.8)" fill="#ff7a30" opacity="0.52"/><ellipse cx="189.5" cy="186.9" rx="9.1" ry="2.1" transform="rotate(58 189.5 186.9)" fill="#ff7a30" opacity="0.56"/><ellipse cx="298.1" cy="421.9" rx="14.8" ry="4.0" transform="rotate(64 298.1 421.9)" fill="#f07030" opacity="0.55"/><ellipse cx="150.8" cy="340.8" rx="11.8" ry="2.5" transform="rotate(62 150.8 340.8)" fill="#3e3a4c" opacity="0.39"/><ellipse cx="278.3" cy="403.6" rx="6.6" ry="2.0" transform="rotate(60 278.3 403.6)" fill="#080404" opacity="0.61"/><ellipse cx="207.2" cy="213.3" rx="17.4" ry="5.5" transform="rotate(64 207.2 213.3)" fill="#c84a18" opacity="0.50"/><ellipse cx="304.1" cy="314.3" rx="10.2" ry="2.7" transform="rotate(61 304.1 314.3)" fill="#544a60" opacity="0.38"/><ellipse cx="148.6" cy="174.0" rx="12.4" ry="3.8" transform="rotate(60 148.6 174.0)" fill="#e85a20" opacity="0.37"/><ellipse cx="165.1" cy="85.4" rx="11.4" ry="2.3" transform="rotate(67 165.1 85.4)" fill="#f07030" opacity="0.57"/><ellipse cx="216.1" cy="143.4" rx="13.6" ry="3.9" transform="rotate(59 216.1 143.4)" fill="#f06828" opacity="0.49"/><ellipse cx="197.4" cy="191.3" rx="12.0" ry="3.4" transform="rotate(59 197.4 191.3)" fill="#ff7a30" opacity="0.68"/><ellipse cx="166.7" cy="224.8" rx="11.0" ry="2.6" transform="rotate(66 166.7 224.8)" fill="#c84a18" opacity="0.43"/><ellipse cx="177.2" cy="266.5" rx="16.2" ry="4.8" transform="rotate(67 177.2 266.5)" fill="#f07030" opacity="0.43"/><ellipse cx="170.9" cy="249.6" rx="12.0" ry="3.7" transform="rotate(64 170.9 249.6)" fill="#ff7a30" opacity="0.36"/><ellipse cx="161.0" cy="153.1" rx="14.3" ry="4.1" transform="rotate(57 161.0 153.1)" fill="#c84a18" opacity="0.43"/><ellipse cx="167.2" cy="245.2" rx="15.5" ry="4.1" transform="rotate(60 167.2 245.2)" fill="#5c5468" opacity="0.43"/><ellipse cx="148.4" cy="199.4" rx="15.0" ry="3.4" transform="rotate(67 148.4 199.4)" fill="#ff7a30" opacity="0.38"/><ellipse cx="219.9" cy="233.5" rx="11.1" ry="3.0" transform="rotate(67 219.9 233.5)" fill="#f07030" opacity="0.63"/><ellipse cx="173.1" cy="194.2" rx="15.6" ry="4.2" transform="rotate(63 173.1 194.2)" fill="#c84a18" opacity="0.55"/><ellipse cx="219.7" cy="287.7" rx="15.1" ry="3.6" transform="rotate(63 219.7 287.7)" fill="#e85a20" opacity="0.70"/><ellipse cx="132.5" cy="159.4" rx="15.6" ry="4.4" transform="rotate(62 132.5 159.4)" fill="#c84a18" opacity="0.44"/><ellipse cx="248.5" cy="342.9" rx="16.7" ry="5.1" transform="rotate(65 248.5 342.9)" fill="#c84a18" opacity="0.38"/><ellipse cx="119.3" cy="66.0" rx="9.8" ry="4.2" transform="rotate(65 119.3 66.0)" fill="#080404" opacity="0.50"/><ellipse cx="304.8" cy="413.0" rx="14.1" ry="2.9" transform="rotate(58 304.8 413.0)" fill="#ff7a30" opacity="0.39"/><ellipse cx="167.1" cy="72.2" rx="17.6" ry="4.4" transform="rotate(61 167.1 72.2)" fill="#ff7a30" opacity="0.56"/><ellipse cx="194.1" cy="177.7" rx="9.1" ry="2.3" transform="rotate(59 194.1 177.7)" fill="#d85420" opacity="0.40"/><ellipse cx="298.2" cy="394.2" rx="15.6" ry="4.2" transform="rotate(64 298.2 394.2)" fill="#6a5a70" opacity="0.36"/><ellipse cx="130.1" cy="159.5" rx="11.1" ry="2.6" transform="rotate(61 130.1 159.5)" fill="#c84a18" opacity="0.55"/><ellipse cx="213.5" cy="283.9" rx="17.7" ry="5.0" transform="rotate(59 213.5 283.9)" fill="#6a5a70" opacity="0.45"/><ellipse cx="306.3" cy="407.5" rx="11.5" ry="3.5" transform="rotate(64 306.3 407.5)" fill="#080404" opacity="0.78"/><ellipse cx="96.6" cy="122.6" rx="13.2" ry="2.8" transform="rotate(65 96.6 122.6)" fill="#ffb020" opacity="0.78"/><ellipse cx="192.4" cy="161.4" rx="15.7" ry="4.7" transform="rotate(65 192.4 161.4)" fill="#f06828" opacity="0.40"/><ellipse cx="251.0" cy="343.5" rx="11.1" ry="2.4" transform="rotate(66 251.0 343.5)" fill="#d85420" opacity="0.39"/><ellipse cx="309.9" cy="276.0" rx="13.8" ry="3.1" transform="rotate(57 309.9 276.0)" fill="#f07030" opacity="0.68"/><ellipse cx="189.4" cy="243.9" rx="9.7" ry="4.3" transform="rotate(59 189.4 243.9)" fill="#080404" opacity="0.76"/><ellipse cx="314.7" cy="359.6" rx="12.5" ry="3.7" transform="rotate(59 314.7 359.6)" fill="#080404" opacity="0.83"/><ellipse cx="237.5" cy="355.0" rx="16.3" ry="4.1" transform="rotate(60 237.5 355.0)" fill="#f06828" opacity="0.51"/><ellipse cx="223.0" cy="245.8" rx="16.5" ry="4.9" transform="rotate(59 223.0 245.8)" fill="#f06828" opacity="0.67"/><ellipse cx="252.1" cy="283.0" rx="11.5" ry="4.3" transform="rotate(63 252.1 283.0)" fill="#080404" opacity="0.77"/><ellipse cx="224.9" cy="144.9" rx="10.0" ry="3.0" transform="rotate(62 224.9 144.9)" fill="#544c62" opacity="0.30"/><ellipse cx="209.7" cy="128.0" rx="18.0" ry="5.3" transform="rotate(62 209.7 128.0)" fill="#ff7a30" opacity="0.46"/><ellipse cx="183.6" cy="201.0" rx="12.0" ry="2.5" transform="rotate(59 183.6 201.0)" fill="#d85420" opacity="0.66"/><ellipse cx="200.9" cy="175.3" rx="10.2" ry="2.7" transform="rotate(67 200.9 175.3)" fill="#e85a20" opacity="0.69"/><ellipse cx="189.6" cy="358.1" rx="15.7" ry="3.8" transform="rotate(60 189.6 358.1)" fill="#544c62" opacity="0.54"/><ellipse cx="240.3" cy="409.9" rx="12.4" ry="3.7" transform="rotate(64 240.3 409.9)" fill="#f07030" opacity="0.64"/><ellipse cx="139.8" cy="89.5" rx="9.2" ry="2.2" transform="rotate(63 139.8 89.5)" fill="#ffc030" opacity="0.72"/><ellipse cx="294.1" cy="425.4" rx="17.9" ry="5.1" transform="rotate(65 294.1 425.4)" fill="#e85a20" opacity="0.63"/><ellipse cx="116.5" cy="126.5" rx="15.8" ry="4.8" transform="rotate(64 116.5 126.5)" fill="#ffa020" opacity="0.46"/><ellipse cx="194.9" cy="362.9" rx="14.1" ry="3.1" transform="rotate(59 194.9 362.9)" fill="#3e3a4c" opacity="0.47"/><ellipse cx="335.8" cy="320.5" rx="10.2" ry="4.6" transform="rotate(60 335.8 320.5)" fill="#080404" opacity="0.69"/><ellipse cx="237.5" cy="426.6" rx="9.7" ry="2.7" transform="rotate(66 237.5 426.6)" fill="#f06828" opacity="0.64"/><ellipse cx="86.8" cy="74.4" rx="15.2" ry="3.1" transform="rotate(57 86.8 74.4)" fill="#ffa020" opacity="0.56"/><ellipse cx="271.8" cy="399.6" rx="9.7" ry="3.5" transform="rotate(65 271.8 399.6)" fill="#080404" opacity="0.82"/><ellipse cx="240.3" cy="299.7" rx="10.7" ry="3.4" transform="rotate(58 240.3 299.7)" fill="#d85420" opacity="0.62"/><ellipse cx="191.8" cy="368.0" rx="9.3" ry="1.9" transform="rotate(66 191.8 368.0)" fill="#a84818" opacity="0.31"/><ellipse cx="146.9" cy="186.0" rx="15.7" ry="3.2" transform="rotate(60 146.9 186.0)" fill="#f07030" opacity="0.59"/><ellipse cx="243.6" cy="167.5" rx="9.4" ry="2.4" transform="rotate(64 243.6 167.5)" fill="#c85a20" opacity="0.22"/><ellipse cx="179.1" cy="113.1" rx="17.9" ry="3.7" transform="rotate(59 179.1 113.1)" fill="#c84a18" opacity="0.69"/><ellipse cx="192.2" cy="120.6" rx="9.5" ry="3.2" transform="rotate(59 192.2 120.6)" fill="#080404" opacity="0.72"/><ellipse cx="186.5" cy="201.0" rx="11.6" ry="3.6" transform="rotate(66 186.5 201.0)" fill="#f06828" opacity="0.58"/><ellipse cx="267.1" cy="429.7" rx="15.2" ry="4.4" transform="rotate(65 267.1 429.7)" fill="#f06828" opacity="0.46"/><ellipse cx="162.6" cy="167.2" rx="11.6" ry="3.7" transform="rotate(60 162.6 167.2)" fill="#f06828" opacity="0.61"/><ellipse cx="154.0" cy="281.4" rx="10.0" ry="2.2" transform="rotate(66 154.0 281.4)" fill="#3e3a4c" opacity="0.52"/><ellipse cx="163.5" cy="362.3" rx="16.8" ry="4.0" transform="rotate(61 163.5 362.3)" fill="#4a4458" opacity="0.52"/><ellipse cx="192.7" cy="201.8" rx="10.1" ry="2.3" transform="rotate(64 192.7 201.8)" fill="#ff7a30" opacity="0.68"/><ellipse cx="145.0" cy="302.8" rx="17.5" ry="5.3" transform="rotate(64 145.0 302.8)" fill="#3e3a4c" opacity="0.37"/><ellipse cx="317.2" cy="311.8" rx="16.7" ry="4.3" transform="rotate(64 317.2 311.8)" fill="#f06828" opacity="0.63"/><ellipse cx="265.3" cy="422.3" rx="10.5" ry="3.1" transform="rotate(63 265.3 422.3)" fill="#ff7a30" opacity="0.46"/><ellipse cx="159.5" cy="231.0" rx="12.8" ry="2.9" transform="rotate(58 159.5 231.0)" fill="#3e3a4c" opacity="0.39"/><ellipse cx="161.6" cy="83.0" rx="11.5" ry="3.6" transform="rotate(57 161.6 83.0)" fill="#f06828" opacity="0.45"/><ellipse cx="260.8" cy="145.6" rx="11.7" ry="2.6" transform="rotate(64 260.8 145.6)" fill="#c85a20" opacity="0.22"/><ellipse cx="142.6" cy="100.1" rx="15.3" ry="3.8" transform="rotate(62 142.6 100.1)" fill="#ffb020" opacity="0.66"/><ellipse cx="208.0" cy="235.0" rx="10.5" ry="2.6" transform="rotate(62 208.0 235.0)" fill="#f06828" opacity="0.49"/><ellipse cx="255.5" cy="240.8" rx="9.3" ry="2.7" transform="rotate(64 255.5 240.8)" fill="#d85420" opacity="0.54"/><ellipse cx="211.0" cy="170.1" rx="12.3" ry="3.5" transform="rotate(65 211.0 170.1)" fill="#080404" opacity="0.65"/><ellipse cx="340.3" cy="416.2" rx="10.6" ry="2.4" transform="rotate(64 340.3 416.2)" fill="#ff7a30" opacity="0.44"/><ellipse cx="239.5" cy="411.9" rx="11.4" ry="3.6" transform="rotate(58 239.5 411.9)" fill="#6a6078" opacity="0.46"/><ellipse cx="320.1" cy="385.3" rx="10.6" ry="2.7" transform="rotate(59 320.1 385.3)" fill="#5c5468" opacity="0.40"/><ellipse cx="270.7" cy="398.5" rx="12.1" ry="3.0" transform="rotate(61 270.7 398.5)" fill="#f07030" opacity="0.36"/><ellipse cx="190.2" cy="113.0" rx="16.5" ry="5.3" transform="rotate(59 190.2 113.0)" fill="#f06828" opacity="0.57"/><ellipse cx="291.1" cy="426.6" rx="14.6" ry="3.9" transform="rotate(67 291.1 426.6)" fill="#544a60" opacity="0.48"/><ellipse cx="258.6" cy="326.8" rx="10.1" ry="3.1" transform="rotate(63 258.6 326.8)" fill="#6a6078" opacity="0.49"/><ellipse cx="216.0" cy="289.0" rx="6.9" ry="3.1" transform="rotate(57 216.0 289.0)" fill="#080404" opacity="0.56"/><ellipse cx="216.5" cy="294.5" rx="11.8" ry="3.5" transform="rotate(61 216.5 294.5)" fill="#080404" opacity="0.80"/><ellipse cx="266.2" cy="329.5" rx="11.2" ry="2.7" transform="rotate(58 266.2 329.5)" fill="#ff7a30" opacity="0.55"/><ellipse cx="89.3" cy="73.6" rx="9.8" ry="2.2" transform="rotate(59 89.3 73.6)" fill="#e87818" opacity="0.48"/><ellipse cx="248.9" cy="290.1" rx="10.7" ry="2.2" transform="rotate(66 248.9 290.1)" fill="#f07030" opacity="0.37"/><ellipse cx="183.8" cy="106.8" rx="10.2" ry="3.2" transform="rotate(65 183.8 106.8)" fill="#ff7a30" opacity="0.40"/><ellipse cx="303.6" cy="294.3" rx="11.4" ry="3.6" transform="rotate(62 303.6 294.3)" fill="#e85a20" opacity="0.41"/><ellipse cx="316.3" cy="379.5" rx="13.3" ry="2.8" transform="rotate(62 316.3 379.5)" fill="#c84a18" opacity="0.41"/><ellipse cx="194.6" cy="366.2" rx="9.8" ry="2.8" transform="rotate(64 194.6 366.2)" fill="#544c62" opacity="0.41"/><ellipse cx="237.4" cy="330.8" rx="12.2" ry="3.1" transform="rotate(66 237.4 330.8)" fill="#d85420" opacity="0.46"/><ellipse cx="175.2" cy="356.7" rx="11.9" ry="2.6" transform="rotate(66 175.2 356.7)" fill="#3e3a4c" opacity="0.49"/><ellipse cx="129.2" cy="106.0" rx="13.9" ry="2.9" transform="rotate(62 129.2 106.0)" fill="#ffa020" opacity="0.48"/><ellipse cx="285.9" cy="391.7" rx="8.4" ry="3.8" transform="rotate(61 285.9 391.7)" fill="#080404" opacity="0.64"/><ellipse cx="206.4" cy="173.2" rx="12.3" ry="2.7" transform="rotate(58 206.4 173.2)" fill="#ff7a30" opacity="0.40"/><ellipse cx="298.2" cy="377.2" rx="9.7" ry="3.2" transform="rotate(66 298.2 377.2)" fill="#080404" opacity="0.74"/><ellipse cx="235.6" cy="285.1" rx="10.2" ry="2.4" transform="rotate(64 235.6 285.1)" fill="#f06828" opacity="0.51"/><ellipse cx="274.6" cy="392.4" rx="17.7" ry="5.5" transform="rotate(65 274.6 392.4)" fill="#6a5a70" opacity="0.31"/><ellipse cx="148.7" cy="91.0" rx="13.9" ry="3.6" transform="rotate(57 148.7 91.0)" fill="#f06828" opacity="0.53"/><ellipse cx="237.9" cy="264.7" rx="9.7" ry="2.3" transform="rotate(62 237.9 264.7)" fill="#ff7a30" opacity="0.45"/><ellipse cx="155.4" cy="71.0" rx="17.6" ry="3.9" transform="rotate(57 155.4 71.0)" fill="#f07030" opacity="0.65"/><ellipse cx="203.8" cy="130.6" rx="8.2" ry="2.9" transform="rotate(62 203.8 130.6)" fill="#080404" opacity="0.84"/><ellipse cx="164.1" cy="88.7" rx="10.0" ry="2.9" transform="rotate(66 164.1 88.7)" fill="#080404" opacity="0.59"/><ellipse cx="265.6" cy="418.2" rx="12.9" ry="3.2" transform="rotate(67 265.6 418.2)" fill="#6a6078" opacity="0.31"/><ellipse cx="217.0" cy="220.5" rx="11.0" ry="4.4" transform="rotate(62 217.0 220.5)" fill="#080404" opacity="0.57"/><ellipse cx="322.8" cy="407.0" rx="11.6" ry="2.5" transform="rotate(65 322.8 407.0)" fill="#ff7a30" opacity="0.44"/><ellipse cx="304.2" cy="376.5" rx="16.5" ry="3.8" transform="rotate(62 304.2 376.5)" fill="#e85a20" opacity="0.51"/><ellipse cx="267.5" cy="430.1" rx="11.5" ry="4.7" transform="rotate(62 267.5 430.1)" fill="#080404" opacity="0.74"/><ellipse cx="273.5" cy="180.6" rx="10.3" ry="2.2" transform="rotate(60 273.5 180.6)" fill="#a84818" opacity="0.25"/><ellipse cx="165.1" cy="287.7" rx="17.3" ry="5.4" transform="rotate(61 165.1 287.7)" fill="#a84818" opacity="0.24"/><ellipse cx="96.7" cy="73.0" rx="9.0" ry="2.7" transform="rotate(62 96.7 73.0)" fill="#ffa020" opacity="0.64"/><ellipse cx="295.0" cy="316.2" rx="9.6" ry="1.9" transform="rotate(57 295.0 316.2)" fill="#ff7a30" opacity="0.61"/><ellipse cx="107.5" cy="128.6" rx="14.2" ry="4.3" transform="rotate(59 107.5 128.6)" fill="#ff9a18" opacity="0.73"/><ellipse cx="153.5" cy="232.5" rx="12.1" ry="3.5" transform="rotate(61 153.5 232.5)" fill="#a84818" opacity="0.36"/><ellipse cx="194.7" cy="379.2" rx="9.7" ry="2.9" transform="rotate(60 194.7 379.2)" fill="#a84818" opacity="0.38"/><ellipse cx="228.0" cy="128.6" rx="9.4" ry="2.7" transform="rotate(61 228.0 128.6)" fill="#6a5a70" opacity="0.31"/><ellipse cx="152.4" cy="225.7" rx="11.2" ry="3.2" transform="rotate(66 152.4 225.7)" fill="#3e3a4c" opacity="0.52"/><ellipse cx="166.7" cy="105.4" rx="6.4" ry="2.2" transform="rotate(67 166.7 105.4)" fill="#080404" opacity="0.78"/><ellipse cx="129.2" cy="119.6" rx="17.1" ry="4.6" transform="rotate(59 129.2 119.6)" fill="#ffb020" opacity="0.60"/><ellipse cx="160.6" cy="88.1" rx="11.6" ry="2.5" transform="rotate(63 160.6 88.1)" fill="#e85a20" opacity="0.40"/><ellipse cx="155.7" cy="290.8" rx="15.3" ry="4.8" transform="rotate(64 155.7 290.8)" fill="#3e3a4c" opacity="0.33"/><ellipse cx="190.3" cy="100.5" rx="11.4" ry="2.8" transform="rotate(67 190.3 100.5)" fill="#c84a18" opacity="0.37"/><ellipse cx="115.9" cy="117.1" rx="16.2" ry="4.5" transform="rotate(65 115.9 117.1)" fill="#ffb020" opacity="0.75"/><ellipse cx="228.2" cy="283.5" rx="9.8" ry="2.6" transform="rotate(58 228.2 283.5)" fill="#e85a20" opacity="0.42"/><ellipse cx="198.3" cy="225.5" rx="9.0" ry="2.3" transform="rotate(64 198.3 225.5)" fill="#ff7a30" opacity="0.66"/><ellipse cx="189.8" cy="97.4" rx="10.9" ry="2.2" transform="rotate(66 189.8 97.4)" fill="#d85420" opacity="0.66"/><ellipse cx="272.4" cy="403.0" rx="9.8" ry="2.9" transform="rotate(64 272.4 403.0)" fill="#080404" opacity="0.62"/><ellipse cx="163.9" cy="108.4" rx="11.1" ry="4.9" transform="rotate(58 163.9 108.4)" fill="#080404" opacity="0.59"/><ellipse cx="164.0" cy="232.7" rx="14.4" ry="4.2" transform="rotate(62 164.0 232.7)" fill="#c85a20" opacity="0.27"/><ellipse cx="316.8" cy="398.0" rx="12.7" ry="3.6" transform="rotate(58 316.8 398.0)" fill="#e85a20" opacity="0.68"/><ellipse cx="145.7" cy="259.8" rx="14.8" ry="3.4" transform="rotate(57 145.7 259.8)" fill="#3e3a4c" opacity="0.33"/><ellipse cx="265.3" cy="310.2" rx="11.7" ry="2.6" transform="rotate(64 265.3 310.2)" fill="#f06828" opacity="0.56"/><ellipse cx="124.4" cy="177.6" rx="10.1" ry="2.5" transform="rotate(64 124.4 177.6)" fill="#f07030" opacity="0.61"/><ellipse cx="96.4" cy="87.7" rx="10.1" ry="2.7" transform="rotate(65 96.4 87.7)" fill="#ffb020" opacity="0.82"/><ellipse cx="300.1" cy="336.9" rx="10.4" ry="2.9" transform="rotate(65 300.1 336.9)" fill="#c84a18" opacity="0.47"/><ellipse cx="267.4" cy="311.0" rx="10.9" ry="2.6" transform="rotate(61 267.4 311.0)" fill="#e85a20" opacity="0.53"/><ellipse cx="203.8" cy="408.5" rx="16.5" ry="3.4" transform="rotate(58 203.8 408.5)" fill="#c84a18" opacity="0.66"/><ellipse cx="279.1" cy="198.4" rx="16.1" ry="3.2" transform="rotate(62 279.1 198.4)" fill="#544c62" opacity="0.54"/><ellipse cx="274.4" cy="173.1" rx="17.4" ry="5.1" transform="rotate(61 274.4 173.1)" fill="#4a4458" opacity="0.51"/><ellipse cx="209.7" cy="134.6" rx="9.3" ry="3.1" transform="rotate(59 209.7 134.6)" fill="#080404" opacity="0.77"/><ellipse cx="146.7" cy="158.5" rx="10.5" ry="3.3" transform="rotate(67 146.7 158.5)" fill="#080404" opacity="0.76"/><ellipse cx="120.8" cy="131.0" rx="9.6" ry="2.7" transform="rotate(60 120.8 131.0)" fill="#e87818" opacity="0.77"/><ellipse cx="158.3" cy="335.7" rx="14.2" ry="3.8" transform="rotate(61 158.3 335.7)" fill="#4a4458" opacity="0.41"/><ellipse cx="148.8" cy="85.7" rx="10.5" ry="2.4" transform="rotate(59 148.8 85.7)" fill="#f06828" opacity="0.68"/><ellipse cx="315.2" cy="406.7" rx="9.6" ry="2.4" transform="rotate(63 315.2 406.7)" fill="#5c5468" opacity="0.39"/><ellipse cx="276.3" cy="192.9" rx="16.9" ry="3.9" transform="rotate(63 276.3 192.9)" fill="#a84818" opacity="0.34"/><ellipse cx="256.5" cy="397.9" rx="14.8" ry="3.3" transform="rotate(62 256.5 397.9)" fill="#ff7a30" opacity="0.59"/><ellipse cx="168.3" cy="333.7" rx="16.1" ry="3.9" transform="rotate(64 168.3 333.7)" fill="#4a4458" opacity="0.54"/><ellipse cx="165.8" cy="73.2" rx="17.1" ry="3.9" transform="rotate(61 165.8 73.2)" fill="#f07030" opacity="0.68"/><ellipse cx="160.9" cy="163.9" rx="9.5" ry="2.0" transform="rotate(59 160.9 163.9)" fill="#d85420" opacity="0.60"/><ellipse cx="299.1" cy="316.7" rx="10.8" ry="2.4" transform="rotate(64 299.1 316.7)" fill="#c84a18" opacity="0.58"/><ellipse cx="315.8" cy="333.5" rx="16.1" ry="4.3" transform="rotate(59 315.8 333.5)" fill="#f07030" opacity="0.64"/><ellipse cx="183.9" cy="367.9" rx="16.8" ry="5.2" transform="rotate(59 183.9 367.9)" fill="#4a4458" opacity="0.53"/><ellipse cx="201.1" cy="326.8" rx="8.6" ry="3.4" transform="rotate(66 201.1 326.8)" fill="#080404" opacity="0.64"/><ellipse cx="233.5" cy="356.5" rx="13.1" ry="3.4" transform="rotate(59 233.5 356.5)" fill="#f07030" opacity="0.39"/><ellipse cx="229.7" cy="118.3" rx="15.1" ry="3.4" transform="rotate(60 229.7 118.3)" fill="#f07030" opacity="0.60"/><ellipse cx="341.8" cy="355.8" rx="12.8" ry="3.7" transform="rotate(66 341.8 355.8)" fill="#f07030" opacity="0.62"/><ellipse cx="237.8" cy="338.5" rx="10.9" ry="3.1" transform="rotate(64 237.8 338.5)" fill="#d85420" opacity="0.53"/><ellipse cx="167.7" cy="343.8" rx="13.0" ry="2.6" transform="rotate(59 167.7 343.8)" fill="#a84818" opacity="0.32"/><ellipse cx="147.9" cy="284.1" rx="12.1" ry="2.9" transform="rotate(62 147.9 284.1)" fill="#c85a20" opacity="0.23"/><ellipse cx="317.5" cy="320.9" rx="16.8" ry="3.8" transform="rotate(64 317.5 320.9)" fill="#544a60" opacity="0.39"/><ellipse cx="241.8" cy="361.3" rx="14.1" ry="4.1" transform="rotate(62 241.8 361.3)" fill="#ff7a30" opacity="0.53"/><ellipse cx="255.1" cy="168.4" rx="15.4" ry="4.2" transform="rotate(66 255.1 168.4)" fill="#3e3a4c" opacity="0.43"/><ellipse cx="272.8" cy="169.9" rx="9.6" ry="2.1" transform="rotate(62 272.8 169.9)" fill="#544c62" opacity="0.38"/><ellipse cx="118.3" cy="122.0" rx="12.7" ry="4.0" transform="rotate(62 118.3 122.0)" fill="#ffc030" opacity="0.52"/><ellipse cx="292.0" cy="331.2" rx="17.9" ry="4.3" transform="rotate(61 292.0 331.2)" fill="#544a60" opacity="0.37"/><ellipse cx="249.4" cy="316.2" rx="15.5" ry="4.0" transform="rotate(59 249.4 316.2)" fill="#f06828" opacity="0.50"/><ellipse cx="149.5" cy="104.1" rx="12.3" ry="3.9" transform="rotate(60 149.5 104.1)" fill="#ffb020" opacity="0.83"/><ellipse cx="198.0" cy="146.8" rx="11.9" ry="3.5" transform="rotate(64 198.0 146.8)" fill="#d85420" opacity="0.44"/><ellipse cx="332.8" cy="416.4" rx="15.9" ry="3.8" transform="rotate(63 332.8 416.4)" fill="#f07030" opacity="0.51"/><ellipse cx="176.0" cy="189.8" rx="12.0" ry="2.6" transform="rotate(61 176.0 189.8)" fill="#ff7a30" opacity="0.60"/><ellipse cx="303.0" cy="403.5" rx="16.7" ry="4.4" transform="rotate(65 303.0 403.5)" fill="#c84a18" opacity="0.51"/><ellipse cx="127.2" cy="248.5" rx="12.2" ry="2.7" transform="rotate(59 127.2 248.5)" fill="#3e3a4c" opacity="0.32"/><ellipse cx="297.6" cy="342.5" rx="9.5" ry="2.0" transform="rotate(62 297.6 342.5)" fill="#f06828" opacity="0.55"/><ellipse cx="293.8" cy="347.9" rx="12.0" ry="4.6" transform="rotate(61 293.8 347.9)" fill="#080404" opacity="0.80"/><ellipse cx="245.2" cy="368.5" rx="15.2" ry="3.5" transform="rotate(65 245.2 368.5)" fill="#d85420" opacity="0.67"/><ellipse cx="147.0" cy="298.9" rx="12.7" ry="2.9" transform="rotate(65 147.0 298.9)" fill="#544c62" opacity="0.45"/><ellipse cx="261.8" cy="166.9" rx="15.4" ry="3.7" transform="rotate(60 261.8 166.9)" fill="#544c62" opacity="0.33"/><ellipse cx="298.5" cy="370.5" rx="10.4" ry="2.8" transform="rotate(66 298.5 370.5)" fill="#6a5a70" opacity="0.32"/><ellipse cx="232.0" cy="139.3" rx="16.5" ry="5.0" transform="rotate(58 232.0 139.3)" fill="#4a4458" opacity="0.42"/><ellipse cx="201.3" cy="186.4" rx="11.5" ry="2.9" transform="rotate(60 201.3 186.4)" fill="#f07030" opacity="0.59"/><ellipse cx="171.0" cy="200.6" rx="9.3" ry="2.2" transform="rotate(63 171.0 200.6)" fill="#ff7a30" opacity="0.54"/><ellipse cx="238.7" cy="414.1" rx="10.2" ry="2.7" transform="rotate(64 238.7 414.1)" fill="#d85420" opacity="0.40"/><ellipse cx="229.3" cy="380.3" rx="18.0" ry="4.8" transform="rotate(62 229.3 380.3)" fill="#f07030" opacity="0.38"/><ellipse cx="117.2" cy="138.4" rx="16.3" ry="4.4" transform="rotate(65 117.2 138.4)" fill="#ffc030" opacity="0.64"/><ellipse cx="242.8" cy="133.0" rx="14.5" ry="3.5" transform="rotate(60 242.8 133.0)" fill="#c84a18" opacity="0.42"/><ellipse cx="172.4" cy="383.8" rx="12.3" ry="2.5" transform="rotate(63 172.4 383.8)" fill="#c85a20" opacity="0.43"/><ellipse cx="103.7" cy="72.3" rx="11.7" ry="3.1" transform="rotate(66 103.7 72.3)" fill="#ffc030" opacity="0.76"/><ellipse cx="221.3" cy="368.8" rx="11.0" ry="2.2" transform="rotate(62 221.3 368.8)" fill="#e85a20" opacity="0.38"/><ellipse cx="300.6" cy="297.3" rx="16.7" ry="3.7" transform="rotate(60 300.6 297.3)" fill="#d85420" opacity="0.59"/><ellipse cx="210.9" cy="231.5" rx="15.4" ry="4.5" transform="rotate(66 210.9 231.5)" fill="#c84a18" opacity="0.59"/><ellipse cx="265.0" cy="325.5" rx="13.7" ry="3.4" transform="rotate(63 265.0 325.5)" fill="#544a60" opacity="0.48"/><ellipse cx="295.1" cy="404.9" rx="9.7" ry="2.1" transform="rotate(60 295.1 404.9)" fill="#d85420" opacity="0.45"/><ellipse cx="138.6" cy="267.0" rx="12.1" ry="3.0" transform="rotate(66 138.6 267.0)" fill="#4a4458" opacity="0.38"/><ellipse cx="324.4" cy="415.3" rx="13.1" ry="3.7" transform="rotate(61 324.4 415.3)" fill="#f07030" opacity="0.57"/><ellipse cx="155.6" cy="170.3" rx="9.8" ry="2.9" transform="rotate(61 155.6 170.3)" fill="#ff7a30" opacity="0.48"/><ellipse cx="210.5" cy="116.8" rx="10.4" ry="4.6" transform="rotate(64 210.5 116.8)" fill="#080404" opacity="0.75"/><ellipse cx="174.6" cy="193.2" rx="13.3" ry="2.9" transform="rotate(61 174.6 193.2)" fill="#f06828" opacity="0.62"/><ellipse cx="188.7" cy="155.6" rx="10.2" ry="2.2" transform="rotate(62 188.7 155.6)" fill="#f07030" opacity="0.47"/><ellipse cx="193.2" cy="301.8" rx="17.5" ry="3.7" transform="rotate(57 193.2 301.8)" fill="#5c5468" opacity="0.49"/><ellipse cx="161.0" cy="204.1" rx="16.8" ry="3.9" transform="rotate(58 161.0 204.1)" fill="#f07030" opacity="0.55"/><ellipse cx="192.0" cy="308.0" rx="12.4" ry="3.0" transform="rotate(63 192.0 308.0)" fill="#ff7a30" opacity="0.52"/><ellipse cx="157.4" cy="374.0" rx="10.4" ry="2.9" transform="rotate(58 157.4 374.0)" fill="#a84818" opacity="0.29"/><ellipse cx="247.2" cy="270.8" rx="11.1" ry="4.7" transform="rotate(63 247.2 270.8)" fill="#080404" opacity="0.66"/><ellipse cx="133.1" cy="173.8" rx="9.2" ry="2.9" transform="rotate(64 133.1 173.8)" fill="#f07030" opacity="0.60"/><ellipse cx="155.3" cy="97.0" rx="9.8" ry="2.2" transform="rotate(60 155.3 97.0)" fill="#c84a18" opacity="0.60"/><ellipse cx="100.2" cy="112.8" rx="14.9" ry="4.5" transform="rotate(63 100.2 112.8)" fill="#e87818" opacity="0.76"/><ellipse cx="145.7" cy="280.9" rx="17.5" ry="4.1" transform="rotate(64 145.7 280.9)" fill="#4a4458" opacity="0.36"/><ellipse cx="303.3" cy="413.7" rx="12.0" ry="3.2" transform="rotate(65 303.3 413.7)" fill="#c84a18" opacity="0.63"/><ellipse cx="282.8" cy="398.5" rx="12.0" ry="5.4" transform="rotate(66 282.8 398.5)" fill="#080404" opacity="0.59"/><ellipse cx="124.4" cy="139.2" rx="9.2" ry="2.7" transform="rotate(62 124.4 139.2)" fill="#ff9a18" opacity="0.64"/><ellipse cx="315.6" cy="405.3" rx="15.6" ry="4.9" transform="rotate(67 315.6 405.3)" fill="#f06828" opacity="0.43"/><ellipse cx="189.9" cy="196.9" rx="13.0" ry="3.2" transform="rotate(60 189.9 196.9)" fill="#5c5468" opacity="0.40"/><ellipse cx="182.9" cy="307.0" rx="14.8" ry="4.2" transform="rotate(66 182.9 307.0)" fill="#c84a18" opacity="0.38"/><ellipse cx="158.9" cy="181.5" rx="11.4" ry="2.6" transform="rotate(63 158.9 181.5)" fill="#e85a20" opacity="0.39"/><ellipse cx="181.6" cy="199.7" rx="9.1" ry="2.4" transform="rotate(62 181.6 199.7)" fill="#f07030" opacity="0.69"/><ellipse cx="280.3" cy="334.0" rx="17.5" ry="5.5" transform="rotate(64 280.3 334.0)" fill="#d85420" opacity="0.38"/><ellipse cx="240.0" cy="416.7" rx="11.1" ry="3.3" transform="rotate(59 240.0 416.7)" fill="#f06828" opacity="0.63"/><ellipse cx="227.9" cy="335.4" rx="9.6" ry="2.3" transform="rotate(57 227.9 335.4)" fill="#c84a18" opacity="0.63"/><ellipse cx="221.7" cy="175.6" rx="9.7" ry="2.0" transform="rotate(61 221.7 175.6)" fill="#d85420" opacity="0.58"/><ellipse cx="236.5" cy="140.0" rx="17.5" ry="3.7" transform="rotate(66 236.5 140.0)" fill="#3e3a4c" opacity="0.50"/><ellipse cx="117.4" cy="125.3" rx="17.4" ry="4.7" transform="rotate(61 117.4 125.3)" fill="#ffa020" opacity="0.57"/><ellipse cx="202.9" cy="325.9" rx="17.8" ry="3.7" transform="rotate(60 202.9 325.9)" fill="#6a5a70" opacity="0.38"/><ellipse cx="124.1" cy="146.6" rx="14.9" ry="4.7" transform="rotate(65 124.1 146.6)" fill="#f06828" opacity="0.65"/><ellipse cx="326.5" cy="406.9" rx="13.5" ry="3.3" transform="rotate(59 326.5 406.9)" fill="#544a60" opacity="0.45"/><ellipse cx="249.5" cy="162.0" rx="9.5" ry="2.4" transform="rotate(63 249.5 162.0)" fill="#4a4458" opacity="0.47"/><ellipse cx="158.6" cy="243.7" rx="10.2" ry="2.6" transform="rotate(60 158.6 243.7)" fill="#3e3a4c" opacity="0.40"/><ellipse cx="256.8" cy="251.7" rx="12.7" ry="2.9" transform="rotate(63 256.8 251.7)" fill="#c84a18" opacity="0.40"/><ellipse cx="210.6" cy="283.9" rx="11.0" ry="4.6" transform="rotate(63 210.6 283.9)" fill="#080404" opacity="0.70"/><ellipse cx="177.5" cy="271.0" rx="15.2" ry="3.9" transform="rotate(63 177.5 271.0)" fill="#544a60" opacity="0.33"/><ellipse cx="238.2" cy="413.4" rx="9.8" ry="2.1" transform="rotate(62 238.2 413.4)" fill="#d85420" opacity="0.42"/><ellipse cx="286.9" cy="408.6" rx="14.4" ry="3.7" transform="rotate(59 286.9 408.6)" fill="#c84a18" opacity="0.59"/><ellipse cx="178.0" cy="349.7" rx="14.0" ry="3.1" transform="rotate(60 178.0 349.7)" fill="#544c62" opacity="0.44"/><ellipse cx="202.9" cy="426.6" rx="9.4" ry="2.4" transform="rotate(60 202.9 426.6)" fill="#544c62" opacity="0.50"/><ellipse cx="258.5" cy="237.0" rx="16.1" ry="3.4" transform="rotate(63 258.5 237.0)" fill="#f07030" opacity="0.71"/><ellipse cx="150.0" cy="169.9" rx="9.6" ry="2.3" transform="rotate(58 150.0 169.9)" fill="#d85420" opacity="0.51"/><ellipse cx="176.6" cy="196.7" rx="14.5" ry="2.9" transform="rotate(62 176.6 196.7)" fill="#e85a20" opacity="0.54"/><ellipse cx="270.6" cy="277.0" rx="16.8" ry="4.7" transform="rotate(57 270.6 277.0)" fill="#6a5a70" opacity="0.41"/><ellipse cx="251.4" cy="259.5" rx="14.2" ry="3.9" transform="rotate(60 251.4 259.5)" fill="#5c5468" opacity="0.33"/><ellipse cx="241.6" cy="246.4" rx="15.5" ry="3.3" transform="rotate(65 241.6 246.4)" fill="#ff7a30" opacity="0.68"/><ellipse cx="98.7" cy="134.6" rx="11.1" ry="2.5" transform="rotate(67 98.7 134.6)" fill="#ffc030" opacity="0.53"/><ellipse cx="287.6" cy="424.1" rx="17.3" ry="5.2" transform="rotate(60 287.6 424.1)" fill="#c84a18" opacity="0.69"/><ellipse cx="132.2" cy="175.8" rx="10.0" ry="2.3" transform="rotate(57 132.2 175.8)" fill="#d85420" opacity="0.42"/><ellipse cx="177.2" cy="209.2" rx="9.5" ry="2.9" transform="rotate(64 177.2 209.2)" fill="#d85420" opacity="0.52"/><ellipse cx="160.8" cy="340.2" rx="10.7" ry="2.7" transform="rotate(58 160.8 340.2)" fill="#544c62" opacity="0.50"/><ellipse cx="145.7" cy="225.8" rx="9.1" ry="2.6" transform="rotate(59 145.7 225.8)" fill="#544c62" opacity="0.33"/><ellipse cx="257.1" cy="426.4" rx="9.8" ry="4.4" transform="rotate(64 257.1 426.4)" fill="#080404" opacity="0.69"/><ellipse cx="273.3" cy="266.5" rx="10.8" ry="2.7" transform="rotate(66 273.3 266.5)" fill="#f07030" opacity="0.50"/><ellipse cx="288.3" cy="214.9" rx="11.7" ry="2.7" transform="rotate(65 288.3 214.9)" fill="#4a4458" opacity="0.35"/><ellipse cx="171.8" cy="82.7" rx="15.0" ry="3.8" transform="rotate(62 171.8 82.7)" fill="#f07030" opacity="0.62"/><ellipse cx="314.2" cy="347.5" rx="9.8" ry="3.0" transform="rotate(60 314.2 347.5)" fill="#ff7a30" opacity="0.43"/><ellipse cx="232.2" cy="306.4" rx="15.0" ry="4.2" transform="rotate(63 232.2 306.4)" fill="#6a5a70" opacity="0.41"/><ellipse cx="148.3" cy="182.1" rx="9.0" ry="2.6" transform="rotate(65 148.3 182.1)" fill="#080404" opacity="0.66"/><ellipse cx="214.8" cy="136.1" rx="17.5" ry="5.2" transform="rotate(66 214.8 136.1)" fill="#d85420" opacity="0.72"/><ellipse cx="168.6" cy="222.5" rx="15.4" ry="3.9" transform="rotate(64 168.6 222.5)" fill="#d85420" opacity="0.51"/><ellipse cx="136.2" cy="73.0" rx="14.9" ry="4.7" transform="rotate(62 136.2 73.0)" fill="#e85a20" opacity="0.65"/><ellipse cx="149.6" cy="264.5" rx="14.6" ry="3.5" transform="rotate(58 149.6 264.5)" fill="#544c62" opacity="0.45"/><ellipse cx="98.7" cy="81.6" rx="16.0" ry="4.4" transform="rotate(58 98.7 81.6)" fill="#ffb020" opacity="0.72"/><ellipse cx="111.0" cy="122.0" rx="17.0" ry="3.7" transform="rotate(65 111.0 122.0)" fill="#e87818" opacity="0.83"/><ellipse cx="145.8" cy="124.4" rx="15.5" ry="3.5" transform="rotate(61 145.8 124.4)" fill="#ffa020" opacity="0.82"/><ellipse cx="113.3" cy="121.8" rx="10.1" ry="3.2" transform="rotate(63 113.3 121.8)" fill="#ffa020" opacity="0.58"/><ellipse cx="195.5" cy="153.8" rx="10.5" ry="2.9" transform="rotate(58 195.5 153.8)" fill="#f06828" opacity="0.36"/><ellipse cx="198.5" cy="170.0" rx="10.4" ry="2.5" transform="rotate(60 198.5 170.0)" fill="#ff7a30" opacity="0.59"/><ellipse cx="167.2" cy="251.4" rx="13.7" ry="4.0" transform="rotate(64 167.2 251.4)" fill="#544c62" opacity="0.33"/><ellipse cx="200.1" cy="307.3" rx="16.8" ry="3.4" transform="rotate(61 200.1 307.3)" fill="#c84a18" opacity="0.69"/><ellipse cx="167.4" cy="219.1" rx="10.2" ry="3.2" transform="rotate(60 167.4 219.1)" fill="#f06828" opacity="0.67"/></g><polygon points="76,69 100,55 126,57 140,97 144,127 130,131 107,115 86,95" fill="#ffc820" opacity="0.95" filter="url(#b6)"/><g filter="url(#b4)"><ellipse cx="93.0" cy="72.0" rx="14.0" ry="9.0" transform="rotate(60 93.0 72.0)" fill="#fff040" opacity="0.95"/><ellipse cx="112.0" cy="92.0" rx="13.0" ry="8.0" transform="rotate(60 112.0 92.0)" fill="#ffe838" opacity="0.85"/><ellipse cx="104.0" cy="82.0" rx="10.0" ry="7.0" transform="rotate(60 104.0 82.0)" fill="#ffff60" opacity="0.70"/><ellipse cx="132.0" cy="117.0" rx="9.0" ry="6.0" transform="rotate(60 132.0 117.0)" fill="#e8d040" opacity="0.55"/><ellipse cx="149.0" cy="95.0" rx="9.0" ry="6.0" transform="rotate(60 149.0 95.0)" fill="#90a040" opacity="0.40"/></g><circle cx="65" cy="60" r="4" fill="none" stroke="#e0e0e0" stroke-width="1"/><circle cx="64" cy="60" r="1.8" fill="#fff"/><path d="M68 58 l4 2 l-1 5 z" fill="none" stroke="#c0c0c0" stroke-width="0.8"/></svg>
<div class="a" style="left:196px;top:92.5px;width:553px;height:415px;border:1px solid #8c8c8c"></div>
<div class="a" style="left:184px;top:534px;width:578px;height:159px;background:#fff;border-top:1px solid #716f64;border-left:1px solid #716f64"></div>
<div class="a" style="left:185px;top:535px;width:576px;height:148px;overflow:hidden"><div class="a" style="left:39.0px;top:0;width:1px;height:137px;background:#ebebf0"></div><div class="a" style="left:58.0px;top:0;width:1px;height:137px;background:#ebebf0"></div><div class="a" style="left:76.9px;top:0;width:1px;height:137px;background:#ebebf0"></div><div class="a" style="left:95.9px;top:0;width:1px;height:137px;background:#ebebf0"></div><div class="a" style="left:114.9px;top:0;width:1px;height:137px;background:#ebebf0"></div><div class="a" style="left:133.9px;top:0;width:1px;height:137px;background:#ebebf0"></div><div class="a" style="left:152.8px;top:0;width:1px;height:137px;background:#ebebf0"></div><div class="a" style="left:171.8px;top:0;width:1px;height:137px;background:#ebebf0"></div><div class="a" style="left:190.8px;top:0;width:1px;height:137px;background:#ebebf0"></div><div class="a" style="left:209.7px;top:0;width:1px;height:137px;background:#ebebf0"></div><div class="a" style="left:228.7px;top:0;width:1px;height:137px;background:#ebebf0"></div><div class="a" style="left:247.7px;top:0;width:1px;height:137px;background:#ebebf0"></div><div class="a" style="left:266.6px;top:0;width:1px;height:137px;background:#ebebf0"></div><div class="a" style="left:285.6px;top:0;width:1px;height:137px;background:#ebebf0"></div><div class="a" style="left:304.6px;top:0;width:1px;height:137px;background:#ebebf0"></div><div class="a" style="left:323.5px;top:0;width:1px;height:137px;background:#ebebf0"></div><div class="a" style="left:342.5px;top:0;width:1px;height:137px;background:#ebebf0"></div><div class="a" style="left:361.5px;top:0;width:1px;height:137px;background:#ebebf0"></div><div class="a" style="left:380.5px;top:0;width:1px;height:137px;background:#ebebf0"></div><div class="a" style="left:399.4px;top:0;width:1px;height:137px;background:#ebebf0"></div><div class="a" style="left:418.4px;top:0;width:1px;height:137px;background:#ebebf0"></div><div class="a" style="left:437.4px;top:0;width:1px;height:137px;background:#ebebf0"></div><div class="a" style="left:456.3px;top:0;width:1px;height:137px;background:#ebebf0"></div><div class="a" style="left:475.3px;top:0;width:1px;height:137px;background:#ebebf0"></div><div class="a" style="left:494.3px;top:0;width:1px;height:137px;background:#ebebf0"></div><div class="a" style="left:513.2px;top:0;width:1px;height:137px;background:#ebebf0"></div><div class="a" style="left:532.2px;top:0;width:1px;height:137px;background:#ebebf0"></div><div class="a" style="left:551.2px;top:0;width:1px;height:137px;background:#ebebf0"></div><div class="a" style="left:570.2px;top:0;width:1px;height:137px;background:#ebebf0"></div><div class="a" style="left:39px;top:-1.1px;width:560px;height:1px;background:#ebebf0"></div><div class="t" style="left:4px;width:30px;text-align:right;top:-8.0px;font-size:12px;line-height:14px;color:#111;transform-origin:100% 0;transform:scaleX(0.78)">180</div><div class="a" style="left:39px;top:10.0px;width:560px;height:1px;background:#ebebf0"></div><div class="t" style="left:4px;width:30px;text-align:right;top:3.1px;font-size:12px;line-height:14px;color:#111;transform-origin:100% 0;transform:scaleX(0.78)">170</div><div class="a" style="left:39px;top:21.1px;width:560px;height:1px;background:#ebebf0"></div><div class="t" style="left:4px;width:30px;text-align:right;top:14.2px;font-size:12px;line-height:14px;color:#111;transform-origin:100% 0;transform:scaleX(0.78)">160</div><div class="a" style="left:39px;top:32.2px;width:560px;height:1px;background:#ebebf0"></div><div class="t" style="left:4px;width:30px;text-align:right;top:25.3px;font-size:12px;line-height:14px;color:#111;transform-origin:100% 0;transform:scaleX(0.78)">150</div><div class="a" style="left:39px;top:43.3px;width:560px;height:1px;background:#ebebf0"></div><div class="t" style="left:4px;width:30px;text-align:right;top:36.4px;font-size:12px;line-height:14px;color:#111;transform-origin:100% 0;transform:scaleX(0.78)">140</div><div class="a" style="left:39px;top:54.4px;width:560px;height:1px;background:#ebebf0"></div><div class="t" style="left:4px;width:30px;text-align:right;top:47.5px;font-size:12px;line-height:14px;color:#111;transform-origin:100% 0;transform:scaleX(0.78)">130</div><div class="a" style="left:39px;top:65.5px;width:560px;height:1px;background:#ebebf0"></div><div class="t" style="left:4px;width:30px;text-align:right;top:58.6px;font-size:12px;line-height:14px;color:#111;transform-origin:100% 0;transform:scaleX(0.78)">120</div><div class="a" style="left:39px;top:76.5px;width:560px;height:1px;background:#ebebf0"></div><div class="t" style="left:4px;width:30px;text-align:right;top:69.6px;font-size:12px;line-height:14px;color:#111;transform-origin:100% 0;transform:scaleX(0.78)">110</div><div class="a" style="left:39px;top:87.6px;width:560px;height:1px;background:#ebebf0"></div><div class="t" style="left:4px;width:30px;text-align:right;top:80.7px;font-size:12px;line-height:14px;color:#111;transform-origin:100% 0;transform:scaleX(0.78)">100</div><div class="a" style="left:39px;top:98.7px;width:560px;height:1px;background:#ebebf0"></div><div class="t" style="left:4px;width:30px;text-align:right;top:91.8px;font-size:12px;line-height:14px;color:#111;transform-origin:100% 0;transform:scaleX(0.78)">90</div><div class="a" style="left:39px;top:109.8px;width:560px;height:1px;background:#ebebf0"></div><div class="t" style="left:4px;width:30px;text-align:right;top:102.9px;font-size:12px;line-height:14px;color:#111;transform-origin:100% 0;transform:scaleX(0.78)">80</div><div class="a" style="left:39px;top:120.9px;width:560px;height:1px;background:#ebebf0"></div><div class="t" style="left:4px;width:30px;text-align:right;top:114.0px;font-size:12px;line-height:14px;color:#111;transform-origin:100% 0;transform:scaleX(0.78)">70</div><div class="a" style="left:39px;top:132.0px;width:560px;height:1px;background:#ebebf0"></div><div class="t" style="left:4px;width:30px;text-align:right;top:125.1px;font-size:12px;line-height:14px;color:#111;transform-origin:100% 0;transform:scaleX(0.78)">60</div><div class="a" style="left:39px;top:24px;width:560px;height:2px;background:#606060"></div><div class="a" style="left:36px;top:22px;width:6px;height:5px;border:1.5px solid #e04040;background:#f8c0c0"></div><div class="a" style="left:55px;top:5px;width:28px;height:12px;border:1px solid #ececec"></div><div class="t" style="left:57px;top:5px;font-size:9.5px;color:#b0b0b0">Zoom</div><div class="a" style="left:126px;top:0;width:1px;height:135px;background:#e02020"></div><div class="t" style="left:24.0px;width:30px;text-align:center;top:134.60000000000002px;font-size:12px;line-height:14px;color:#111;transform-origin:50% 0;transform:scaleX(0.78)">1</div><div class="t" style="left:43.0px;width:30px;text-align:center;top:134.60000000000002px;font-size:12px;line-height:14px;color:#111;transform-origin:50% 0;transform:scaleX(0.78)">10</div><div class="t" style="left:61.9px;width:30px;text-align:center;top:134.60000000000002px;font-size:12px;line-height:14px;color:#111;transform-origin:50% 0;transform:scaleX(0.78)">20</div><div class="t" style="left:80.9px;width:30px;text-align:center;top:134.60000000000002px;font-size:12px;line-height:14px;color:#111;transform-origin:50% 0;transform:scaleX(0.78)">30</div><div class="t" style="left:99.9px;width:30px;text-align:center;top:134.60000000000002px;font-size:12px;line-height:14px;color:#111;transform-origin:50% 0;transform:scaleX(0.78)">40</div><div class="t" style="left:118.9px;width:30px;text-align:center;top:134.60000000000002px;font-size:12px;line-height:14px;color:#111;transform-origin:50% 0;transform:scaleX(0.78)">50</div><div class="t" style="left:137.8px;width:30px;text-align:center;top:134.60000000000002px;font-size:12px;line-height:14px;color:#111;transform-origin:50% 0;transform:scaleX(0.78)">60</div><div class="t" style="left:156.8px;width:30px;text-align:center;top:134.60000000000002px;font-size:12px;line-height:14px;color:#111;transform-origin:50% 0;transform:scaleX(0.78)">70</div><div class="t" style="left:175.8px;width:30px;text-align:center;top:134.60000000000002px;font-size:12px;line-height:14px;color:#111;transform-origin:50% 0;transform:scaleX(0.78)">80</div><div class="t" style="left:194.7px;width:30px;text-align:center;top:134.60000000000002px;font-size:12px;line-height:14px;color:#111;transform-origin:50% 0;transform:scaleX(0.78)">90</div><div class="t" style="left:213.7px;width:30px;text-align:center;top:134.60000000000002px;font-size:12px;line-height:14px;color:#111;transform-origin:50% 0;transform:scaleX(0.78)">100</div><div class="t" style="left:232.7px;width:30px;text-align:center;top:134.60000000000002px;font-size:12px;line-height:14px;color:#111;transform-origin:50% 0;transform:scaleX(0.78)">110</div><div class="t" style="left:251.6px;width:30px;text-align:center;top:134.60000000000002px;font-size:12px;line-height:14px;color:#111;transform-origin:50% 0;transform:scaleX(0.78)">120</div><div class="t" style="left:270.6px;width:30px;text-align:center;top:134.60000000000002px;font-size:12px;line-height:14px;color:#111;transform-origin:50% 0;transform:scaleX(0.78)">130</div><div class="t" style="left:289.6px;width:30px;text-align:center;top:134.60000000000002px;font-size:12px;line-height:14px;color:#111;transform-origin:50% 0;transform:scaleX(0.78)">140</div><div class="t" style="left:308.5px;width:30px;text-align:center;top:134.60000000000002px;font-size:12px;line-height:14px;color:#111;transform-origin:50% 0;transform:scaleX(0.78)">150</div><div class="t" style="left:327.5px;width:30px;text-align:center;top:134.60000000000002px;font-size:12px;line-height:14px;color:#111;transform-origin:50% 0;transform:scaleX(0.78)">160</div><div class="t" style="left:346.5px;width:30px;text-align:center;top:134.60000000000002px;font-size:12px;line-height:14px;color:#111;transform-origin:50% 0;transform:scaleX(0.78)">170</div><div class="t" style="left:365.5px;width:30px;text-align:center;top:134.60000000000002px;font-size:12px;line-height:14px;color:#111;transform-origin:50% 0;transform:scaleX(0.78)">180</div><div class="t" style="left:384.4px;width:30px;text-align:center;top:134.60000000000002px;font-size:12px;line-height:14px;color:#111;transform-origin:50% 0;transform:scaleX(0.78)">190</div><div class="t" style="left:403.4px;width:30px;text-align:center;top:134.60000000000002px;font-size:12px;line-height:14px;color:#111;transform-origin:50% 0;transform:scaleX(0.78)">200</div><div class="t" style="left:422.4px;width:30px;text-align:center;top:134.60000000000002px;font-size:12px;line-height:14px;color:#111;transform-origin:50% 0;transform:scaleX(0.78)">210</div><div class="t" style="left:441.3px;width:30px;text-align:center;top:134.60000000000002px;font-size:12px;line-height:14px;color:#111;transform-origin:50% 0;transform:scaleX(0.78)">220</div><div class="t" style="left:460.3px;width:30px;text-align:center;top:134.60000000000002px;font-size:12px;line-height:14px;color:#111;transform-origin:50% 0;transform:scaleX(0.78)">230</div><div class="t" style="left:479.3px;width:30px;text-align:center;top:134.60000000000002px;font-size:12px;line-height:14px;color:#111;transform-origin:50% 0;transform:scaleX(0.78)">240</div><div class="t" style="left:498.2px;width:30px;text-align:center;top:134.60000000000002px;font-size:12px;line-height:14px;color:#111;transform-origin:50% 0;transform:scaleX(0.78)">250</div><div class="t" style="left:517.2px;width:30px;text-align:center;top:134.60000000000002px;font-size:12px;line-height:14px;color:#111;transform-origin:50% 0;transform:scaleX(0.78)">260</div><div class="t" style="left:536.2px;width:30px;text-align:center;top:134.60000000000002px;font-size:12px;line-height:14px;color:#111;transform-origin:50% 0;transform:scaleX(0.78)">270</div><div class="t" style="left:555.2px;width:30px;text-align:center;top:134.60000000000002px;font-size:12px;line-height:14px;color:#111;transform-origin:50% 0;transform:scaleX(0.78)">280</div><div class="a" style="left:118px;top:135px;width:17px;height:12px;background:#fff;border:1px solid #d8d8d8"></div><div class="t" style="left:118px;width:17px;text-align:center;top:134.60000000000002px;font-size:12px;line-height:14px;color:#e02020;transform-origin:50% 0;transform:scaleX(0.78)">46</div></div>
<div class="a" style="left:185px;top:535px;width:10px;height:148px;background:#f4f3ee"></div>
<div class="btn3d" style="left:185px;top:536px;width:10px;height:14px"></div>
<svg class="a" style="left:187px;top:541px" width="6" height="3" viewBox="0 0 6 3"><path d="M0 3 L3 0 L6 3 Z" fill="#000"/></svg>
<div class="btn3d" style="left:185px;top:662px;width:10px;height:12px"></div>
<div class="btn3d" style="left:185px;top:678px;width:10px;height:15px"></div>
<svg class="a" style="left:187px;top:684px" width="6" height="3" viewBox="0 0 6 3"><path d="M0 0 L3 3 L6 0 Z" fill="#000"/></svg>
<div class="a" style="left:195px;top:683px;width:567px;height:10px;background:#f4f3ee"></div>
<div class="btn3d" style="left:195px;top:683px;width:14px;height:10px"></div>
<svg class="a" style="left:200px;top:685px" width="3" height="6" viewBox="0 0 3 6"><path d="M3 0 L0 3 L3 6 Z" fill="#000"/></svg>
<div class="btn3d" style="left:209px;top:683px;width:150px;height:10px"></div>
<div class="btn3d" style="left:747px;top:683px;width:14px;height:10px"></div>
<svg class="a" style="left:753px;top:685px" width="3" height="6" viewBox="0 0 3 6"><path d="M0 0 L3 3 L0 6 Z" fill="#000"/></svg>
<svg class="a" style="left:766.5px;top:72px" width="229" height="199" viewBox="0 0 229 199"><defs><radialGradient id="pg0" cx="114.5" cy="100.5" r="160" gradientUnits="userSpaceOnUse"><stop offset="0" stop-color="#2a2030"/><stop offset="0.55" stop-color="#2a1a24"/><stop offset="0.75" stop-color="#181016"/><stop offset="1" stop-color="#0c0a10"/></radialGradient><radialGradient id="pg1" cx="114.5" cy="100.5" r="95" gradientUnits="userSpaceOnUse"><stop offset="0" stop-color="#5a4058" stop-opacity="0.3"/><stop offset="0.8" stop-color="#5a3848" stop-opacity="0.4"/><stop offset="0.93" stop-color="#6a4050" stop-opacity="0.45"/><stop offset="1" stop-color="#5a3040" stop-opacity="0"/></radialGradient><radialGradient id="pg2" cx="114.5" cy="100.5" r="56" gradientUnits="userSpaceOnUse"><stop offset="0" stop-color="#8a80b0" stop-opacity="0.75"/><stop offset="0.7" stop-color="#786088" stop-opacity="0.6"/><stop offset="0.93" stop-color="#8a6888" stop-opacity="0.55"/><stop offset="1" stop-color="#7a5070" stop-opacity="0"/></radialGradient><filter id="pb" x="-50%" y="-50%" width="200%" height="200%"><feGaussianBlur stdDeviation="16"/></filter></defs><rect width="229" height="199" fill="url(#pg0)"/><circle cx="114.5" cy="100.5" r="95" fill="url(#pg1)"/><circle cx="114.5" cy="100.5" r="56" fill="url(#pg2)"/></svg>
<div class="a" style="left:766.5px;top:72px;width:229px;height:199px;background:conic-gradient(from 0deg at 114.5px 100.5px, rgba(16,24,40,0.15) 0deg, rgba(16,24,40,0) 25deg, rgba(16,24,40,0.0) 35deg, rgba(16,24,40,0.4) 45deg, rgba(16,24,40,0) 70deg, rgba(16,24,40,0) 95deg, rgba(16,24,40,0.3) 110deg, rgba(16,24,40,0) 130deg, rgba(16,24,40,0.15) 160deg, rgba(16,24,40,0.75) 180deg, rgba(16,24,40,0.2) 205deg, rgba(16,24,40,0.35) 230deg, rgba(16,24,40,0.1) 250deg, rgba(16,24,40,0.5) 285deg, rgba(16,24,40,0.25) 305deg, rgba(16,24,40,0.45) 330deg, rgba(16,24,40,0.15) 350deg, rgba(16,24,40,0.15) 360deg);-webkit-mask:radial-gradient(circle at 114.5px 100.5px, transparent 8px, #000 40px)"></div>
<svg class="a" style="left:766.5px;top:72px" width="229" height="199" viewBox="0 0 229 199"><defs><radialGradient id="pg3" cx="114.5" cy="100.5" r="42" gradientUnits="userSpaceOnUse"><stop offset="0" stop-color="#ffffff"/><stop offset="0.25" stop-color="#ffffff"/><stop offset="0.38" stop-color="#e0d8ff" stop-opacity="0.9"/><stop offset="0.58" stop-color="#a090e0" stop-opacity="0.5"/><stop offset="1" stop-color="#7060b0" stop-opacity="0"/></radialGradient></defs><circle cx="114.5" cy="100.5" r="42" fill="url(#pg3)"/></svg>
<div class="a" style="left:766px;top:276px;width:230px;height:417px;background:#fff;border-top:1px solid #716f64;border-left:1px solid #716f64"></div>
<div class="exp" style="left:771px;top:280.5px"></div>
<div class="hl" style="left:779px;top:284px;width:5px"></div>
<svg class="a" style="left:783px;top:279px" width="13" height="11"><path d="M0.5 2 L4 2 L5 1 L8 1 L8 2 L12.5 2 L12.5 10.5 L0.5 10.5 Z" fill="#f0e060" stroke="#8a8030"/><path d="M1 4 L12 4" stroke="#c8b840"/></svg>
<div class="tt" style="left:800px;top:277.7px">Basic (converted)</div>
<div class="vl" style="left:790px;top:290px;height:353px"></div>
<div class="hl" style="left:791px;top:298px;width:10px"></div>
<svg class="a" style="left:800.5px;top:291.7px" width="11" height="11"><circle cx="5.5" cy="5.5" r="4.1" fill="none" stroke="#383838" stroke-width="1.5"/><circle cx="5.5" cy="5.5" r="1.5" fill="none" stroke="#383838" stroke-width="1.1"/></svg>
<div class="tt" style="left:816px;top:291.7px">falling fire 01 (mb)</div>
<div class="hl" style="left:791px;top:312px;width:10px"></div>
<svg class="a" style="left:800.5px;top:305.7px" width="11" height="11"><circle cx="5.5" cy="5.5" r="4.1" fill="none" stroke="#383838" stroke-width="1.5"/><circle cx="5.5" cy="5.5" r="1.5" fill="none" stroke="#383838" stroke-width="1.1"/></svg>
<div class="tt" style="left:816px;top:305.7px">falling fire 01a (mb)</div>
<div class="hl" style="left:791px;top:326px;width:10px"></div>
<svg class="a" style="left:800.5px;top:319.7px" width="11" height="11"><circle cx="5.5" cy="5.5" r="4.1" fill="none" stroke="#383838" stroke-width="1.5"/><circle cx="5.5" cy="5.5" r="1.5" fill="none" stroke="#383838" stroke-width="1.1"/></svg>
<div class="tt" style="left:816px;top:319.7px">simple dots 01</div>
<div class="hl" style="left:791px;top:340px;width:10px"></div>
<svg class="a" style="left:800.5px;top:333.7px" width="11" height="11"><circle cx="5.5" cy="5.5" r="4.1" fill="none" stroke="#383838" stroke-width="1.5"/><circle cx="5.5" cy="5.5" r="1.5" fill="none" stroke="#383838" stroke-width="1.1"/></svg>
<div class="tt" style="left:816px;top:333.7px">simple plumes 01</div>
<div class="hl" style="left:791px;top:354px;width:10px"></div>
<svg class="a" style="left:800.5px;top:347.7px" width="11" height="11"><circle cx="5.5" cy="5.5" r="4.1" fill="none" stroke="#383838" stroke-width="1.5"/><circle cx="5.5" cy="5.5" r="1.5" fill="none" stroke="#383838" stroke-width="1.1"/></svg>
<div class="tt" style="left:816px;top:347.7px">simple lines 01</div>
<div class="hl" style="left:791px;top:367px;width:10px"></div>
<svg class="a" style="left:800.5px;top:360.7px" width="11" height="11"><circle cx="5.5" cy="5.5" r="4.1" fill="none" stroke="#383838" stroke-width="1.5"/><circle cx="5.5" cy="5.5" r="1.5" fill="none" stroke="#383838" stroke-width="1.1"/></svg>
<div class="tt" style="left:816px;top:360.7px">simple lines 02</div>
<div class="hl" style="left:791px;top:381px;width:10px"></div>
<svg class="a" style="left:800.5px;top:374.7px" width="11" height="11"><circle cx="5.5" cy="5.5" r="4.1" fill="none" stroke="#383838" stroke-width="1.5"/><circle cx="5.5" cy="5.5" r="1.5" fill="none" stroke="#383838" stroke-width="1.1"/></svg>
<div class="tt" style="left:816px;top:374.7px">simple dots lines 01</div>
<div class="hl" style="left:791px;top:395px;width:10px"></div>
<svg class="a" style="left:800.5px;top:388.7px" width="11" height="11"><circle cx="5.5" cy="5.5" r="4.1" fill="none" stroke="#383838" stroke-width="1.5"/><circle cx="5.5" cy="5.5" r="1.5" fill="none" stroke="#383838" stroke-width="1.1"/></svg>
<div class="tt" style="left:816px;top:388.7px">simple smears 01</div>
<div class="hl" style="left:791px;top:409px;width:10px"></div>
<svg class="a" style="left:800.5px;top:402.7px" width="11" height="11"><circle cx="5.5" cy="5.5" r="4.1" fill="none" stroke="#383838" stroke-width="1.5"/><circle cx="5.5" cy="5.5" r="1.5" fill="none" stroke="#383838" stroke-width="1.1"/></svg>
<div class="tt" style="left:816px;top:402.7px">glow rays ring 01</div>
<div class="hl" style="left:791px;top:422px;width:10px"></div>
<svg class="a" style="left:800.5px;top:415.7px" width="11" height="11"><circle cx="5.5" cy="5.5" r="4.1" fill="none" stroke="#383838" stroke-width="1.5"/><circle cx="5.5" cy="5.5" r="1.5" fill="none" stroke="#383838" stroke-width="1.1"/></svg>
<div class="tt" style="left:816px;top:415.7px">lines corner 01</div>
<div class="hl" style="left:791px;top:436px;width:10px"></div>
<svg class="a" style="left:800.5px;top:429.7px" width="11" height="11"><circle cx="5.5" cy="5.5" r="4.1" fill="none" stroke="#383838" stroke-width="1.5"/><circle cx="5.5" cy="5.5" r="1.5" fill="none" stroke="#383838" stroke-width="1.1"/></svg>
<div class="tt" style="left:816px;top:429.7px">lines corner light 01</div>
<div class="hl" style="left:791px;top:450px;width:10px"></div>
<svg class="a" style="left:800.5px;top:443.7px" width="11" height="11"><circle cx="5.5" cy="5.5" r="4.1" fill="none" stroke="#383838" stroke-width="1.5"/><circle cx="5.5" cy="5.5" r="1.5" fill="none" stroke="#383838" stroke-width="1.1"/></svg>
<div class="tt" style="left:816px;top:443.7px">simple lines 03</div>
<div class="hl" style="left:791px;top:464px;width:10px"></div>
<svg class="a" style="left:800.5px;top:457.7px" width="11" height="11"><circle cx="5.5" cy="5.5" r="4.1" fill="none" stroke="#383838" stroke-width="1.5"/><circle cx="5.5" cy="5.5" r="1.5" fill="none" stroke="#383838" stroke-width="1.1"/></svg>
<div class="tt" style="left:816px;top:457.7px">simple dots 03</div>
<div class="hl" style="left:791px;top:478px;width:10px"></div>
<svg class="a" style="left:800.5px;top:471.7px" width="11" height="11"><circle cx="5.5" cy="5.5" r="4.1" fill="none" stroke="#383838" stroke-width="1.5"/><circle cx="5.5" cy="5.5" r="1.5" fill="none" stroke="#383838" stroke-width="1.1"/></svg>
<div class="tt" style="left:816px;top:471.7px">simple rays 01</div>
<div class="hl" style="left:791px;top:492px;width:10px"></div>
<svg class="a" style="left:800.5px;top:485.7px" width="11" height="11"><circle cx="5.5" cy="5.5" r="4.1" fill="none" stroke="#383838" stroke-width="1.5"/><circle cx="5.5" cy="5.5" r="1.5" fill="none" stroke="#383838" stroke-width="1.1"/></svg>
<div class="tt" style="left:816px;top:485.7px">simple dots 04</div>
<div class="hl" style="left:791px;top:505px;width:10px"></div>
<svg class="a" style="left:800.5px;top:498.7px" width="11" height="11"><circle cx="5.5" cy="5.5" r="4.1" fill="none" stroke="#383838" stroke-width="1.5"/><circle cx="5.5" cy="5.5" r="1.5" fill="none" stroke="#383838" stroke-width="1.1"/></svg>
<div class="tt" style="left:816px;top:498.7px">simple dots coil 01</div>
<div class="hl" style="left:791px;top:519px;width:10px"></div>
<svg class="a" style="left:800.5px;top:512.7px" width="11" height="11"><circle cx="5.5" cy="5.5" r="4.1" fill="none" stroke="#383838" stroke-width="1.5"/><circle cx="5.5" cy="5.5" r="1.5" fill="none" stroke="#383838" stroke-width="1.1"/></svg>
<div class="tt" style="left:816px;top:512.7px">simple dots coil 02</div>
<div class="hl" style="left:791px;top:533px;width:10px"></div>
<svg class="a" style="left:800.5px;top:526.7px" width="11" height="11"><circle cx="5.5" cy="5.5" r="4.1" fill="none" stroke="#383838" stroke-width="1.5"/><circle cx="5.5" cy="5.5" r="1.5" fill="none" stroke="#383838" stroke-width="1.1"/></svg>
<div class="tt" style="left:816px;top:526.7px">new thin rays 01</div>
<div class="hl" style="left:791px;top:547px;width:10px"></div>
<svg class="a" style="left:800.5px;top:540.7px" width="11" height="11"><circle cx="5.5" cy="5.5" r="4.1" fill="none" stroke="#383838" stroke-width="1.5"/><circle cx="5.5" cy="5.5" r="1.5" fill="none" stroke="#383838" stroke-width="1.1"/></svg>
<div class="tt" style="left:816px;top:540.7px">new thin rays 02</div>
<div class="hl" style="left:791px;top:560px;width:10px"></div>
<svg class="a" style="left:800.5px;top:553.7px" width="11" height="11"><circle cx="5.5" cy="5.5" r="4.1" fill="none" stroke="#383838" stroke-width="1.5"/><circle cx="5.5" cy="5.5" r="1.5" fill="none" stroke="#383838" stroke-width="1.1"/></svg>
<div class="tt" style="left:816px;top:553.7px">new thin rays 03</div>
<div class="hl" style="left:791px;top:574px;width:10px"></div>
<svg class="a" style="left:800.5px;top:567.7px" width="11" height="11"><circle cx="5.5" cy="5.5" r="4.1" fill="none" stroke="#383838" stroke-width="1.5"/><circle cx="5.5" cy="5.5" r="1.5" fill="none" stroke="#383838" stroke-width="1.1"/></svg>
<div class="a" style="left:814.5px;top:567.5px;width:58px;height:14px;background:#efede3"></div>
<div class="tt" style="left:816px;top:567.7px">hyno rays 01</div>
<div class="hl" style="left:791px;top:588px;width:10px"></div>
<svg class="a" style="left:800.5px;top:581.7px" width="11" height="11"><circle cx="5.5" cy="5.5" r="4.1" fill="none" stroke="#383838" stroke-width="1.5"/><circle cx="5.5" cy="5.5" r="1.5" fill="none" stroke="#383838" stroke-width="1.1"/></svg>
<div class="tt" style="left:816px;top:581.7px">hyno rays 02</div>
<div class="hl" style="left:791px;top:602px;width:10px"></div>
<svg class="a" style="left:800.5px;top:595.7px" width="11" height="11"><circle cx="5.5" cy="5.5" r="4.1" fill="none" stroke="#383838" stroke-width="1.5"/><circle cx="5.5" cy="5.5" r="1.5" fill="none" stroke="#383838" stroke-width="1.1"/></svg>
<div class="tt" style="left:816px;top:595.7px">hypno rays 03</div>
<div class="hl" style="left:791px;top:616px;width:10px"></div>
<svg class="a" style="left:800.5px;top:609.7px" width="11" height="11"><circle cx="5.5" cy="5.5" r="4.1" fill="none" stroke="#383838" stroke-width="1.5"/><circle cx="5.5" cy="5.5" r="1.5" fill="none" stroke="#383838" stroke-width="1.1"/></svg>
<div class="tt" style="left:816px;top:609.7px">hypno rays 04</div>
<div class="hl" style="left:791px;top:630px;width:10px"></div>
<svg class="a" style="left:800.5px;top:623.7px" width="11" height="11"><circle cx="5.5" cy="5.5" r="4.1" fill="none" stroke="#383838" stroke-width="1.5"/><circle cx="5.5" cy="5.5" r="1.5" fill="none" stroke="#383838" stroke-width="1.1"/></svg>
<div class="tt" style="left:816px;top:623.7px">cone of light 01</div>
<div class="hl" style="left:791px;top:643px;width:10px"></div>
<svg class="a" style="left:800.5px;top:636.7px" width="11" height="11"><circle cx="5.5" cy="5.5" r="4.1" fill="none" stroke="#383838" stroke-width="1.5"/><circle cx="5.5" cy="5.5" r="1.5" fill="none" stroke="#383838" stroke-width="1.1"/></svg>
<div class="tt" style="left:816px;top:636.7px">simple radio beacon</div>
<div class="tt" style="left:5px;top:697.5px;font-size:10.2px">Ready</div>
<div class="a" style="left:803px;top:696px;width:39px;height:14px;border:1px solid;border-color:#aca899 #fff #fff #aca899"></div>
<div class="tt" style="left:806px;top:697.4px;font-size:10.2px">1670</div>
<div class="a" style="left:845px;top:696px;width:57px;height:14px;border:1px solid;border-color:#aca899 #fff #fff #aca899"></div>
<div class="tt" style="left:848px;top:697.4px;font-size:10.2px">0.0 fps (30)</div>
<div class="a" style="left:903px;top:696px;width:23px;height:14px;border:1px solid;border-color:#aca899 #fff #fff #aca899"></div>
<div class="a" style="left:928px;top:696px;width:24px;height:14px;border:1px solid;border-color:#aca899 #fff #fff #aca899"></div>
<div class="a" style="left:954px;top:696px;width:26px;height:14px;border:1px solid;border-color:#aca899 #fff #fff #aca899"></div>
<svg class="a" style="left:984px;top:698px" width="11" height="11" viewBox="0 0 11 11"><path d="M10 2 L2 10 M10 6 L6 10" stroke="#aca899" stroke-width="1.2"/></svg></div></body></html>
